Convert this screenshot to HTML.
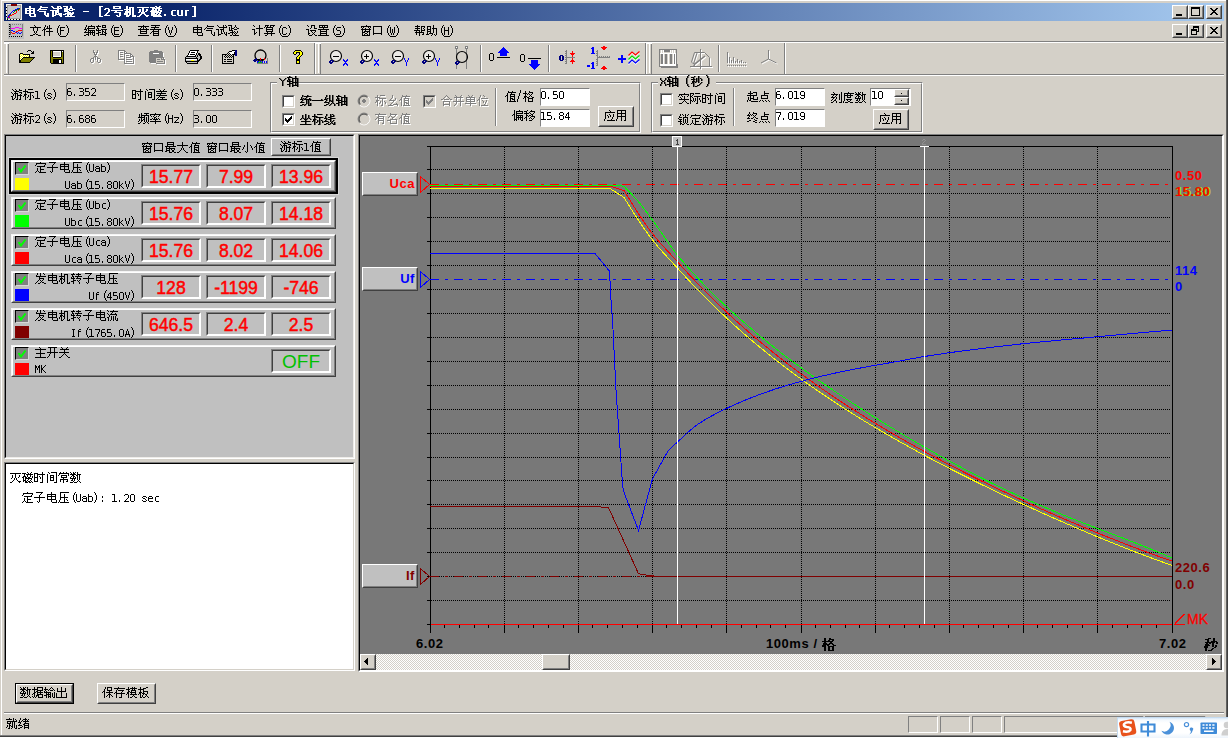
<!DOCTYPE html>
<html><head><meta charset="utf-8"><title>UI</title>
<style>
html,body{margin:0;padding:0}
body{width:1228px;height:738px;overflow:hidden;background:#D4D0C8;position:relative;font-family:"Liberation Sans",sans-serif}
div,svg,span{position:absolute;box-sizing:content-box}
svg{overflow:visible}
svg.t{shape-rendering:crispEdges}
.v{color:#f00;font-size:19px;line-height:25px;text-align:center;white-space:nowrap;transform:scaleX(.925);-webkit-text-stroke:.5px currentColor}
.cl{font-weight:bold;font-size:13px;line-height:13px;white-space:nowrap;letter-spacing:.55px}
</style></head><body>
<div style="left:0px;top:0px;width:1228px;height:1px;background:#FFFFFF;"></div>
<div style="left:1px;top:0px;width:1px;height:736px;background:#FFFFFF;"></div>
<div style="left:0px;top:0px;width:1px;height:738px;background:#D4D0C8;"></div>
<div style="left:1226px;top:0px;width:1px;height:737px;background:#606060;"></div>
<div style="left:1227px;top:0px;width:1px;height:738px;background:#404040;"></div>
<div style="left:0px;top:735px;width:1227px;height:1px;background:#808080;"></div>
<div style="left:0px;top:736px;width:1228px;height:1px;background:#404040;"></div>
<div style="left:0px;top:737px;width:1228px;height:1px;background:#FFFFFF;"></div>
<div style="left:1px;top:735px;width:1px;height:1px;background:#808080;"></div>
<div style="left:4px;top:3px;width:1220px;height:18px;background:linear-gradient(90deg,#0A246A 0%,#0A246A 12%,#A6CAF0 100%);"></div>
<svg class="t" style="left:24px;top:5px;" width="176" height="15" viewBox="0 -1 176 15" role="img" aria-label="电气试验 - [2号机灭磁.cur]"><title>电气试验 - [2号机灭磁.cur]</title><path d="M5 0h2v1h-2zM5 1h2v1h-2zM1 2h10v1h-10zM1 3h2v1h-2zM5 3h2v1h-2zM9 3h2v1h-2zM1 4h10v1h-10zM1 5h2v1h-2zM5 5h2v1h-2zM9 5h2v1h-2zM1 6h2v1h-2zM5 6h2v1h-2zM9 6h2v1h-2zM1 7h10v1h-10zM5 8h2v1h-2zM10 8h2v1h-2zM5 9h2v1h-2zM10 9h2v1h-2zM6 10h6v1h-6zM16 0h2v1h-2zM16 1h8v1h-8zM15 2h2v1h-2zM14 3h9v1h-9zM13 4h2v1h-2zM15 5h7v1h-7zM20 6h2v1h-2zM20 7h2v1h-2zM23 7h2v1h-2zM20 8h2v1h-2zM23 8h2v1h-2zM21 9h4v1h-4zM22 10h3v1h-3zM27 0h2v1h-2zM33 0h4v1h-4zM28 1h2v1h-2zM33 1h2v1h-2zM36 1h2v1h-2zM29 2h9v1h-9zM33 3h2v1h-2zM26 4h9v1h-9zM28 5h2v1h-2zM31 5h4v1h-4zM28 6h2v1h-2zM31 6h4v1h-4zM28 7h2v1h-2zM31 7h2v1h-2zM34 7h4v1h-4zM28 8h2v1h-2zM31 8h7v1h-7zM28 9h4v1h-4zM35 9h3v1h-3zM28 10h2v1h-2zM36 10h2v1h-2zM39 0h5v1h-5zM46 0h2v1h-2zM42 1h2v1h-2zM46 1h2v1h-2zM40 2h4v1h-4zM45 2h4v1h-4zM40 3h6v1h-6zM48 3h3v1h-3zM40 4h4v1h-4zM45 4h4v1h-4zM40 5h5v1h-5zM43 6h4v1h-4zM48 6h2v1h-2zM41 7h9v1h-9zM39 8h3v1h-3zM43 8h6v1h-6zM43 9h2v1h-2zM46 9h2v1h-2zM41 10h10v1h-10zM59 5h6v1h-6zM75 0h4v1h-4zM75 1h2v1h-2zM75 2h2v1h-2zM75 3h2v1h-2zM75 4h2v1h-2zM75 5h2v1h-2zM75 6h2v1h-2zM75 7h2v1h-2zM75 8h2v1h-2zM75 9h2v1h-2zM75 10h4v1h-4zM81 2h4v1h-4zM80 3h2v1h-2zM84 3h2v1h-2zM84 4h2v1h-2zM84 5h2v1h-2zM83 6h2v1h-2zM82 7h2v1h-2zM81 8h2v1h-2zM80 9h6v1h-6zM89 0h8v1h-8zM89 1h2v1h-2zM95 1h2v1h-2zM89 2h8v1h-8zM87 4h12v1h-12zM91 5h2v1h-2zM90 6h7v1h-7zM95 7h2v1h-2zM95 8h2v1h-2zM92 9h2v1h-2zM95 9h2v1h-2zM93 10h3v1h-3zM102 0h2v1h-2zM102 1h2v1h-2zM105 1h5v1h-5zM102 2h2v1h-2zM105 2h2v1h-2zM108 2h2v1h-2zM100 3h7v1h-7zM108 3h2v1h-2zM102 4h2v1h-2zM105 4h2v1h-2zM108 4h2v1h-2zM101 5h6v1h-6zM108 5h2v1h-2zM101 6h6v1h-6zM108 6h2v1h-2zM100 7h4v1h-4zM105 7h2v1h-2zM108 7h2v1h-2zM100 8h4v1h-4zM105 8h2v1h-2zM108 8h2v1h-2zM102 9h4v1h-4zM108 9h4v1h-4zM102 10h3v1h-3zM108 10h4v1h-4zM113 1h12v1h-12zM118 2h2v1h-2zM115 3h2v1h-2zM118 3h2v1h-2zM122 3h2v1h-2zM115 4h2v1h-2zM118 4h2v1h-2zM122 4h2v1h-2zM115 5h2v1h-2zM118 5h2v1h-2zM121 5h2v1h-2zM114 6h2v1h-2zM117 6h4v1h-4zM117 7h4v1h-4zM116 8h2v1h-2zM120 8h2v1h-2zM115 9h2v1h-2zM121 9h4v1h-4zM113 10h3v1h-3zM122 10h2v1h-2zM131 0h2v1h-2zM135 0h2v1h-2zM126 1h5v1h-5zM132 1h4v1h-4zM128 2h10v1h-10zM128 3h2v1h-2zM131 3h2v1h-2zM134 3h2v1h-2zM127 4h6v1h-6zM134 4h4v1h-4zM126 5h9v1h-9zM136 5h2v1h-2zM127 6h10v1h-10zM127 7h4v1h-4zM132 7h2v1h-2zM135 7h2v1h-2zM127 8h6v1h-6zM134 8h2v1h-2zM127 9h10v1h-10zM129 10h9v1h-9zM140 8h2v1h-2zM140 9h2v1h-2zM148 4h4v1h-4zM147 5h2v1h-2zM147 6h2v1h-2zM147 7h2v1h-2zM147 8h2v1h-2zM148 9h4v1h-4zM153 4h2v1h-2zM157 4h2v1h-2zM153 5h2v1h-2zM157 5h2v1h-2zM153 6h2v1h-2zM157 6h2v1h-2zM153 7h2v1h-2zM157 7h2v1h-2zM153 8h2v1h-2zM157 8h2v1h-2zM154 9h5v1h-5zM161 4h4v1h-4zM161 5h2v1h-2zM161 6h2v1h-2zM161 7h2v1h-2zM161 8h2v1h-2zM161 9h2v1h-2zM168 0h4v1h-4zM170 1h2v1h-2zM170 2h2v1h-2zM170 3h2v1h-2zM170 4h2v1h-2zM170 5h2v1h-2zM170 6h2v1h-2zM170 7h2v1h-2zM170 8h2v1h-2zM170 9h2v1h-2zM168 10h4v1h-4z" fill="#fff"/></svg>
<div style="left:1172px;top:5px;width:14px;height:12px;border:1px solid;border-color:#FFFFFF #404040 #404040 #FFFFFF"><div style="left:0;top:0;width:12px;height:10px;background:#D4D0C8;border:1px solid;border-color:#D4D0C8 #808080 #808080 #D4D0C8"></div></div>
<svg style="left:1172px;top:5px" width="16" height="14" viewBox="0 0 16 14" shape-rendering="crispEdges"><path d="M4 9h6v2h-6z" fill="#000" fill-rule="evenodd"/></svg>
<div style="left:1188px;top:5px;width:14px;height:12px;border:1px solid;border-color:#FFFFFF #404040 #404040 #FFFFFF"><div style="left:0;top:0;width:12px;height:10px;background:#D4D0C8;border:1px solid;border-color:#D4D0C8 #808080 #808080 #D4D0C8"></div></div>
<svg style="left:1188px;top:5px" width="16" height="14" viewBox="0 0 16 14" shape-rendering="crispEdges"><path d="M3 2h9v9h-9zM4 4v6h7v-6z" fill="#000" fill-rule="evenodd"/></svg>
<div style="left:1206px;top:5px;width:14px;height:12px;border:1px solid;border-color:#FFFFFF #404040 #404040 #FFFFFF"><div style="left:0;top:0;width:12px;height:10px;background:#D4D0C8;border:1px solid;border-color:#D4D0C8 #808080 #808080 #D4D0C8"></div></div>
<svg style="left:1206px;top:5px" width="16" height="14" viewBox="0 0 16 14" shape-rendering="crispEdges"><path d="M4 3h2v1h-2zM10 3h2v1h-2zM5 4h2v1h-2zM9 4h2v1h-2zM6 5h2v1h-2zM8 5h2v1h-2zM7 6h2v1h-2zM7 6h2v1h-2zM8 7h2v1h-2zM6 7h2v1h-2zM9 8h2v1h-2zM5 8h2v1h-2zM10 9h2v1h-2zM4 9h2v1h-2z" fill="#000" fill-rule="nonzero"/></svg>
<div style="left:1172px;top:24px;width:14px;height:12px;border:1px solid;border-color:#FFFFFF #404040 #404040 #FFFFFF"><div style="left:0;top:0;width:12px;height:10px;background:#D4D0C8;border:1px solid;border-color:#D4D0C8 #808080 #808080 #D4D0C8"></div></div>
<svg style="left:1172px;top:24px" width="16" height="14" viewBox="0 0 16 14" shape-rendering="crispEdges"><path d="M4 9h6v2h-6z" fill="#000" fill-rule="evenodd"/></svg>
<div style="left:1188px;top:24px;width:14px;height:12px;border:1px solid;border-color:#FFFFFF #404040 #404040 #FFFFFF"><div style="left:0;top:0;width:12px;height:10px;background:#D4D0C8;border:1px solid;border-color:#D4D0C8 #808080 #808080 #D4D0C8"></div></div>
<svg style="left:1188px;top:24px" width="16" height="14" viewBox="0 0 16 14" shape-rendering="crispEdges"><path d="M5 2h6v6h-2v-1h1v-3h-4v1h-1zM3 5h6v6h-6zM4 7v3h4v-3z" fill="#000" fill-rule="evenodd"/></svg>
<div style="left:1206px;top:24px;width:14px;height:12px;border:1px solid;border-color:#FFFFFF #404040 #404040 #FFFFFF"><div style="left:0;top:0;width:12px;height:10px;background:#D4D0C8;border:1px solid;border-color:#D4D0C8 #808080 #808080 #D4D0C8"></div></div>
<svg style="left:1206px;top:24px" width="16" height="14" viewBox="0 0 16 14" shape-rendering="crispEdges"><path d="M4 3h2v1h-2zM10 3h2v1h-2zM5 4h2v1h-2zM9 4h2v1h-2zM6 5h2v1h-2zM8 5h2v1h-2zM7 6h2v1h-2zM7 6h2v1h-2zM8 7h2v1h-2zM6 7h2v1h-2zM9 8h2v1h-2zM5 8h2v1h-2zM10 9h2v1h-2zM4 9h2v1h-2z" fill="#000" fill-rule="nonzero"/></svg>
<svg class="t" style="left:30px;top:24px;" width="44" height="15" viewBox="0 -1 44 15" role="img" aria-label="文件(F)"><title>文件(F)</title><path d="M4 0h1v1h-1zM5 1h1v1h-1zM0 2h11v1h-11zM3 3h1v1h-1zM7 3h1v1h-1zM3 4h1v1h-1zM7 4h1v1h-1zM3 5h1v1h-1zM7 5h1v1h-1zM4 6h1v1h-1zM6 6h1v1h-1zM4 7h1v1h-1zM6 7h1v1h-1zM5 8h1v1h-1zM3 9h2v1h-2zM6 9h2v1h-2zM0 10h3v1h-3zM8 10h3v1h-3zM15 0h1v1h-1zM19 0h1v1h-1zM15 1h1v1h-1zM17 1h1v1h-1zM19 1h1v1h-1zM14 2h1v1h-1zM17 2h1v1h-1zM19 2h1v1h-1zM14 3h1v1h-1zM16 3h6v1h-6zM13 4h3v1h-3zM19 4h1v1h-1zM12 5h1v1h-1zM14 5h1v1h-1zM19 5h1v1h-1zM14 6h1v1h-1zM16 6h7v1h-7zM14 7h1v1h-1zM19 7h1v1h-1zM14 8h1v1h-1zM19 8h1v1h-1zM14 9h1v1h-1zM19 9h1v1h-1zM14 10h1v1h-1zM19 10h1v1h-1zM29 0h1v1h-1zM28 1h1v1h-1zM28 2h1v1h-1zM27 3h1v1h-1zM27 4h1v1h-1zM27 5h1v1h-1zM27 6h1v1h-1zM27 7h1v1h-1zM28 8h1v1h-1zM28 9h1v1h-1zM29 10h1v1h-1zM30 2h5v1h-5zM30 3h1v1h-1zM30 4h1v1h-1zM30 5h4v1h-4zM30 6h1v1h-1zM30 7h1v1h-1zM30 8h1v1h-1zM30 9h1v1h-1zM36 0h1v1h-1zM37 1h1v1h-1zM37 2h1v1h-1zM38 3h1v1h-1zM38 4h1v1h-1zM38 5h1v1h-1zM38 6h1v1h-1zM38 7h1v1h-1zM37 8h1v1h-1zM37 9h1v1h-1zM36 10h1v1h-1zM30 11h6v1h-6z" fill="#000"/></svg>
<svg class="t" style="left:84px;top:24px;" width="44" height="15" viewBox="0 -1 44 15" role="img" aria-label="编辑(E)"><title>编辑(E)</title><path d="M2 0h1v1h-1zM7 0h1v1h-1zM2 1h1v1h-1zM4 1h7v1h-7zM1 2h1v1h-1zM4 2h1v1h-1zM10 2h1v1h-1zM1 3h1v1h-1zM3 3h8v1h-8zM0 4h3v1h-3zM4 4h1v1h-1zM2 5h1v1h-1zM4 5h7v1h-7zM1 6h1v1h-1zM4 6h1v1h-1zM6 6h1v1h-1zM8 6h1v1h-1zM10 6h1v1h-1zM0 7h11v1h-11zM4 8h1v1h-1zM6 8h1v1h-1zM8 8h1v1h-1zM10 8h1v1h-1zM2 9h3v1h-3zM6 9h1v1h-1zM8 9h1v1h-1zM10 9h1v1h-1zM0 10h2v1h-2zM4 10h1v1h-1zM9 10h2v1h-2zM14 0h1v1h-1zM18 0h4v1h-4zM12 1h5v1h-5zM18 1h1v1h-1zM21 1h1v1h-1zM13 2h1v1h-1zM18 2h4v1h-4zM13 3h2v1h-2zM12 4h1v1h-1zM14 4h1v1h-1zM17 4h6v1h-6zM12 5h5v1h-5zM18 5h1v1h-1zM21 5h1v1h-1zM14 6h1v1h-1zM18 6h2v1h-2zM21 6h1v1h-1zM14 7h3v1h-3zM18 7h1v1h-1zM20 7h2v1h-2zM12 8h3v1h-3zM18 8h1v1h-1zM21 8h2v1h-2zM14 9h1v1h-1zM16 9h6v1h-6zM14 10h1v1h-1zM21 10h1v1h-1zM29 0h1v1h-1zM28 1h1v1h-1zM28 2h1v1h-1zM27 3h1v1h-1zM27 4h1v1h-1zM27 5h1v1h-1zM27 6h1v1h-1zM27 7h1v1h-1zM28 8h1v1h-1zM28 9h1v1h-1zM29 10h1v1h-1zM30 2h5v1h-5zM30 3h1v1h-1zM30 4h1v1h-1zM30 5h5v1h-5zM30 6h1v1h-1zM30 7h1v1h-1zM30 8h1v1h-1zM30 9h5v1h-5zM36 0h1v1h-1zM37 1h1v1h-1zM37 2h1v1h-1zM38 3h1v1h-1zM38 4h1v1h-1zM38 5h1v1h-1zM38 6h1v1h-1zM38 7h1v1h-1zM37 8h1v1h-1zM37 9h1v1h-1zM36 10h1v1h-1zM30 11h6v1h-6z" fill="#000"/></svg>
<svg class="t" style="left:138px;top:24px;" width="44" height="15" viewBox="0 -1 44 15" role="img" aria-label="查看(V)"><title>查看(V)</title><path d="M5 0h1v1h-1zM0 1h11v1h-11zM3 2h1v1h-1zM5 2h1v1h-1zM7 2h1v1h-1zM2 3h1v1h-1zM5 3h1v1h-1zM8 3h1v1h-1zM0 4h11v1h-11zM2 5h1v1h-1zM8 5h1v1h-1zM2 6h7v1h-7zM2 7h1v1h-1zM8 7h1v1h-1zM2 8h7v1h-7zM0 10h11v1h-11zM13 0h9v1h-9zM17 1h1v1h-1zM13 2h8v1h-8zM16 3h1v1h-1zM12 4h11v1h-11zM15 5h1v1h-1zM20 5h1v1h-1zM14 6h7v1h-7zM13 7h1v1h-1zM15 7h1v1h-1zM20 7h1v1h-1zM12 8h1v1h-1zM15 8h6v1h-6zM15 9h1v1h-1zM20 9h1v1h-1zM15 10h6v1h-6zM29 0h1v1h-1zM28 1h1v1h-1zM28 2h1v1h-1zM27 3h1v1h-1zM27 4h1v1h-1zM27 5h1v1h-1zM27 6h1v1h-1zM27 7h1v1h-1zM28 8h1v1h-1zM28 9h1v1h-1zM29 10h1v1h-1zM30 2h1v1h-1zM34 2h1v1h-1zM30 3h1v1h-1zM34 3h1v1h-1zM30 4h1v1h-1zM34 4h1v1h-1zM31 5h1v1h-1zM33 5h1v1h-1zM31 6h1v1h-1zM33 6h1v1h-1zM31 7h1v1h-1zM33 7h1v1h-1zM32 8h1v1h-1zM32 9h1v1h-1zM36 0h1v1h-1zM37 1h1v1h-1zM37 2h1v1h-1zM38 3h1v1h-1zM38 4h1v1h-1zM38 5h1v1h-1zM38 6h1v1h-1zM38 7h1v1h-1zM37 8h1v1h-1zM37 9h1v1h-1zM36 10h1v1h-1zM30 11h6v1h-6z" fill="#000"/></svg>
<svg class="t" style="left:192px;top:24px;" width="50" height="15" viewBox="0 -1 50 15" role="img" aria-label="电气试验"><title>电气试验</title><path d="M5 0h1v1h-1zM5 1h1v1h-1zM1 2h9v1h-9zM1 3h1v1h-1zM5 3h1v1h-1zM9 3h1v1h-1zM1 4h9v1h-9zM1 5h1v1h-1zM5 5h1v1h-1zM9 5h1v1h-1zM1 6h1v1h-1zM5 6h1v1h-1zM9 6h1v1h-1zM1 7h9v1h-9zM5 8h1v1h-1zM10 8h1v1h-1zM5 9h1v1h-1zM10 9h1v1h-1zM6 10h5v1h-5zM15 0h1v1h-1zM15 1h7v1h-7zM14 2h1v1h-1zM13 3h1v1h-1zM15 3h6v1h-6zM12 4h1v1h-1zM14 5h6v1h-6zM19 6h1v1h-1zM19 7h1v1h-1zM22 7h1v1h-1zM19 8h1v1h-1zM22 8h1v1h-1zM20 9h1v1h-1zM22 9h1v1h-1zM21 10h2v1h-2zM25 0h1v1h-1zM31 0h1v1h-1zM33 0h1v1h-1zM26 1h1v1h-1zM31 1h1v1h-1zM34 1h1v1h-1zM27 2h8v1h-8zM31 3h1v1h-1zM24 4h3v1h-3zM28 4h4v1h-4zM26 5h1v1h-1zM29 5h1v1h-1zM31 5h1v1h-1zM26 6h1v1h-1zM29 6h1v1h-1zM31 6h1v1h-1zM26 7h1v1h-1zM29 7h1v1h-1zM32 7h1v1h-1zM34 7h1v1h-1zM26 8h1v1h-1zM29 8h2v1h-2zM32 8h1v1h-1zM34 8h1v1h-1zM26 9h3v1h-3zM33 9h2v1h-2zM26 10h1v1h-1zM34 10h1v1h-1zM36 0h4v1h-4zM43 0h1v1h-1zM39 1h1v1h-1zM43 1h1v1h-1zM37 2h1v1h-1zM39 2h1v1h-1zM42 2h1v1h-1zM44 2h1v1h-1zM37 3h1v1h-1zM39 3h3v1h-3zM45 3h2v1h-2zM37 4h1v1h-1zM39 4h1v1h-1zM42 4h3v1h-3zM37 5h4v1h-4zM40 6h1v1h-1zM42 6h1v1h-1zM45 6h1v1h-1zM38 7h4v1h-4zM43 7h1v1h-1zM45 7h1v1h-1zM36 8h2v1h-2zM40 8h1v1h-1zM42 8h1v1h-1zM44 8h1v1h-1zM40 9h1v1h-1zM43 9h1v1h-1zM38 10h2v1h-2zM41 10h6v1h-6z" fill="#000"/></svg>
<svg class="t" style="left:252px;top:24px;" width="44" height="15" viewBox="0 -1 44 15" role="img" aria-label="计算(C)"><title>计算(C)</title><path d="M1 0h1v1h-1zM7 0h1v1h-1zM2 1h1v1h-1zM7 1h1v1h-1zM7 2h1v1h-1zM4 3h7v1h-7zM0 4h3v1h-3zM7 4h1v1h-1zM2 5h1v1h-1zM7 5h1v1h-1zM2 6h1v1h-1zM7 6h1v1h-1zM2 7h1v1h-1zM4 7h1v1h-1zM7 7h1v1h-1zM2 8h2v1h-2zM7 8h1v1h-1zM2 9h1v1h-1zM7 9h1v1h-1zM7 10h1v1h-1zM13 0h4v1h-4zM18 0h5v1h-5zM13 1h1v1h-1zM15 1h1v1h-1zM18 1h1v1h-1zM21 1h1v1h-1zM12 2h1v1h-1zM14 2h7v1h-7zM14 3h1v1h-1zM20 3h1v1h-1zM14 4h7v1h-7zM14 5h1v1h-1zM20 5h1v1h-1zM14 6h7v1h-7zM15 7h1v1h-1zM19 7h1v1h-1zM12 8h11v1h-11zM15 9h1v1h-1zM19 9h1v1h-1zM13 10h2v1h-2zM19 10h1v1h-1zM29 0h1v1h-1zM28 1h1v1h-1zM28 2h1v1h-1zM27 3h1v1h-1zM27 4h1v1h-1zM27 5h1v1h-1zM27 6h1v1h-1zM27 7h1v1h-1zM28 8h1v1h-1zM28 9h1v1h-1zM29 10h1v1h-1zM31 2h3v1h-3zM30 3h1v1h-1zM34 3h1v1h-1zM30 4h1v1h-1zM30 5h1v1h-1zM30 6h1v1h-1zM30 7h1v1h-1zM30 8h1v1h-1zM34 8h1v1h-1zM31 9h3v1h-3zM36 0h1v1h-1zM37 1h1v1h-1zM37 2h1v1h-1zM38 3h1v1h-1zM38 4h1v1h-1zM38 5h1v1h-1zM38 6h1v1h-1zM38 7h1v1h-1zM37 8h1v1h-1zM37 9h1v1h-1zM36 10h1v1h-1zM30 11h6v1h-6z" fill="#000"/></svg>
<svg class="t" style="left:306px;top:24px;" width="44" height="15" viewBox="0 -1 44 15" role="img" aria-label="设置(S)"><title>设置(S)</title><path d="M1 0h1v1h-1zM5 0h4v1h-4zM2 1h1v1h-1zM5 1h1v1h-1zM8 1h1v1h-1zM5 2h1v1h-1zM8 2h1v1h-1zM4 3h1v1h-1zM8 3h3v1h-3zM0 4h3v1h-3zM2 5h1v1h-1zM4 5h6v1h-6zM2 6h1v1h-1zM5 6h1v1h-1zM9 6h1v1h-1zM2 7h1v1h-1zM6 7h1v1h-1zM8 7h1v1h-1zM2 8h2v1h-2zM7 8h1v1h-1zM2 9h1v1h-1zM6 9h1v1h-1zM8 9h1v1h-1zM3 10h3v1h-3zM9 10h2v1h-2zM13 0h9v1h-9zM13 1h1v1h-1zM16 1h1v1h-1zM18 1h1v1h-1zM21 1h1v1h-1zM13 2h9v1h-9zM17 3h1v1h-1zM12 4h11v1h-11zM14 5h1v1h-1zM20 5h1v1h-1zM14 6h7v1h-7zM14 7h1v1h-1zM20 7h1v1h-1zM14 8h7v1h-7zM14 9h1v1h-1zM20 9h1v1h-1zM12 10h11v1h-11zM29 0h1v1h-1zM28 1h1v1h-1zM28 2h1v1h-1zM27 3h1v1h-1zM27 4h1v1h-1zM27 5h1v1h-1zM27 6h1v1h-1zM27 7h1v1h-1zM28 8h1v1h-1zM28 9h1v1h-1zM29 10h1v1h-1zM31 2h4v1h-4zM30 3h1v1h-1zM30 4h1v1h-1zM31 5h3v1h-3zM34 6h1v1h-1zM34 7h1v1h-1zM34 8h1v1h-1zM30 9h4v1h-4zM36 0h1v1h-1zM37 1h1v1h-1zM37 2h1v1h-1zM38 3h1v1h-1zM38 4h1v1h-1zM38 5h1v1h-1zM38 6h1v1h-1zM38 7h1v1h-1zM37 8h1v1h-1zM37 9h1v1h-1zM36 10h1v1h-1zM30 11h6v1h-6z" fill="#000"/></svg>
<svg class="t" style="left:360px;top:24px;" width="44" height="15" viewBox="0 -1 44 15" role="img" aria-label="窗口(W)"><title>窗口(W)</title><path d="M6 0h1v1h-1zM1 1h10v1h-10zM1 2h1v1h-1zM3 2h1v1h-1zM8 2h1v1h-1zM10 2h1v1h-1zM2 3h1v1h-1zM5 3h1v1h-1zM9 3h1v1h-1zM1 4h10v1h-10zM2 5h1v1h-1zM5 5h1v1h-1zM9 5h1v1h-1zM2 6h1v1h-1zM4 6h6v1h-6zM2 7h3v1h-3zM7 7h1v1h-1zM9 7h1v1h-1zM2 8h1v1h-1zM5 8h2v1h-2zM9 8h1v1h-1zM2 9h1v1h-1zM4 9h1v1h-1zM7 9h1v1h-1zM9 9h1v1h-1zM2 10h8v1h-8zM13 1h9v1h-9zM13 2h1v1h-1zM21 2h1v1h-1zM13 3h1v1h-1zM21 3h1v1h-1zM13 4h1v1h-1zM21 4h1v1h-1zM13 5h1v1h-1zM21 5h1v1h-1zM13 6h1v1h-1zM21 6h1v1h-1zM13 7h1v1h-1zM21 7h1v1h-1zM13 8h9v1h-9zM13 9h1v1h-1zM21 9h1v1h-1zM29 0h1v1h-1zM28 1h1v1h-1zM28 2h1v1h-1zM27 3h1v1h-1zM27 4h1v1h-1zM27 5h1v1h-1zM27 6h1v1h-1zM27 7h1v1h-1zM28 8h1v1h-1zM28 9h1v1h-1zM29 10h1v1h-1zM30 2h1v1h-1zM34 2h1v1h-1zM30 3h1v1h-1zM34 3h1v1h-1zM30 4h1v1h-1zM32 4h1v1h-1zM34 4h1v1h-1zM30 5h1v1h-1zM32 5h1v1h-1zM34 5h1v1h-1zM30 6h1v1h-1zM32 6h1v1h-1zM34 6h1v1h-1zM30 7h1v1h-1zM32 7h1v1h-1zM34 7h1v1h-1zM31 8h1v1h-1zM33 8h1v1h-1zM31 9h1v1h-1zM33 9h1v1h-1zM36 0h1v1h-1zM37 1h1v1h-1zM37 2h1v1h-1zM38 3h1v1h-1zM38 4h1v1h-1zM38 5h1v1h-1zM38 6h1v1h-1zM38 7h1v1h-1zM37 8h1v1h-1zM37 9h1v1h-1zM36 10h1v1h-1zM30 11h6v1h-6z" fill="#000"/></svg>
<svg class="t" style="left:414px;top:24px;" width="44" height="15" viewBox="0 -1 44 15" role="img" aria-label="帮助(H)"><title>帮助(H)</title><path d="M3 0h1v1h-1zM1 1h5v1h-5zM7 1h4v1h-4zM3 2h1v1h-1zM7 2h1v1h-1zM10 2h1v1h-1zM1 3h5v1h-5zM7 3h1v1h-1zM9 3h1v1h-1zM3 4h1v1h-1zM7 4h1v1h-1zM10 4h1v1h-1zM0 5h6v1h-6zM7 5h4v1h-4zM2 6h1v1h-1zM5 6h1v1h-1zM7 6h1v1h-1zM1 7h9v1h-9zM2 8h1v1h-1zM5 8h1v1h-1zM9 8h1v1h-1zM2 9h1v1h-1zM5 9h1v1h-1zM8 9h2v1h-2zM5 10h1v1h-1zM19 0h1v1h-1zM13 1h4v1h-4zM19 1h1v1h-1zM13 2h1v1h-1zM16 2h1v1h-1zM19 2h1v1h-1zM13 3h1v1h-1zM16 3h1v1h-1zM18 3h5v1h-5zM13 4h4v1h-4zM19 4h1v1h-1zM22 4h1v1h-1zM13 5h1v1h-1zM16 5h1v1h-1zM19 5h1v1h-1zM22 5h1v1h-1zM13 6h4v1h-4zM19 6h1v1h-1zM22 6h1v1h-1zM13 7h1v1h-1zM16 7h1v1h-1zM19 7h1v1h-1zM22 7h1v1h-1zM13 8h1v1h-1zM15 8h4v1h-4zM22 8h1v1h-1zM12 9h3v1h-3zM18 9h1v1h-1zM20 9h1v1h-1zM22 9h1v1h-1zM17 10h1v1h-1zM21 10h1v1h-1zM29 0h1v1h-1zM28 1h1v1h-1zM28 2h1v1h-1zM27 3h1v1h-1zM27 4h1v1h-1zM27 5h1v1h-1zM27 6h1v1h-1zM27 7h1v1h-1zM28 8h1v1h-1zM28 9h1v1h-1zM29 10h1v1h-1zM30 2h1v1h-1zM34 2h1v1h-1zM30 3h1v1h-1zM34 3h1v1h-1zM30 4h1v1h-1zM34 4h1v1h-1zM30 5h5v1h-5zM30 6h1v1h-1zM34 6h1v1h-1zM30 7h1v1h-1zM34 7h1v1h-1zM30 8h1v1h-1zM34 8h1v1h-1zM30 9h1v1h-1zM34 9h1v1h-1zM36 0h1v1h-1zM37 1h1v1h-1zM37 2h1v1h-1zM38 3h1v1h-1zM38 4h1v1h-1zM38 5h1v1h-1zM38 6h1v1h-1zM38 7h1v1h-1zM37 8h1v1h-1zM37 9h1v1h-1zM36 10h1v1h-1zM30 11h6v1h-6z" fill="#000"/></svg>
<div style="left:4px;top:41px;width:1220px;height:1px;background:#808080;"></div>
<div style="left:4px;top:42px;width:1220px;height:1px;background:#FFFFFF;"></div>
<div style="left:4px;top:74px;width:1220px;height:1px;background:#808080;"></div>
<div style="left:4px;top:75px;width:1220px;height:1px;background:#FFFFFF;"></div>
<div style="left:6px;top:44px;width:1px;height:29px;background:#FFFFFF;"></div>
<div style="left:8px;top:44px;width:1px;height:30px;background:#808080;"></div>
<div style="left:4px;top:43px;width:5px;height:1px;background:#FFFFFF;"></div>
<div style="left:314px;top:43px;width:1px;height:31px;background:#808080;"></div>
<div style="left:315px;top:43px;width:1px;height:31px;background:#FFFFFF;"></div>
<div style="left:318px;top:44px;width:1px;height:29px;background:#FFFFFF;"></div>
<div style="left:320px;top:44px;width:1px;height:30px;background:#808080;"></div>
<div style="left:316px;top:43px;width:5px;height:1px;background:#FFFFFF;"></div>
<div style="left:645px;top:43px;width:1px;height:31px;background:#808080;"></div>
<div style="left:646px;top:43px;width:1px;height:31px;background:#FFFFFF;"></div>
<div style="left:649px;top:44px;width:1px;height:29px;background:#FFFFFF;"></div>
<div style="left:651px;top:44px;width:1px;height:30px;background:#808080;"></div>
<div style="left:647px;top:43px;width:5px;height:1px;background:#FFFFFF;"></div>
<div style="left:784px;top:43px;width:1px;height:31px;background:#808080;"></div>
<div style="left:785px;top:43px;width:1px;height:31px;background:#FFFFFF;"></div>
<div style="left:75px;top:45px;width:1px;height:27px;background:#808080;"></div>
<div style="left:76px;top:45px;width:1px;height:27px;background:#FFFFFF;"></div>
<div style="left:175px;top:45px;width:1px;height:27px;background:#808080;"></div>
<div style="left:176px;top:45px;width:1px;height:27px;background:#FFFFFF;"></div>
<div style="left:211px;top:45px;width:1px;height:27px;background:#808080;"></div>
<div style="left:212px;top:45px;width:1px;height:27px;background:#FFFFFF;"></div>
<div style="left:279px;top:45px;width:1px;height:27px;background:#808080;"></div>
<div style="left:280px;top:45px;width:1px;height:27px;background:#FFFFFF;"></div>
<div style="left:480px;top:45px;width:1px;height:27px;background:#808080;"></div>
<div style="left:481px;top:45px;width:1px;height:27px;background:#FFFFFF;"></div>
<div style="left:548px;top:45px;width:1px;height:27px;background:#808080;"></div>
<div style="left:549px;top:45px;width:1px;height:27px;background:#FFFFFF;"></div>
<div style="left:718px;top:45px;width:1px;height:27px;background:#808080;"></div>
<div style="left:719px;top:45px;width:1px;height:27px;background:#FFFFFF;"></div>
<svg class="t" style="left:11px;top:88px;" width="50" height="15" viewBox="0 -1 50 15" role="img" aria-label="游标1(s)"><title>游标1(s)</title><path d="M1 0h1v1h-1zM4 0h1v1h-1zM8 0h1v1h-1zM2 1h1v1h-1zM5 1h1v1h-1zM8 1h3v1h-3zM3 2h5v1h-5zM0 3h1v1h-1zM4 3h1v1h-1zM8 3h3v1h-3zM1 4h1v1h-1zM3 4h4v1h-4zM10 4h1v1h-1zM2 5h1v1h-1zM4 5h1v1h-1zM6 5h1v1h-1zM9 5h1v1h-1zM2 6h1v1h-1zM4 6h1v1h-1zM6 6h5v1h-5zM0 7h2v1h-2zM4 7h1v1h-1zM6 7h1v1h-1zM9 7h1v1h-1zM1 8h1v1h-1zM4 8h1v1h-1zM6 8h1v1h-1zM9 8h1v1h-1zM1 9h1v1h-1zM3 9h1v1h-1zM6 9h1v1h-1zM9 9h1v1h-1zM1 10h2v1h-2zM5 10h2v1h-2zM8 10h2v1h-2zM14 0h1v1h-1zM17 0h5v1h-5zM14 1h1v1h-1zM12 2h5v1h-5zM14 3h1v1h-1zM16 3h7v1h-7zM14 4h1v1h-1zM19 4h1v1h-1zM13 5h3v1h-3zM19 5h1v1h-1zM13 6h2v1h-2zM17 6h1v1h-1zM19 6h1v1h-1zM21 6h1v1h-1zM12 7h1v1h-1zM14 7h1v1h-1zM17 7h1v1h-1zM19 7h1v1h-1zM22 7h1v1h-1zM14 8h1v1h-1zM16 8h1v1h-1zM19 8h1v1h-1zM22 8h1v1h-1zM14 9h1v1h-1zM19 9h1v1h-1zM14 10h1v1h-1zM18 10h2v1h-2zM24 2h3v1h-3zM26 3h1v1h-1zM26 4h1v1h-1zM26 5h1v1h-1zM26 6h1v1h-1zM26 7h1v1h-1zM26 8h1v1h-1zM24 9h5v1h-5zM35 0h1v1h-1zM34 1h1v1h-1zM34 2h1v1h-1zM33 3h1v1h-1zM33 4h1v1h-1zM33 5h1v1h-1zM33 6h1v1h-1zM33 7h1v1h-1zM34 8h1v1h-1zM34 9h1v1h-1zM35 10h1v1h-1zM37 4h3v1h-3zM36 5h1v1h-1zM40 5h1v1h-1zM37 6h2v1h-2zM39 7h1v1h-1zM36 8h1v1h-1zM40 8h1v1h-1zM37 9h3v1h-3zM42 0h1v1h-1zM43 1h1v1h-1zM43 2h1v1h-1zM44 3h1v1h-1zM44 4h1v1h-1zM44 5h1v1h-1zM44 6h1v1h-1zM44 7h1v1h-1zM43 8h1v1h-1zM43 9h1v1h-1zM42 10h1v1h-1z" fill="#000"/></svg>
<svg class="t" style="left:11px;top:112px;" width="50" height="15" viewBox="0 -1 50 15" role="img" aria-label="游标2(s)"><title>游标2(s)</title><path d="M1 0h1v1h-1zM4 0h1v1h-1zM8 0h1v1h-1zM2 1h1v1h-1zM5 1h1v1h-1zM8 1h3v1h-3zM3 2h5v1h-5zM0 3h1v1h-1zM4 3h1v1h-1zM8 3h3v1h-3zM1 4h1v1h-1zM3 4h4v1h-4zM10 4h1v1h-1zM2 5h1v1h-1zM4 5h1v1h-1zM6 5h1v1h-1zM9 5h1v1h-1zM2 6h1v1h-1zM4 6h1v1h-1zM6 6h5v1h-5zM0 7h2v1h-2zM4 7h1v1h-1zM6 7h1v1h-1zM9 7h1v1h-1zM1 8h1v1h-1zM4 8h1v1h-1zM6 8h1v1h-1zM9 8h1v1h-1zM1 9h1v1h-1zM3 9h1v1h-1zM6 9h1v1h-1zM9 9h1v1h-1zM1 10h2v1h-2zM5 10h2v1h-2zM8 10h2v1h-2zM14 0h1v1h-1zM17 0h5v1h-5zM14 1h1v1h-1zM12 2h5v1h-5zM14 3h1v1h-1zM16 3h7v1h-7zM14 4h1v1h-1zM19 4h1v1h-1zM13 5h3v1h-3zM19 5h1v1h-1zM13 6h2v1h-2zM17 6h1v1h-1zM19 6h1v1h-1zM21 6h1v1h-1zM12 7h1v1h-1zM14 7h1v1h-1zM17 7h1v1h-1zM19 7h1v1h-1zM22 7h1v1h-1zM14 8h1v1h-1zM16 8h1v1h-1zM19 8h1v1h-1zM22 8h1v1h-1zM14 9h1v1h-1zM19 9h1v1h-1zM14 10h1v1h-1zM18 10h2v1h-2zM25 2h3v1h-3zM24 3h1v1h-1zM28 3h1v1h-1zM28 4h1v1h-1zM28 5h1v1h-1zM27 6h1v1h-1zM26 7h1v1h-1zM25 8h1v1h-1zM24 9h5v1h-5zM35 0h1v1h-1zM34 1h1v1h-1zM34 2h1v1h-1zM33 3h1v1h-1zM33 4h1v1h-1zM33 5h1v1h-1zM33 6h1v1h-1zM33 7h1v1h-1zM34 8h1v1h-1zM34 9h1v1h-1zM35 10h1v1h-1zM37 4h3v1h-3zM36 5h1v1h-1zM40 5h1v1h-1zM37 6h2v1h-2zM39 7h1v1h-1zM36 8h1v1h-1zM40 8h1v1h-1zM37 9h3v1h-3zM42 0h1v1h-1zM43 1h1v1h-1zM43 2h1v1h-1zM44 3h1v1h-1zM44 4h1v1h-1zM44 5h1v1h-1zM44 6h1v1h-1zM44 7h1v1h-1zM43 8h1v1h-1zM43 9h1v1h-1zM42 10h1v1h-1z" fill="#000"/></svg>
<svg class="t" style="left:132px;top:88px;" width="56" height="15" viewBox="0 -1 56 15" role="img" aria-label="时间差(s)"><title>时间差(s)</title><path d="M8 0h1v1h-1zM0 1h4v1h-4zM8 1h1v1h-1zM0 2h1v1h-1zM3 2h8v1h-8zM0 3h1v1h-1zM3 3h1v1h-1zM8 3h1v1h-1zM0 4h1v1h-1zM3 4h1v1h-1zM5 4h1v1h-1zM8 4h1v1h-1zM0 5h4v1h-4zM6 5h1v1h-1zM8 5h1v1h-1zM0 6h1v1h-1zM3 6h1v1h-1zM6 6h1v1h-1zM8 6h1v1h-1zM0 7h1v1h-1zM3 7h1v1h-1zM8 7h1v1h-1zM0 8h1v1h-1zM3 8h1v1h-1zM8 8h1v1h-1zM0 9h4v1h-4zM8 9h1v1h-1zM6 10h3v1h-3zM14 0h1v1h-1zM17 0h6v1h-6zM15 1h1v1h-1zM22 1h1v1h-1zM13 2h1v1h-1zM22 2h1v1h-1zM13 3h1v1h-1zM16 3h4v1h-4zM22 3h1v1h-1zM13 4h1v1h-1zM16 4h1v1h-1zM19 4h1v1h-1zM22 4h1v1h-1zM13 5h1v1h-1zM16 5h4v1h-4zM22 5h1v1h-1zM13 6h1v1h-1zM16 6h1v1h-1zM19 6h1v1h-1zM22 6h1v1h-1zM13 7h1v1h-1zM16 7h1v1h-1zM19 7h1v1h-1zM22 7h1v1h-1zM13 8h1v1h-1zM16 8h4v1h-4zM22 8h1v1h-1zM13 9h1v1h-1zM22 9h1v1h-1zM13 10h1v1h-1zM20 10h3v1h-3zM27 0h1v1h-1zM32 0h1v1h-1zM28 1h1v1h-1zM31 1h1v1h-1zM24 2h11v1h-11zM29 3h1v1h-1zM25 4h9v1h-9zM28 5h1v1h-1zM24 6h11v1h-11zM27 7h1v1h-1zM26 8h1v1h-1zM28 8h5v1h-5zM25 9h1v1h-1zM30 9h1v1h-1zM24 10h1v1h-1zM26 10h9v1h-9zM41 0h1v1h-1zM40 1h1v1h-1zM40 2h1v1h-1zM39 3h1v1h-1zM39 4h1v1h-1zM39 5h1v1h-1zM39 6h1v1h-1zM39 7h1v1h-1zM40 8h1v1h-1zM40 9h1v1h-1zM41 10h1v1h-1zM43 4h3v1h-3zM42 5h1v1h-1zM46 5h1v1h-1zM43 6h2v1h-2zM45 7h1v1h-1zM42 8h1v1h-1zM46 8h1v1h-1zM43 9h3v1h-3zM48 0h1v1h-1zM49 1h1v1h-1zM49 2h1v1h-1zM50 3h1v1h-1zM50 4h1v1h-1zM50 5h1v1h-1zM50 6h1v1h-1zM50 7h1v1h-1zM49 8h1v1h-1zM49 9h1v1h-1zM48 10h1v1h-1z" fill="#000"/></svg>
<svg class="t" style="left:138px;top:112px;" width="50" height="15" viewBox="0 -1 50 15" role="img" aria-label="频率(Hz)"><title>频率(Hz)</title><path d="M3 0h1v1h-1zM6 0h5v1h-5zM1 1h1v1h-1zM3 1h1v1h-1zM8 1h1v1h-1zM1 2h1v1h-1zM3 2h8v1h-8zM1 3h1v1h-1zM3 3h1v1h-1zM6 3h1v1h-1zM10 3h1v1h-1zM0 4h7v1h-7zM8 4h1v1h-1zM10 4h1v1h-1zM3 5h1v1h-1zM6 5h1v1h-1zM8 5h1v1h-1zM10 5h1v1h-1zM1 6h1v1h-1zM3 6h1v1h-1zM5 6h2v1h-2zM8 6h1v1h-1zM10 6h1v1h-1zM1 7h1v1h-1zM3 7h2v1h-2zM6 7h1v1h-1zM8 7h1v1h-1zM10 7h1v1h-1zM0 8h1v1h-1zM3 8h1v1h-1zM6 8h1v1h-1zM8 8h1v1h-1zM10 8h1v1h-1zM2 9h1v1h-1zM7 9h1v1h-1zM9 9h1v1h-1zM0 10h2v1h-2zM5 10h2v1h-2zM10 10h1v1h-1zM17 0h1v1h-1zM12 1h11v1h-11zM12 2h1v1h-1zM16 2h1v1h-1zM21 2h1v1h-1zM13 3h1v1h-1zM15 3h1v1h-1zM18 3h1v1h-1zM20 3h1v1h-1zM16 4h2v1h-2zM14 5h1v1h-1zM16 5h1v1h-1zM18 5h1v1h-1zM20 5h1v1h-1zM12 6h2v1h-2zM15 6h5v1h-5zM21 6h1v1h-1zM17 7h1v1h-1zM12 8h11v1h-11zM17 9h1v1h-1zM17 10h1v1h-1zM29 0h1v1h-1zM28 1h1v1h-1zM28 2h1v1h-1zM27 3h1v1h-1zM27 4h1v1h-1zM27 5h1v1h-1zM27 6h1v1h-1zM27 7h1v1h-1zM28 8h1v1h-1zM28 9h1v1h-1zM29 10h1v1h-1zM30 2h1v1h-1zM34 2h1v1h-1zM30 3h1v1h-1zM34 3h1v1h-1zM30 4h1v1h-1zM34 4h1v1h-1zM30 5h5v1h-5zM30 6h1v1h-1zM34 6h1v1h-1zM30 7h1v1h-1zM34 7h1v1h-1zM30 8h1v1h-1zM34 8h1v1h-1zM30 9h1v1h-1zM34 9h1v1h-1zM36 4h5v1h-5zM40 5h1v1h-1zM39 6h1v1h-1zM38 7h1v1h-1zM37 8h1v1h-1zM36 9h5v1h-5zM42 0h1v1h-1zM43 1h1v1h-1zM43 2h1v1h-1zM44 3h1v1h-1zM44 4h1v1h-1zM44 5h1v1h-1zM44 6h1v1h-1zM44 7h1v1h-1zM43 8h1v1h-1zM43 9h1v1h-1zM42 10h1v1h-1z" fill="#000"/></svg>
<div style="left:66px;top:83px;width:57px;height:16px;background:#D4D0C8;border:1px solid;border-color:#808080 #FFFFFF #FFFFFF #808080"></div>
<svg class="t" style="left:67px;top:85px;" width="32" height="15" viewBox="0 -1 32 15" role="img" aria-label="6.352"><title>6.352</title><path d="M1 2h3v1h-3zM0 3h1v1h-1zM0 4h1v1h-1zM0 5h4v1h-4zM0 6h1v1h-1zM4 6h1v1h-1zM0 7h1v1h-1zM4 7h1v1h-1zM0 8h1v1h-1zM4 8h1v1h-1zM1 9h3v1h-3zM7 8h1v1h-1zM7 9h1v1h-1zM12 2h4v1h-4zM16 3h1v1h-1zM16 4h1v1h-1zM13 5h3v1h-3zM16 6h1v1h-1zM16 7h1v1h-1zM16 8h1v1h-1zM12 9h4v1h-4zM18 2h4v1h-4zM18 3h1v1h-1zM18 4h1v1h-1zM18 5h4v1h-4zM22 6h1v1h-1zM22 7h1v1h-1zM22 8h1v1h-1zM18 9h4v1h-4zM25 2h3v1h-3zM24 3h1v1h-1zM28 3h1v1h-1zM28 4h1v1h-1zM28 5h1v1h-1zM27 6h1v1h-1zM26 7h1v1h-1zM25 8h1v1h-1zM24 9h5v1h-5z" fill="#000"/></svg>
<div style="left:193px;top:83px;width:57px;height:16px;background:#D4D0C8;border:1px solid;border-color:#808080 #FFFFFF #FFFFFF #808080"></div>
<svg class="t" style="left:194px;top:85px;" width="32" height="15" viewBox="0 -1 32 15" role="img" aria-label="0.333"><title>0.333</title><path d="M1 2h3v1h-3zM0 3h1v1h-1zM4 3h1v1h-1zM0 4h1v1h-1zM4 4h1v1h-1zM0 5h1v1h-1zM4 5h1v1h-1zM0 6h1v1h-1zM4 6h1v1h-1zM0 7h1v1h-1zM4 7h1v1h-1zM0 8h1v1h-1zM4 8h1v1h-1zM1 9h3v1h-3zM7 8h1v1h-1zM7 9h1v1h-1zM12 2h4v1h-4zM16 3h1v1h-1zM16 4h1v1h-1zM13 5h3v1h-3zM16 6h1v1h-1zM16 7h1v1h-1zM16 8h1v1h-1zM12 9h4v1h-4zM18 2h4v1h-4zM22 3h1v1h-1zM22 4h1v1h-1zM19 5h3v1h-3zM22 6h1v1h-1zM22 7h1v1h-1zM22 8h1v1h-1zM18 9h4v1h-4zM24 2h4v1h-4zM28 3h1v1h-1zM28 4h1v1h-1zM25 5h3v1h-3zM28 6h1v1h-1zM28 7h1v1h-1zM28 8h1v1h-1zM24 9h4v1h-4z" fill="#000"/></svg>
<div style="left:66px;top:110px;width:57px;height:16px;background:#D4D0C8;border:1px solid;border-color:#808080 #FFFFFF #FFFFFF #808080"></div>
<svg class="t" style="left:67px;top:112px;" width="32" height="15" viewBox="0 -1 32 15" role="img" aria-label="6.686"><title>6.686</title><path d="M1 2h3v1h-3zM0 3h1v1h-1zM0 4h1v1h-1zM0 5h4v1h-4zM0 6h1v1h-1zM4 6h1v1h-1zM0 7h1v1h-1zM4 7h1v1h-1zM0 8h1v1h-1zM4 8h1v1h-1zM1 9h3v1h-3zM7 8h1v1h-1zM7 9h1v1h-1zM13 2h3v1h-3zM12 3h1v1h-1zM12 4h1v1h-1zM12 5h4v1h-4zM12 6h1v1h-1zM16 6h1v1h-1zM12 7h1v1h-1zM16 7h1v1h-1zM12 8h1v1h-1zM16 8h1v1h-1zM13 9h3v1h-3zM19 2h3v1h-3zM18 3h1v1h-1zM22 3h1v1h-1zM18 4h1v1h-1zM22 4h1v1h-1zM19 5h3v1h-3zM18 6h1v1h-1zM22 6h1v1h-1zM18 7h1v1h-1zM22 7h1v1h-1zM18 8h1v1h-1zM22 8h1v1h-1zM19 9h3v1h-3zM25 2h3v1h-3zM24 3h1v1h-1zM24 4h1v1h-1zM24 5h4v1h-4zM24 6h1v1h-1zM28 6h1v1h-1zM24 7h1v1h-1zM28 7h1v1h-1zM24 8h1v1h-1zM28 8h1v1h-1zM25 9h3v1h-3z" fill="#000"/></svg>
<div style="left:193px;top:110px;width:57px;height:16px;background:#D4D0C8;border:1px solid;border-color:#808080 #FFFFFF #FFFFFF #808080"></div>
<svg class="t" style="left:194px;top:112px;" width="26" height="15" viewBox="0 -1 26 15" role="img" aria-label="3.00"><title>3.00</title><path d="M0 2h4v1h-4zM4 3h1v1h-1zM4 4h1v1h-1zM1 5h3v1h-3zM4 6h1v1h-1zM4 7h1v1h-1zM4 8h1v1h-1zM0 9h4v1h-4zM7 8h1v1h-1zM7 9h1v1h-1zM13 2h3v1h-3zM12 3h1v1h-1zM16 3h1v1h-1zM12 4h1v1h-1zM16 4h1v1h-1zM12 5h1v1h-1zM16 5h1v1h-1zM12 6h1v1h-1zM16 6h1v1h-1zM12 7h1v1h-1zM16 7h1v1h-1zM12 8h1v1h-1zM16 8h1v1h-1zM13 9h3v1h-3zM19 2h3v1h-3zM18 3h1v1h-1zM22 3h1v1h-1zM18 4h1v1h-1zM22 4h1v1h-1zM18 5h1v1h-1zM22 5h1v1h-1zM18 6h1v1h-1zM22 6h1v1h-1zM18 7h1v1h-1zM22 7h1v1h-1zM18 8h1v1h-1zM22 8h1v1h-1zM19 9h3v1h-3z" fill="#000"/></svg>
<div style="left:270px;top:82px;width:369px;height:49px;border:1px solid;border-color:#808080 #FFFFFF #FFFFFF #808080"><div style="left:0;top:0;width:367px;height:47px;border:1px solid;border-color:#FFFFFF #808080 #808080 #FFFFFF"></div></div>
<div style="left:277px;top:77px;width:21px;height:11px;background:#D4D0C8;"></div>
<svg class="t" style="left:279px;top:75px;" width="22" height="15" viewBox="0 -1 22 15" role="img" aria-label="Y轴"><title>Y轴</title><path d="M0 2h1v1h-1zM6 2h1v1h-1zM1 3h1v1h-1zM5 3h1v1h-1zM2 4h1v1h-1zM4 4h1v1h-1zM3 5h1v1h-1zM3 6h1v1h-1zM3 7h1v1h-1zM3 8h1v1h-1zM3 9h1v1h-1zM10 0h1v1h-1zM16 0h1v1h-1zM8 1h5v1h-5zM16 1h1v1h-1zM9 2h1v1h-1zM13 2h6v1h-6zM9 3h2v1h-2zM13 3h1v1h-1zM16 3h1v1h-1zM18 3h1v1h-1zM8 4h1v1h-1zM10 4h1v1h-1zM13 4h1v1h-1zM16 4h1v1h-1zM18 4h1v1h-1zM8 5h6v1h-6zM16 5h1v1h-1zM18 5h1v1h-1zM10 6h1v1h-1zM13 6h6v1h-6zM10 7h4v1h-4zM16 7h1v1h-1zM18 7h1v1h-1zM8 8h3v1h-3zM13 8h1v1h-1zM16 8h1v1h-1zM18 8h1v1h-1zM10 9h1v1h-1zM13 9h6v1h-6zM10 10h1v1h-1zM13 10h1v1h-1zM18 10h1v1h-1z" fill="#000" opacity=".5" transform="translate(1,0)"/><path d="M0 2h1v1h-1zM6 2h1v1h-1zM1 3h1v1h-1zM5 3h1v1h-1zM2 4h1v1h-1zM4 4h1v1h-1zM3 5h1v1h-1zM3 6h1v1h-1zM3 7h1v1h-1zM3 8h1v1h-1zM3 9h1v1h-1zM10 0h1v1h-1zM16 0h1v1h-1zM8 1h5v1h-5zM16 1h1v1h-1zM9 2h1v1h-1zM13 2h6v1h-6zM9 3h2v1h-2zM13 3h1v1h-1zM16 3h1v1h-1zM18 3h1v1h-1zM8 4h1v1h-1zM10 4h1v1h-1zM13 4h1v1h-1zM16 4h1v1h-1zM18 4h1v1h-1zM8 5h6v1h-6zM16 5h1v1h-1zM18 5h1v1h-1zM10 6h1v1h-1zM13 6h6v1h-6zM10 7h4v1h-4zM16 7h1v1h-1zM18 7h1v1h-1zM8 8h3v1h-3zM13 8h1v1h-1zM16 8h1v1h-1zM18 8h1v1h-1zM10 9h1v1h-1zM13 9h6v1h-6zM10 10h1v1h-1zM13 10h1v1h-1zM18 10h1v1h-1z" fill="#000"/></svg>
<div style="left:282px;top:95px;width:11px;height:11px;border:1px solid;border-color:#808080 #FFFFFF #FFFFFF #808080"><div style="left:0;top:0;width:9px;height:9px;background:#fff;border:1px solid;border-color:#404040 #D4D0C8 #D4D0C8 #404040"></div></div>
<div style="left:282px;top:113px;width:11px;height:11px;border:1px solid;border-color:#808080 #FFFFFF #FFFFFF #808080"><div style="left:0;top:0;width:9px;height:9px;background:#fff;border:1px solid;border-color:#404040 #D4D0C8 #D4D0C8 #404040"></div></div>
<svg style="left:282px;top:113px" width="13" height="13" viewBox="0 0 13 13" shape-rendering="crispEdges"><path d="M3 5h1v3h-1zM4 6h1v3h-1zM5 7h1v3h-1zM6 6h1v3h-1zM7 5h1v3h-1zM8 4h1v3h-1zM9 3h1v3h-1z" fill="#000"/></svg>
<svg class="t" style="left:300px;top:94px;" width="50" height="15" viewBox="0 -1 50 15" role="img" aria-label="统一纵轴"><title>统一纵轴</title><path d="M2 0h1v1h-1zM7 0h1v1h-1zM2 1h1v1h-1zM4 1h7v1h-7zM1 2h1v1h-1zM6 2h1v1h-1zM1 3h1v1h-1zM3 3h1v1h-1zM5 3h1v1h-1zM9 3h1v1h-1zM0 4h3v1h-3zM4 4h7v1h-7zM2 5h1v1h-1zM6 5h1v1h-1zM8 5h1v1h-1zM10 5h1v1h-1zM1 6h1v1h-1zM6 6h1v1h-1zM8 6h1v1h-1zM0 7h4v1h-4zM6 7h1v1h-1zM8 7h1v1h-1zM6 8h1v1h-1zM8 8h1v1h-1zM10 8h1v1h-1zM2 9h2v1h-2zM5 9h1v1h-1zM8 9h1v1h-1zM10 9h1v1h-1zM0 10h2v1h-2zM4 10h1v1h-1zM8 10h3v1h-3zM21 4h1v1h-1zM12 5h11v1h-11zM26 0h1v1h-1zM29 0h1v1h-1zM32 0h1v1h-1zM26 1h1v1h-1zM29 1h1v1h-1zM32 1h1v1h-1zM25 2h1v1h-1zM29 2h1v1h-1zM32 2h1v1h-1zM25 3h1v1h-1zM27 3h1v1h-1zM29 3h1v1h-1zM32 3h1v1h-1zM24 4h3v1h-3zM29 4h1v1h-1zM32 4h1v1h-1zM26 5h1v1h-1zM29 5h2v1h-2zM32 5h1v1h-1zM25 6h1v1h-1zM29 6h1v1h-1zM31 6h2v1h-2zM24 7h5v1h-5zM32 7h1v1h-1zM28 8h1v1h-1zM31 8h1v1h-1zM33 8h1v1h-1zM26 9h2v1h-2zM30 9h1v1h-1zM34 9h1v1h-1zM24 10h2v1h-2zM29 10h1v1h-1zM34 10h1v1h-1zM38 0h1v1h-1zM44 0h1v1h-1zM36 1h5v1h-5zM44 1h1v1h-1zM37 2h1v1h-1zM41 2h6v1h-6zM37 3h2v1h-2zM41 3h1v1h-1zM44 3h1v1h-1zM46 3h1v1h-1zM36 4h1v1h-1zM38 4h1v1h-1zM41 4h1v1h-1zM44 4h1v1h-1zM46 4h1v1h-1zM36 5h6v1h-6zM44 5h1v1h-1zM46 5h1v1h-1zM38 6h1v1h-1zM41 6h6v1h-6zM38 7h4v1h-4zM44 7h1v1h-1zM46 7h1v1h-1zM36 8h3v1h-3zM41 8h1v1h-1zM44 8h1v1h-1zM46 8h1v1h-1zM38 9h1v1h-1zM41 9h6v1h-6zM38 10h1v1h-1zM41 10h1v1h-1zM46 10h1v1h-1z" fill="#000" opacity=".5" transform="translate(1,0)"/><path d="M2 0h1v1h-1zM7 0h1v1h-1zM2 1h1v1h-1zM4 1h7v1h-7zM1 2h1v1h-1zM6 2h1v1h-1zM1 3h1v1h-1zM3 3h1v1h-1zM5 3h1v1h-1zM9 3h1v1h-1zM0 4h3v1h-3zM4 4h7v1h-7zM2 5h1v1h-1zM6 5h1v1h-1zM8 5h1v1h-1zM10 5h1v1h-1zM1 6h1v1h-1zM6 6h1v1h-1zM8 6h1v1h-1zM0 7h4v1h-4zM6 7h1v1h-1zM8 7h1v1h-1zM6 8h1v1h-1zM8 8h1v1h-1zM10 8h1v1h-1zM2 9h2v1h-2zM5 9h1v1h-1zM8 9h1v1h-1zM10 9h1v1h-1zM0 10h2v1h-2zM4 10h1v1h-1zM8 10h3v1h-3zM21 4h1v1h-1zM12 5h11v1h-11zM26 0h1v1h-1zM29 0h1v1h-1zM32 0h1v1h-1zM26 1h1v1h-1zM29 1h1v1h-1zM32 1h1v1h-1zM25 2h1v1h-1zM29 2h1v1h-1zM32 2h1v1h-1zM25 3h1v1h-1zM27 3h1v1h-1zM29 3h1v1h-1zM32 3h1v1h-1zM24 4h3v1h-3zM29 4h1v1h-1zM32 4h1v1h-1zM26 5h1v1h-1zM29 5h2v1h-2zM32 5h1v1h-1zM25 6h1v1h-1zM29 6h1v1h-1zM31 6h2v1h-2zM24 7h5v1h-5zM32 7h1v1h-1zM28 8h1v1h-1zM31 8h1v1h-1zM33 8h1v1h-1zM26 9h2v1h-2zM30 9h1v1h-1zM34 9h1v1h-1zM24 10h2v1h-2zM29 10h1v1h-1zM34 10h1v1h-1zM38 0h1v1h-1zM44 0h1v1h-1zM36 1h5v1h-5zM44 1h1v1h-1zM37 2h1v1h-1zM41 2h6v1h-6zM37 3h2v1h-2zM41 3h1v1h-1zM44 3h1v1h-1zM46 3h1v1h-1zM36 4h1v1h-1zM38 4h1v1h-1zM41 4h1v1h-1zM44 4h1v1h-1zM46 4h1v1h-1zM36 5h6v1h-6zM44 5h1v1h-1zM46 5h1v1h-1zM38 6h1v1h-1zM41 6h6v1h-6zM38 7h4v1h-4zM44 7h1v1h-1zM46 7h1v1h-1zM36 8h3v1h-3zM41 8h1v1h-1zM44 8h1v1h-1zM46 8h1v1h-1zM38 9h1v1h-1zM41 9h6v1h-6zM38 10h1v1h-1zM41 10h1v1h-1zM46 10h1v1h-1z" fill="#000"/></svg>
<svg class="t" style="left:300px;top:113px;" width="38" height="15" viewBox="0 -1 38 15" role="img" aria-label="坐标线"><title>坐标线</title><path d="M5 0h1v1h-1zM2 1h1v1h-1zM5 1h1v1h-1zM8 1h1v1h-1zM2 2h1v1h-1zM5 2h1v1h-1zM8 2h1v1h-1zM2 3h1v1h-1zM5 3h1v1h-1zM8 3h1v1h-1zM1 4h1v1h-1zM3 4h1v1h-1zM5 4h1v1h-1zM7 4h1v1h-1zM9 4h1v1h-1zM0 5h1v1h-1zM4 5h3v1h-3zM10 5h1v1h-1zM5 6h1v1h-1zM1 7h9v1h-9zM5 8h1v1h-1zM5 9h1v1h-1zM0 10h11v1h-11zM14 0h1v1h-1zM17 0h5v1h-5zM14 1h1v1h-1zM12 2h5v1h-5zM14 3h1v1h-1zM16 3h7v1h-7zM14 4h1v1h-1zM19 4h1v1h-1zM13 5h3v1h-3zM19 5h1v1h-1zM13 6h2v1h-2zM17 6h1v1h-1zM19 6h1v1h-1zM21 6h1v1h-1zM12 7h1v1h-1zM14 7h1v1h-1zM17 7h1v1h-1zM19 7h1v1h-1zM22 7h1v1h-1zM14 8h1v1h-1zM16 8h1v1h-1zM19 8h1v1h-1zM22 8h1v1h-1zM14 9h1v1h-1zM19 9h1v1h-1zM14 10h1v1h-1zM18 10h2v1h-2zM26 0h1v1h-1zM30 0h1v1h-1zM32 0h1v1h-1zM26 1h1v1h-1zM30 1h1v1h-1zM33 1h1v1h-1zM25 2h1v1h-1zM30 2h4v1h-4zM25 3h1v1h-1zM28 3h3v1h-3zM24 4h3v1h-3zM30 4h5v1h-5zM26 5h1v1h-1zM28 5h3v1h-3zM25 6h1v1h-1zM30 6h1v1h-1zM33 6h1v1h-1zM24 7h4v1h-4zM30 7h1v1h-1zM32 7h1v1h-1zM28 8h1v1h-1zM31 8h1v1h-1zM34 8h1v1h-1zM26 9h2v1h-2zM30 9h1v1h-1zM32 9h1v1h-1zM34 9h1v1h-1zM24 10h2v1h-2zM28 10h2v1h-2zM33 10h2v1h-2z" fill="#000" opacity=".5" transform="translate(1,0)"/><path d="M5 0h1v1h-1zM2 1h1v1h-1zM5 1h1v1h-1zM8 1h1v1h-1zM2 2h1v1h-1zM5 2h1v1h-1zM8 2h1v1h-1zM2 3h1v1h-1zM5 3h1v1h-1zM8 3h1v1h-1zM1 4h1v1h-1zM3 4h1v1h-1zM5 4h1v1h-1zM7 4h1v1h-1zM9 4h1v1h-1zM0 5h1v1h-1zM4 5h3v1h-3zM10 5h1v1h-1zM5 6h1v1h-1zM1 7h9v1h-9zM5 8h1v1h-1zM5 9h1v1h-1zM0 10h11v1h-11zM14 0h1v1h-1zM17 0h5v1h-5zM14 1h1v1h-1zM12 2h5v1h-5zM14 3h1v1h-1zM16 3h7v1h-7zM14 4h1v1h-1zM19 4h1v1h-1zM13 5h3v1h-3zM19 5h1v1h-1zM13 6h2v1h-2zM17 6h1v1h-1zM19 6h1v1h-1zM21 6h1v1h-1zM12 7h1v1h-1zM14 7h1v1h-1zM17 7h1v1h-1zM19 7h1v1h-1zM22 7h1v1h-1zM14 8h1v1h-1zM16 8h1v1h-1zM19 8h1v1h-1zM22 8h1v1h-1zM14 9h1v1h-1zM19 9h1v1h-1zM14 10h1v1h-1zM18 10h2v1h-2zM26 0h1v1h-1zM30 0h1v1h-1zM32 0h1v1h-1zM26 1h1v1h-1zM30 1h1v1h-1zM33 1h1v1h-1zM25 2h1v1h-1zM30 2h4v1h-4zM25 3h1v1h-1zM28 3h3v1h-3zM24 4h3v1h-3zM30 4h5v1h-5zM26 5h1v1h-1zM28 5h3v1h-3zM25 6h1v1h-1zM30 6h1v1h-1zM33 6h1v1h-1zM24 7h4v1h-4zM30 7h1v1h-1zM32 7h1v1h-1zM28 8h1v1h-1zM31 8h1v1h-1zM34 8h1v1h-1zM26 9h2v1h-2zM30 9h1v1h-1zM32 9h1v1h-1zM34 9h1v1h-1zM24 10h2v1h-2zM28 10h2v1h-2zM33 10h2v1h-2z" fill="#000"/></svg>
<svg style="left:358px;top:95px" width="12" height="12" viewBox="0 0 12 12"><circle cx="6" cy="6" r="5.5" fill="#D4D0C8"/><path d="M10.2 1.8A5.9 5.9 0 0 0 1.8 10.2" fill="none" stroke="#808080" stroke-width="1"/><path d="M9.5 2.5A4.9 4.9 0 0 0 2.5 9.5" fill="none" stroke="#404040" stroke-width="1"/><path d="M1.8 10.2A5.9 5.9 0 0 0 10.2 1.8" fill="none" stroke="#FFFFFF" stroke-width="1"/><path d="M2.5 9.5A4.9 4.9 0 0 0 9.5 2.5" fill="none" stroke="#D4D0C8" stroke-width="1"/><rect x="4" y="5" width="4" height="2" fill="#808080"/><rect x="5" y="4" width="2" height="4" fill="#808080"/></svg>
<svg style="left:358px;top:113px" width="12" height="12" viewBox="0 0 12 12"><circle cx="6" cy="6" r="5.5" fill="#D4D0C8"/><path d="M10.2 1.8A5.9 5.9 0 0 0 1.8 10.2" fill="none" stroke="#808080" stroke-width="1"/><path d="M9.5 2.5A4.9 4.9 0 0 0 2.5 9.5" fill="none" stroke="#404040" stroke-width="1"/><path d="M1.8 10.2A5.9 5.9 0 0 0 10.2 1.8" fill="none" stroke="#FFFFFF" stroke-width="1"/><path d="M2.5 9.5A4.9 4.9 0 0 0 9.5 2.5" fill="none" stroke="#D4D0C8" stroke-width="1"/></svg>
<svg class="t" style="left:375px;top:94px;" width="38" height="15" viewBox="0 -1 38 15" role="img" aria-label="标幺值"><title>标幺值</title><path d="M2 0h1v1h-1zM5 0h5v1h-5zM2 1h1v1h-1zM0 2h5v1h-5zM2 3h1v1h-1zM4 3h7v1h-7zM2 4h1v1h-1zM7 4h1v1h-1zM1 5h3v1h-3zM7 5h1v1h-1zM1 6h2v1h-2zM5 6h1v1h-1zM7 6h1v1h-1zM9 6h1v1h-1zM0 7h1v1h-1zM2 7h1v1h-1zM5 7h1v1h-1zM7 7h1v1h-1zM10 7h1v1h-1zM2 8h1v1h-1zM4 8h1v1h-1zM7 8h1v1h-1zM10 8h1v1h-1zM2 9h1v1h-1zM7 9h1v1h-1zM2 10h1v1h-1zM6 10h2v1h-2zM17 0h1v1h-1zM17 1h1v1h-1zM17 2h1v1h-1zM16 3h1v1h-1zM20 3h1v1h-1zM15 4h1v1h-1zM20 4h1v1h-1zM14 5h6v1h-6zM18 6h1v1h-1zM17 7h1v1h-1zM16 8h1v1h-1zM21 8h1v1h-1zM15 9h1v1h-1zM18 9h5v1h-5zM13 10h5v1h-5zM22 10h1v1h-1zM27 0h1v1h-1zM31 0h1v1h-1zM27 1h8v1h-8zM26 2h1v1h-1zM30 2h1v1h-1zM26 3h1v1h-1zM29 3h5v1h-5zM25 4h2v1h-2zM29 4h1v1h-1zM33 4h1v1h-1zM24 5h1v1h-1zM26 5h1v1h-1zM29 5h5v1h-5zM26 6h1v1h-1zM29 6h1v1h-1zM33 6h1v1h-1zM26 7h1v1h-1zM29 7h3v1h-3zM33 7h1v1h-1zM26 8h1v1h-1zM29 8h1v1h-1zM31 8h3v1h-3zM26 9h1v1h-1zM29 9h1v1h-1zM33 9h1v1h-1zM26 10h1v1h-1zM28 10h7v1h-7z" fill="#fff" transform="translate(1,1)"/><path d="M2 0h1v1h-1zM5 0h5v1h-5zM2 1h1v1h-1zM0 2h5v1h-5zM2 3h1v1h-1zM4 3h7v1h-7zM2 4h1v1h-1zM7 4h1v1h-1zM1 5h3v1h-3zM7 5h1v1h-1zM1 6h2v1h-2zM5 6h1v1h-1zM7 6h1v1h-1zM9 6h1v1h-1zM0 7h1v1h-1zM2 7h1v1h-1zM5 7h1v1h-1zM7 7h1v1h-1zM10 7h1v1h-1zM2 8h1v1h-1zM4 8h1v1h-1zM7 8h1v1h-1zM10 8h1v1h-1zM2 9h1v1h-1zM7 9h1v1h-1zM2 10h1v1h-1zM6 10h2v1h-2zM17 0h1v1h-1zM17 1h1v1h-1zM17 2h1v1h-1zM16 3h1v1h-1zM20 3h1v1h-1zM15 4h1v1h-1zM20 4h1v1h-1zM14 5h6v1h-6zM18 6h1v1h-1zM17 7h1v1h-1zM16 8h1v1h-1zM21 8h1v1h-1zM15 9h1v1h-1zM18 9h5v1h-5zM13 10h5v1h-5zM22 10h1v1h-1zM27 0h1v1h-1zM31 0h1v1h-1zM27 1h8v1h-8zM26 2h1v1h-1zM30 2h1v1h-1zM26 3h1v1h-1zM29 3h5v1h-5zM25 4h2v1h-2zM29 4h1v1h-1zM33 4h1v1h-1zM24 5h1v1h-1zM26 5h1v1h-1zM29 5h5v1h-5zM26 6h1v1h-1zM29 6h1v1h-1zM33 6h1v1h-1zM26 7h1v1h-1zM29 7h3v1h-3zM33 7h1v1h-1zM26 8h1v1h-1zM29 8h1v1h-1zM31 8h3v1h-3zM26 9h1v1h-1zM29 9h1v1h-1zM33 9h1v1h-1zM26 10h1v1h-1zM28 10h7v1h-7z" fill="#808080"/></svg>
<svg class="t" style="left:375px;top:112px;" width="38" height="15" viewBox="0 -1 38 15" role="img" aria-label="有名值"><title>有名值</title><path d="M4 0h1v1h-1zM0 1h11v1h-11zM3 2h1v1h-1zM3 3h6v1h-6zM2 4h2v1h-2zM8 4h1v1h-1zM1 5h1v1h-1zM3 5h6v1h-6zM0 6h1v1h-1zM3 6h1v1h-1zM8 6h1v1h-1zM3 7h6v1h-6zM3 8h1v1h-1zM8 8h1v1h-1zM3 9h1v1h-1zM8 9h1v1h-1zM3 10h1v1h-1zM7 10h2v1h-2zM15 0h1v1h-1zM15 1h7v1h-7zM15 2h1v1h-1zM20 2h1v1h-1zM14 3h1v1h-1zM16 3h1v1h-1zM19 3h1v1h-1zM13 4h1v1h-1zM17 4h2v1h-2zM17 5h1v1h-1zM15 6h7v1h-7zM12 7h4v1h-4zM21 7h1v1h-1zM15 8h1v1h-1zM21 8h1v1h-1zM15 9h1v1h-1zM21 9h1v1h-1zM15 10h7v1h-7zM27 0h1v1h-1zM31 0h1v1h-1zM27 1h8v1h-8zM26 2h1v1h-1zM30 2h1v1h-1zM26 3h1v1h-1zM29 3h5v1h-5zM25 4h2v1h-2zM29 4h1v1h-1zM33 4h1v1h-1zM24 5h1v1h-1zM26 5h1v1h-1zM29 5h5v1h-5zM26 6h1v1h-1zM29 6h1v1h-1zM33 6h1v1h-1zM26 7h1v1h-1zM29 7h3v1h-3zM33 7h1v1h-1zM26 8h1v1h-1zM29 8h1v1h-1zM31 8h3v1h-3zM26 9h1v1h-1zM29 9h1v1h-1zM33 9h1v1h-1zM26 10h1v1h-1zM28 10h7v1h-7z" fill="#fff" transform="translate(1,1)"/><path d="M4 0h1v1h-1zM0 1h11v1h-11zM3 2h1v1h-1zM3 3h6v1h-6zM2 4h2v1h-2zM8 4h1v1h-1zM1 5h1v1h-1zM3 5h6v1h-6zM0 6h1v1h-1zM3 6h1v1h-1zM8 6h1v1h-1zM3 7h6v1h-6zM3 8h1v1h-1zM8 8h1v1h-1zM3 9h1v1h-1zM8 9h1v1h-1zM3 10h1v1h-1zM7 10h2v1h-2zM15 0h1v1h-1zM15 1h7v1h-7zM15 2h1v1h-1zM20 2h1v1h-1zM14 3h1v1h-1zM16 3h1v1h-1zM19 3h1v1h-1zM13 4h1v1h-1zM17 4h2v1h-2zM17 5h1v1h-1zM15 6h7v1h-7zM12 7h4v1h-4zM21 7h1v1h-1zM15 8h1v1h-1zM21 8h1v1h-1zM15 9h1v1h-1zM21 9h1v1h-1zM15 10h7v1h-7zM27 0h1v1h-1zM31 0h1v1h-1zM27 1h8v1h-8zM26 2h1v1h-1zM30 2h1v1h-1zM26 3h1v1h-1zM29 3h5v1h-5zM25 4h2v1h-2zM29 4h1v1h-1zM33 4h1v1h-1zM24 5h1v1h-1zM26 5h1v1h-1zM29 5h5v1h-5zM26 6h1v1h-1zM29 6h1v1h-1zM33 6h1v1h-1zM26 7h1v1h-1zM29 7h3v1h-3zM33 7h1v1h-1zM26 8h1v1h-1zM29 8h1v1h-1zM31 8h3v1h-3zM26 9h1v1h-1zM29 9h1v1h-1zM33 9h1v1h-1zM26 10h1v1h-1zM28 10h7v1h-7z" fill="#808080"/></svg>
<div style="left:423px;top:95px;width:11px;height:11px;border:1px solid;border-color:#808080 #FFFFFF #FFFFFF #808080"><div style="left:0;top:0;width:9px;height:9px;background:#D4D0C8;border:1px solid;border-color:#404040 #D4D0C8 #D4D0C8 #404040"></div></div>
<svg style="left:423px;top:95px" width="13" height="13" viewBox="0 0 13 13" shape-rendering="crispEdges"><path d="M3 5h1v3h-1zM4 6h1v3h-1zM5 7h1v3h-1zM6 6h1v3h-1zM7 5h1v3h-1zM8 4h1v3h-1zM9 3h1v3h-1z" fill="#808080"/></svg>
<svg class="t" style="left:441px;top:94px;" width="50" height="15" viewBox="0 -1 50 15" role="img" aria-label="合并单位"><title>合并单位</title><path d="M5 0h1v1h-1zM4 1h1v1h-1zM6 1h1v1h-1zM3 2h1v1h-1zM7 2h1v1h-1zM2 3h1v1h-1zM8 3h1v1h-1zM0 4h2v1h-2zM3 4h5v1h-5zM9 4h2v1h-2zM2 6h7v1h-7zM2 7h1v1h-1zM8 7h1v1h-1zM2 8h1v1h-1zM8 8h1v1h-1zM2 9h7v1h-7zM2 10h1v1h-1zM8 10h1v1h-1zM14 0h1v1h-1zM20 0h1v1h-1zM15 1h1v1h-1zM19 1h1v1h-1zM13 2h9v1h-9zM15 3h1v1h-1zM19 3h1v1h-1zM15 4h1v1h-1zM19 4h1v1h-1zM15 5h1v1h-1zM19 5h1v1h-1zM12 6h11v1h-11zM15 7h1v1h-1zM19 7h1v1h-1zM15 8h1v1h-1zM19 8h1v1h-1zM14 9h1v1h-1zM19 9h1v1h-1zM13 10h1v1h-1zM19 10h1v1h-1zM27 0h1v1h-1zM31 0h1v1h-1zM28 1h1v1h-1zM30 1h1v1h-1zM25 2h9v1h-9zM25 3h1v1h-1zM29 3h1v1h-1zM33 3h1v1h-1zM25 4h9v1h-9zM25 5h1v1h-1zM29 5h1v1h-1zM33 5h1v1h-1zM25 6h9v1h-9zM29 7h1v1h-1zM24 8h11v1h-11zM29 9h1v1h-1zM29 10h1v1h-1zM39 0h1v1h-1zM42 0h1v1h-1zM39 1h1v1h-1zM43 1h1v1h-1zM38 2h1v1h-1zM38 3h1v1h-1zM40 3h7v1h-7zM37 4h2v1h-2zM36 5h1v1h-1zM38 5h1v1h-1zM41 5h1v1h-1zM45 5h1v1h-1zM38 6h1v1h-1zM42 6h1v1h-1zM45 6h1v1h-1zM38 7h1v1h-1zM42 7h1v1h-1zM44 7h1v1h-1zM38 8h1v1h-1zM44 8h1v1h-1zM38 9h1v1h-1zM43 9h1v1h-1zM38 10h1v1h-1zM40 10h7v1h-7z" fill="#fff" transform="translate(1,1)"/><path d="M5 0h1v1h-1zM4 1h1v1h-1zM6 1h1v1h-1zM3 2h1v1h-1zM7 2h1v1h-1zM2 3h1v1h-1zM8 3h1v1h-1zM0 4h2v1h-2zM3 4h5v1h-5zM9 4h2v1h-2zM2 6h7v1h-7zM2 7h1v1h-1zM8 7h1v1h-1zM2 8h1v1h-1zM8 8h1v1h-1zM2 9h7v1h-7zM2 10h1v1h-1zM8 10h1v1h-1zM14 0h1v1h-1zM20 0h1v1h-1zM15 1h1v1h-1zM19 1h1v1h-1zM13 2h9v1h-9zM15 3h1v1h-1zM19 3h1v1h-1zM15 4h1v1h-1zM19 4h1v1h-1zM15 5h1v1h-1zM19 5h1v1h-1zM12 6h11v1h-11zM15 7h1v1h-1zM19 7h1v1h-1zM15 8h1v1h-1zM19 8h1v1h-1zM14 9h1v1h-1zM19 9h1v1h-1zM13 10h1v1h-1zM19 10h1v1h-1zM27 0h1v1h-1zM31 0h1v1h-1zM28 1h1v1h-1zM30 1h1v1h-1zM25 2h9v1h-9zM25 3h1v1h-1zM29 3h1v1h-1zM33 3h1v1h-1zM25 4h9v1h-9zM25 5h1v1h-1zM29 5h1v1h-1zM33 5h1v1h-1zM25 6h9v1h-9zM29 7h1v1h-1zM24 8h11v1h-11zM29 9h1v1h-1zM29 10h1v1h-1zM39 0h1v1h-1zM42 0h1v1h-1zM39 1h1v1h-1zM43 1h1v1h-1zM38 2h1v1h-1zM38 3h1v1h-1zM40 3h7v1h-7zM37 4h2v1h-2zM36 5h1v1h-1zM38 5h1v1h-1zM41 5h1v1h-1zM45 5h1v1h-1zM38 6h1v1h-1zM42 6h1v1h-1zM45 6h1v1h-1zM38 7h1v1h-1zM42 7h1v1h-1zM44 7h1v1h-1zM38 8h1v1h-1zM44 8h1v1h-1zM38 9h1v1h-1zM43 9h1v1h-1zM38 10h1v1h-1zM40 10h7v1h-7z" fill="#808080"/></svg>
<div style="left:495px;top:88px;width:1px;height:38px;background:#808080;"></div>
<div style="left:496px;top:88px;width:1px;height:38px;background:#FFFFFF;"></div>
<svg class="t" style="left:505px;top:90px;" width="32" height="15" viewBox="0 -1 32 15" role="img" aria-label="值/格"><title>值/格</title><path d="M3 0h1v1h-1zM7 0h1v1h-1zM3 1h8v1h-8zM2 2h1v1h-1zM6 2h1v1h-1zM2 3h1v1h-1zM5 3h5v1h-5zM1 4h2v1h-2zM5 4h1v1h-1zM9 4h1v1h-1zM0 5h1v1h-1zM2 5h1v1h-1zM5 5h5v1h-5zM2 6h1v1h-1zM5 6h1v1h-1zM9 6h1v1h-1zM2 7h1v1h-1zM5 7h3v1h-3zM9 7h1v1h-1zM2 8h1v1h-1zM5 8h1v1h-1zM7 8h3v1h-3zM2 9h1v1h-1zM5 9h1v1h-1zM9 9h1v1h-1zM2 10h1v1h-1zM4 10h7v1h-7zM15 -1h1v1h-1zM15 0h1v1h-1zM15 1h1v1h-1zM14 2h1v1h-1zM14 3h1v1h-1zM14 4h1v1h-1zM13 5h1v1h-1zM13 6h1v1h-1zM13 7h1v1h-1zM12 8h1v1h-1zM12 9h1v1h-1zM12 10h1v1h-1zM20 0h1v1h-1zM24 0h1v1h-1zM20 1h1v1h-1zM24 1h4v1h-4zM18 2h4v1h-4zM23 2h1v1h-1zM27 2h1v1h-1zM20 3h1v1h-1zM22 3h1v1h-1zM24 3h1v1h-1zM26 3h1v1h-1zM20 4h1v1h-1zM25 4h1v1h-1zM19 5h3v1h-3zM24 5h1v1h-1zM26 5h1v1h-1zM19 6h2v1h-2zM22 6h2v1h-2zM27 6h2v1h-2zM18 7h1v1h-1zM20 7h1v1h-1zM23 7h5v1h-5zM20 8h1v1h-1zM23 8h1v1h-1zM27 8h1v1h-1zM20 9h1v1h-1zM23 9h1v1h-1zM27 9h1v1h-1zM20 10h1v1h-1zM23 10h5v1h-5z" fill="#000"/></svg>
<svg class="t" style="left:512px;top:109px;" width="26" height="15" viewBox="0 -1 26 15" role="img" aria-label="偏移"><title>偏移</title><path d="M2 0h1v1h-1zM7 0h1v1h-1zM2 1h1v1h-1zM4 1h7v1h-7zM2 2h1v1h-1zM4 2h1v1h-1zM10 2h1v1h-1zM2 3h1v1h-1zM4 3h7v1h-7zM1 4h2v1h-2zM4 4h1v1h-1zM0 5h1v1h-1zM2 5h1v1h-1zM4 5h7v1h-7zM2 6h1v1h-1zM4 6h1v1h-1zM6 6h1v1h-1zM8 6h1v1h-1zM10 6h1v1h-1zM2 7h1v1h-1zM4 7h7v1h-7zM2 8h1v1h-1zM4 8h1v1h-1zM6 8h1v1h-1zM8 8h1v1h-1zM10 8h1v1h-1zM2 9h3v1h-3zM6 9h1v1h-1zM8 9h1v1h-1zM10 9h1v1h-1zM2 10h1v1h-1zM4 10h1v1h-1zM9 10h2v1h-2zM15 0h1v1h-1zM19 0h1v1h-1zM12 1h3v1h-3zM18 1h5v1h-5zM14 2h1v1h-1zM17 2h1v1h-1zM22 2h1v1h-1zM12 3h5v1h-5zM18 3h1v1h-1zM21 3h1v1h-1zM14 4h1v1h-1zM19 4h2v1h-2zM14 5h2v1h-2zM17 5h2v1h-2zM20 5h1v1h-1zM14 6h1v1h-1zM16 6h1v1h-1zM19 6h4v1h-4zM13 7h2v1h-2zM18 7h1v1h-1zM22 7h1v1h-1zM12 8h1v1h-1zM14 8h1v1h-1zM17 8h1v1h-1zM19 8h1v1h-1zM21 8h1v1h-1zM14 9h1v1h-1zM20 9h1v1h-1zM14 10h1v1h-1zM17 10h3v1h-3z" fill="#000"/></svg>
<div style="left:540px;top:88px;width:48px;height:16px;background:#fff;border:1px solid;border-color:#808080 #FFFFFF #FFFFFF #808080"></div>
<svg class="t" style="left:541px;top:88px;" width="26" height="15" viewBox="0 -1 26 15" role="img" aria-label="0.50"><title>0.50</title><path d="M1 2h3v1h-3zM0 3h1v1h-1zM4 3h1v1h-1zM0 4h1v1h-1zM4 4h1v1h-1zM0 5h1v1h-1zM4 5h1v1h-1zM0 6h1v1h-1zM4 6h1v1h-1zM0 7h1v1h-1zM4 7h1v1h-1zM0 8h1v1h-1zM4 8h1v1h-1zM1 9h3v1h-3zM7 8h1v1h-1zM7 9h1v1h-1zM12 2h4v1h-4zM12 3h1v1h-1zM12 4h1v1h-1zM12 5h4v1h-4zM16 6h1v1h-1zM16 7h1v1h-1zM16 8h1v1h-1zM12 9h4v1h-4zM19 2h3v1h-3zM18 3h1v1h-1zM22 3h1v1h-1zM18 4h1v1h-1zM22 4h1v1h-1zM18 5h1v1h-1zM22 5h1v1h-1zM18 6h1v1h-1zM22 6h1v1h-1zM18 7h1v1h-1zM22 7h1v1h-1zM18 8h1v1h-1zM22 8h1v1h-1zM19 9h3v1h-3z" fill="#000"/></svg>
<div style="left:540px;top:109px;width:48px;height:16px;background:#fff;border:1px solid;border-color:#808080 #FFFFFF #FFFFFF #808080"></div>
<svg class="t" style="left:541px;top:109px;" width="32" height="15" viewBox="0 -1 32 15" role="img" aria-label="15.84"><title>15.84</title><path d="M0 2h3v1h-3zM2 3h1v1h-1zM2 4h1v1h-1zM2 5h1v1h-1zM2 6h1v1h-1zM2 7h1v1h-1zM2 8h1v1h-1zM0 9h5v1h-5zM6 2h4v1h-4zM6 3h1v1h-1zM6 4h1v1h-1zM6 5h4v1h-4zM10 6h1v1h-1zM10 7h1v1h-1zM10 8h1v1h-1zM6 9h4v1h-4zM13 8h1v1h-1zM13 9h1v1h-1zM19 2h3v1h-3zM18 3h1v1h-1zM22 3h1v1h-1zM18 4h1v1h-1zM22 4h1v1h-1zM19 5h3v1h-3zM18 6h1v1h-1zM22 6h1v1h-1zM18 7h1v1h-1zM22 7h1v1h-1zM18 8h1v1h-1zM22 8h1v1h-1zM19 9h3v1h-3zM27 2h1v1h-1zM26 3h2v1h-2zM25 4h1v1h-1zM27 4h1v1h-1zM25 5h1v1h-1zM27 5h1v1h-1zM24 6h1v1h-1zM27 6h1v1h-1zM24 7h5v1h-5zM27 8h1v1h-1zM27 9h1v1h-1z" fill="#000"/></svg>
<div style="left:598px;top:106px;width:34px;height:19px;border:1px solid;border-color:#FFFFFF #404040 #404040 #FFFFFF"><div style="left:0;top:0;width:32px;height:17px;background:#D4D0C8;border:1px solid;border-color:#D4D0C8 #808080 #808080 #D4D0C8"></div></div>
<svg class="t" style="left:604px;top:109px;" width="26" height="15" viewBox="0 -1 26 15" role="img" aria-label="应用"><title>应用</title><path d="M5 0h1v1h-1zM6 1h1v1h-1zM1 2h10v1h-10zM1 3h1v1h-1zM1 4h1v1h-1zM5 4h1v1h-1zM9 4h1v1h-1zM1 5h1v1h-1zM3 5h1v1h-1zM6 5h1v1h-1zM9 5h1v1h-1zM1 6h1v1h-1zM4 6h1v1h-1zM6 6h1v1h-1zM9 6h1v1h-1zM1 7h1v1h-1zM4 7h1v1h-1zM8 7h1v1h-1zM1 8h1v1h-1zM8 8h1v1h-1zM0 9h1v1h-1zM7 9h1v1h-1zM0 10h1v1h-1zM3 10h8v1h-8zM13 0h9v1h-9zM13 1h1v1h-1zM17 1h1v1h-1zM21 1h1v1h-1zM13 2h1v1h-1zM17 2h1v1h-1zM21 2h1v1h-1zM13 3h9v1h-9zM13 4h1v1h-1zM17 4h1v1h-1zM21 4h1v1h-1zM13 5h1v1h-1zM17 5h1v1h-1zM21 5h1v1h-1zM13 6h9v1h-9zM13 7h1v1h-1zM17 7h1v1h-1zM21 7h1v1h-1zM13 8h1v1h-1zM17 8h1v1h-1zM21 8h1v1h-1zM12 9h1v1h-1zM17 9h1v1h-1zM21 9h1v1h-1zM12 10h1v1h-1zM17 10h1v1h-1zM20 10h2v1h-2z" fill="#000"/></svg>
<div style="left:651px;top:82px;width:270px;height:49px;border:1px solid;border-color:#808080 #FFFFFF #FFFFFF #808080"><div style="left:0;top:0;width:268px;height:47px;border:1px solid;border-color:#FFFFFF #808080 #808080 #FFFFFF"></div></div>
<div style="left:658px;top:77px;width:58px;height:11px;background:#D4D0C8;"></div>
<svg class="t" style="left:660px;top:75px;" width="57" height="15" viewBox="0 -1 57 15" role="img" aria-label="X轴（秒）"><title>X轴（秒）</title><path d="M0 2h1v1h-1zM5 2h1v1h-1zM0 3h1v1h-1zM5 3h1v1h-1zM1 4h1v1h-1zM4 4h1v1h-1zM2 5h2v1h-2zM1 6h1v1h-1zM4 6h1v1h-1zM1 7h1v1h-1zM4 7h1v1h-1zM0 8h1v1h-1zM5 8h1v1h-1zM0 9h1v1h-1zM5 9h1v1h-1zM9 0h1v1h-1zM15 0h1v1h-1zM7 1h5v1h-5zM15 1h1v1h-1zM8 2h1v1h-1zM12 2h6v1h-6zM8 3h2v1h-2zM12 3h1v1h-1zM15 3h1v1h-1zM17 3h1v1h-1zM7 4h1v1h-1zM9 4h1v1h-1zM12 4h1v1h-1zM15 4h1v1h-1zM17 4h1v1h-1zM7 5h6v1h-6zM15 5h1v1h-1zM17 5h1v1h-1zM9 6h1v1h-1zM12 6h6v1h-6zM9 7h4v1h-4zM15 7h1v1h-1zM17 7h1v1h-1zM7 8h3v1h-3zM12 8h1v1h-1zM15 8h1v1h-1zM17 8h1v1h-1zM9 9h1v1h-1zM12 9h6v1h-6zM9 10h1v1h-1zM12 10h1v1h-1zM17 10h1v1h-1zM28 -1h1v1h-1zM27 0h1v1h-1zM27 1h1v1h-1zM26 2h1v1h-1zM26 3h1v1h-1zM26 4h1v1h-1zM26 5h1v1h-1zM26 6h1v1h-1zM26 7h1v1h-1zM27 8h1v1h-1zM27 9h1v1h-1zM28 10h1v1h-1zM34 0h1v1h-1zM38 0h1v1h-1zM31 1h3v1h-3zM38 1h1v1h-1zM33 2h1v1h-1zM36 2h1v1h-1zM38 2h1v1h-1zM40 2h1v1h-1zM31 3h4v1h-4zM36 3h1v1h-1zM38 3h1v1h-1zM41 3h1v1h-1zM33 4h1v1h-1zM36 4h1v1h-1zM38 4h1v1h-1zM41 4h1v1h-1zM32 5h3v1h-3zM36 5h1v1h-1zM38 5h1v1h-1zM32 6h2v1h-2zM35 6h1v1h-1zM38 6h1v1h-1zM41 6h1v1h-1zM31 7h1v1h-1zM33 7h1v1h-1zM40 7h1v1h-1zM33 8h1v1h-1zM39 8h1v1h-1zM33 9h1v1h-1zM37 9h2v1h-2zM33 10h1v1h-1zM35 10h2v1h-2zM46 -1h1v1h-1zM47 0h1v1h-1zM47 1h1v1h-1zM48 2h1v1h-1zM48 3h1v1h-1zM48 4h1v1h-1zM48 5h1v1h-1zM48 6h1v1h-1zM48 7h1v1h-1zM47 8h1v1h-1zM47 9h1v1h-1zM46 10h1v1h-1z" fill="#000" opacity=".5" transform="translate(1,0)"/><path d="M0 2h1v1h-1zM5 2h1v1h-1zM0 3h1v1h-1zM5 3h1v1h-1zM1 4h1v1h-1zM4 4h1v1h-1zM2 5h2v1h-2zM1 6h1v1h-1zM4 6h1v1h-1zM1 7h1v1h-1zM4 7h1v1h-1zM0 8h1v1h-1zM5 8h1v1h-1zM0 9h1v1h-1zM5 9h1v1h-1zM9 0h1v1h-1zM15 0h1v1h-1zM7 1h5v1h-5zM15 1h1v1h-1zM8 2h1v1h-1zM12 2h6v1h-6zM8 3h2v1h-2zM12 3h1v1h-1zM15 3h1v1h-1zM17 3h1v1h-1zM7 4h1v1h-1zM9 4h1v1h-1zM12 4h1v1h-1zM15 4h1v1h-1zM17 4h1v1h-1zM7 5h6v1h-6zM15 5h1v1h-1zM17 5h1v1h-1zM9 6h1v1h-1zM12 6h6v1h-6zM9 7h4v1h-4zM15 7h1v1h-1zM17 7h1v1h-1zM7 8h3v1h-3zM12 8h1v1h-1zM15 8h1v1h-1zM17 8h1v1h-1zM9 9h1v1h-1zM12 9h6v1h-6zM9 10h1v1h-1zM12 10h1v1h-1zM17 10h1v1h-1zM28 -1h1v1h-1zM27 0h1v1h-1zM27 1h1v1h-1zM26 2h1v1h-1zM26 3h1v1h-1zM26 4h1v1h-1zM26 5h1v1h-1zM26 6h1v1h-1zM26 7h1v1h-1zM27 8h1v1h-1zM27 9h1v1h-1zM28 10h1v1h-1zM34 0h1v1h-1zM38 0h1v1h-1zM31 1h3v1h-3zM38 1h1v1h-1zM33 2h1v1h-1zM36 2h1v1h-1zM38 2h1v1h-1zM40 2h1v1h-1zM31 3h4v1h-4zM36 3h1v1h-1zM38 3h1v1h-1zM41 3h1v1h-1zM33 4h1v1h-1zM36 4h1v1h-1zM38 4h1v1h-1zM41 4h1v1h-1zM32 5h3v1h-3zM36 5h1v1h-1zM38 5h1v1h-1zM32 6h2v1h-2zM35 6h1v1h-1zM38 6h1v1h-1zM41 6h1v1h-1zM31 7h1v1h-1zM33 7h1v1h-1zM40 7h1v1h-1zM33 8h1v1h-1zM39 8h1v1h-1zM33 9h1v1h-1zM37 9h2v1h-2zM33 10h1v1h-1zM35 10h2v1h-2zM46 -1h1v1h-1zM47 0h1v1h-1zM47 1h1v1h-1zM48 2h1v1h-1zM48 3h1v1h-1zM48 4h1v1h-1zM48 5h1v1h-1zM48 6h1v1h-1zM48 7h1v1h-1zM47 8h1v1h-1zM47 9h1v1h-1zM46 10h1v1h-1z" fill="#000"/></svg>
<div style="left:660px;top:93px;width:11px;height:11px;border:1px solid;border-color:#808080 #FFFFFF #FFFFFF #808080"><div style="left:0;top:0;width:9px;height:9px;background:#fff;border:1px solid;border-color:#404040 #D4D0C8 #D4D0C8 #404040"></div></div>
<div style="left:660px;top:114px;width:11px;height:11px;border:1px solid;border-color:#808080 #FFFFFF #FFFFFF #808080"><div style="left:0;top:0;width:9px;height:9px;background:#fff;border:1px solid;border-color:#404040 #D4D0C8 #D4D0C8 #404040"></div></div>
<svg class="t" style="left:678px;top:92px;" width="50" height="15" viewBox="0 -1 50 15" role="img" aria-label="实际时间"><title>实际时间</title><path d="M6 0h1v1h-1zM1 1h10v1h-10zM1 2h1v1h-1zM3 2h1v1h-1zM10 2h1v1h-1zM0 3h1v1h-1zM4 3h1v1h-1zM6 3h1v1h-1zM9 3h1v1h-1zM2 4h1v1h-1zM6 4h1v1h-1zM3 5h1v1h-1zM6 5h1v1h-1zM1 6h10v1h-10zM6 7h1v1h-1zM5 8h1v1h-1zM7 8h1v1h-1zM4 9h1v1h-1zM8 9h1v1h-1zM1 10h3v1h-3zM9 10h2v1h-2zM12 0h4v1h-4zM17 0h5v1h-5zM12 1h1v1h-1zM15 1h1v1h-1zM12 2h1v1h-1zM14 2h1v1h-1zM12 3h2v1h-2zM16 3h7v1h-7zM12 4h1v1h-1zM14 4h1v1h-1zM19 4h1v1h-1zM12 5h1v1h-1zM15 5h1v1h-1zM17 5h1v1h-1zM19 5h1v1h-1zM21 5h1v1h-1zM12 6h1v1h-1zM15 6h1v1h-1zM17 6h1v1h-1zM19 6h1v1h-1zM21 6h1v1h-1zM12 7h2v1h-2zM15 7h1v1h-1zM17 7h1v1h-1zM19 7h1v1h-1zM22 7h1v1h-1zM12 8h1v1h-1zM14 8h1v1h-1zM16 8h1v1h-1zM19 8h1v1h-1zM22 8h1v1h-1zM12 9h1v1h-1zM19 9h1v1h-1zM12 10h1v1h-1zM18 10h2v1h-2zM32 0h1v1h-1zM24 1h4v1h-4zM32 1h1v1h-1zM24 2h1v1h-1zM27 2h8v1h-8zM24 3h1v1h-1zM27 3h1v1h-1zM32 3h1v1h-1zM24 4h1v1h-1zM27 4h1v1h-1zM29 4h1v1h-1zM32 4h1v1h-1zM24 5h4v1h-4zM30 5h1v1h-1zM32 5h1v1h-1zM24 6h1v1h-1zM27 6h1v1h-1zM30 6h1v1h-1zM32 6h1v1h-1zM24 7h1v1h-1zM27 7h1v1h-1zM32 7h1v1h-1zM24 8h1v1h-1zM27 8h1v1h-1zM32 8h1v1h-1zM24 9h4v1h-4zM32 9h1v1h-1zM30 10h3v1h-3zM38 0h1v1h-1zM41 0h6v1h-6zM39 1h1v1h-1zM46 1h1v1h-1zM37 2h1v1h-1zM46 2h1v1h-1zM37 3h1v1h-1zM40 3h4v1h-4zM46 3h1v1h-1zM37 4h1v1h-1zM40 4h1v1h-1zM43 4h1v1h-1zM46 4h1v1h-1zM37 5h1v1h-1zM40 5h4v1h-4zM46 5h1v1h-1zM37 6h1v1h-1zM40 6h1v1h-1zM43 6h1v1h-1zM46 6h1v1h-1zM37 7h1v1h-1zM40 7h1v1h-1zM43 7h1v1h-1zM46 7h1v1h-1zM37 8h1v1h-1zM40 8h4v1h-4zM46 8h1v1h-1zM37 9h1v1h-1zM46 9h1v1h-1zM37 10h1v1h-1zM44 10h3v1h-3z" fill="#000"/></svg>
<svg class="t" style="left:678px;top:113px;" width="50" height="15" viewBox="0 -1 50 15" role="img" aria-label="锁定游标"><title>锁定游标</title><path d="M2 0h1v1h-1zM4 0h1v1h-1zM7 0h1v1h-1zM10 0h1v1h-1zM2 1h1v1h-1zM5 1h1v1h-1zM7 1h1v1h-1zM9 1h1v1h-1zM1 2h1v1h-1zM7 2h1v1h-1zM1 3h3v1h-3zM5 3h5v1h-5zM0 4h1v1h-1zM5 4h1v1h-1zM9 4h1v1h-1zM1 5h3v1h-3zM5 5h1v1h-1zM7 5h1v1h-1zM9 5h1v1h-1zM2 6h1v1h-1zM5 6h1v1h-1zM7 6h1v1h-1zM9 6h1v1h-1zM0 7h4v1h-4zM5 7h1v1h-1zM7 7h1v1h-1zM9 7h1v1h-1zM2 8h1v1h-1zM5 8h1v1h-1zM7 8h1v1h-1zM9 8h1v1h-1zM2 9h2v1h-2zM6 9h1v1h-1zM8 9h1v1h-1zM2 10h1v1h-1zM4 10h2v1h-2zM9 10h2v1h-2zM17 0h1v1h-1zM13 1h10v1h-10zM13 2h1v1h-1zM22 2h1v1h-1zM12 3h1v1h-1zM21 3h1v1h-1zM14 4h8v1h-8zM17 5h1v1h-1zM14 6h1v1h-1zM17 6h1v1h-1zM14 7h1v1h-1zM17 7h4v1h-4zM14 8h1v1h-1zM17 8h1v1h-1zM13 9h1v1h-1zM15 9h1v1h-1zM17 9h1v1h-1zM12 10h1v1h-1zM16 10h7v1h-7zM25 0h1v1h-1zM28 0h1v1h-1zM32 0h1v1h-1zM26 1h1v1h-1zM29 1h1v1h-1zM32 1h3v1h-3zM27 2h5v1h-5zM24 3h1v1h-1zM28 3h1v1h-1zM32 3h3v1h-3zM25 4h1v1h-1zM27 4h4v1h-4zM34 4h1v1h-1zM26 5h1v1h-1zM28 5h1v1h-1zM30 5h1v1h-1zM33 5h1v1h-1zM26 6h1v1h-1zM28 6h1v1h-1zM30 6h5v1h-5zM24 7h2v1h-2zM28 7h1v1h-1zM30 7h1v1h-1zM33 7h1v1h-1zM25 8h1v1h-1zM28 8h1v1h-1zM30 8h1v1h-1zM33 8h1v1h-1zM25 9h1v1h-1zM27 9h1v1h-1zM30 9h1v1h-1zM33 9h1v1h-1zM25 10h2v1h-2zM29 10h2v1h-2zM32 10h2v1h-2zM38 0h1v1h-1zM41 0h5v1h-5zM38 1h1v1h-1zM36 2h5v1h-5zM38 3h1v1h-1zM40 3h7v1h-7zM38 4h1v1h-1zM43 4h1v1h-1zM37 5h3v1h-3zM43 5h1v1h-1zM37 6h2v1h-2zM41 6h1v1h-1zM43 6h1v1h-1zM45 6h1v1h-1zM36 7h1v1h-1zM38 7h1v1h-1zM41 7h1v1h-1zM43 7h1v1h-1zM46 7h1v1h-1zM38 8h1v1h-1zM40 8h1v1h-1zM43 8h1v1h-1zM46 8h1v1h-1zM38 9h1v1h-1zM43 9h1v1h-1zM38 10h1v1h-1zM42 10h2v1h-2z" fill="#000"/></svg>
<div style="left:733px;top:88px;width:1px;height:38px;background:#808080;"></div>
<div style="left:734px;top:88px;width:1px;height:38px;background:#FFFFFF;"></div>
<svg class="t" style="left:747px;top:90px;" width="26" height="15" viewBox="0 -1 26 15" role="img" aria-label="起点"><title>起点</title><path d="M3 0h1v1h-1zM3 1h1v1h-1zM6 1h4v1h-4zM1 2h5v1h-5zM9 2h1v1h-1zM3 3h1v1h-1zM9 3h1v1h-1zM0 4h10v1h-10zM3 5h1v1h-1zM6 5h1v1h-1zM1 6h1v1h-1zM3 6h1v1h-1zM6 6h1v1h-1zM10 6h1v1h-1zM1 7h1v1h-1zM3 7h4v1h-4zM10 7h1v1h-1zM1 8h1v1h-1zM3 8h1v1h-1zM6 8h5v1h-5zM0 9h1v1h-1zM2 9h2v1h-2zM0 10h1v1h-1zM4 10h7v1h-7zM17 0h1v1h-1zM17 1h1v1h-1zM17 2h5v1h-5zM17 3h1v1h-1zM14 4h7v1h-7zM14 5h1v1h-1zM20 5h1v1h-1zM14 6h1v1h-1zM20 6h1v1h-1zM14 7h7v1h-7zM13 9h1v1h-1zM15 9h1v1h-1zM18 9h1v1h-1zM21 9h1v1h-1zM12 10h1v1h-1zM16 10h1v1h-1zM19 10h1v1h-1zM22 10h1v1h-1z" fill="#000"/></svg>
<svg class="t" style="left:747px;top:111px;" width="26" height="15" viewBox="0 -1 26 15" role="img" aria-label="终点"><title>终点</title><path d="M2 0h1v1h-1zM6 0h1v1h-1zM2 1h1v1h-1zM6 1h4v1h-4zM1 2h1v1h-1zM3 2h1v1h-1zM5 2h1v1h-1zM9 2h1v1h-1zM0 3h3v1h-3zM4 3h1v1h-1zM6 3h1v1h-1zM8 3h1v1h-1zM2 4h1v1h-1zM7 4h1v1h-1zM1 5h1v1h-1zM6 5h1v1h-1zM8 5h1v1h-1zM0 6h3v1h-3zM4 6h2v1h-2zM9 6h2v1h-2zM7 7h1v1h-1zM2 8h2v1h-2zM8 8h2v1h-2zM0 9h2v1h-2zM6 9h2v1h-2zM8 10h2v1h-2zM17 0h1v1h-1zM17 1h1v1h-1zM17 2h5v1h-5zM17 3h1v1h-1zM14 4h7v1h-7zM14 5h1v1h-1zM20 5h1v1h-1zM14 6h1v1h-1zM20 6h1v1h-1zM14 7h7v1h-7zM13 9h1v1h-1zM15 9h1v1h-1zM18 9h1v1h-1zM21 9h1v1h-1zM12 10h1v1h-1zM16 10h1v1h-1zM19 10h1v1h-1zM22 10h1v1h-1z" fill="#000"/></svg>
<div style="left:775px;top:88px;width:48px;height:16px;background:#fff;border:1px solid;border-color:#808080 #FFFFFF #FFFFFF #808080"></div>
<svg class="t" style="left:776px;top:88px;" width="32" height="15" viewBox="0 -1 32 15" role="img" aria-label="6.019"><title>6.019</title><path d="M1 2h3v1h-3zM0 3h1v1h-1zM0 4h1v1h-1zM0 5h4v1h-4zM0 6h1v1h-1zM4 6h1v1h-1zM0 7h1v1h-1zM4 7h1v1h-1zM0 8h1v1h-1zM4 8h1v1h-1zM1 9h3v1h-3zM7 8h1v1h-1zM7 9h1v1h-1zM13 2h3v1h-3zM12 3h1v1h-1zM16 3h1v1h-1zM12 4h1v1h-1zM16 4h1v1h-1zM12 5h1v1h-1zM16 5h1v1h-1zM12 6h1v1h-1zM16 6h1v1h-1zM12 7h1v1h-1zM16 7h1v1h-1zM12 8h1v1h-1zM16 8h1v1h-1zM13 9h3v1h-3zM18 2h3v1h-3zM20 3h1v1h-1zM20 4h1v1h-1zM20 5h1v1h-1zM20 6h1v1h-1zM20 7h1v1h-1zM20 8h1v1h-1zM18 9h5v1h-5zM25 2h3v1h-3zM24 3h1v1h-1zM28 3h1v1h-1zM24 4h1v1h-1zM28 4h1v1h-1zM24 5h1v1h-1zM28 5h1v1h-1zM25 6h4v1h-4zM28 7h1v1h-1zM24 8h1v1h-1zM28 8h1v1h-1zM25 9h3v1h-3z" fill="#000"/></svg>
<div style="left:775px;top:109px;width:48px;height:16px;background:#fff;border:1px solid;border-color:#808080 #FFFFFF #FFFFFF #808080"></div>
<svg class="t" style="left:776px;top:109px;" width="32" height="15" viewBox="0 -1 32 15" role="img" aria-label="7.019"><title>7.019</title><path d="M0 2h5v1h-5zM4 3h1v1h-1zM4 4h1v1h-1zM3 5h1v1h-1zM3 6h1v1h-1zM2 7h1v1h-1zM2 8h1v1h-1zM2 9h1v1h-1zM7 8h1v1h-1zM7 9h1v1h-1zM13 2h3v1h-3zM12 3h1v1h-1zM16 3h1v1h-1zM12 4h1v1h-1zM16 4h1v1h-1zM12 5h1v1h-1zM16 5h1v1h-1zM12 6h1v1h-1zM16 6h1v1h-1zM12 7h1v1h-1zM16 7h1v1h-1zM12 8h1v1h-1zM16 8h1v1h-1zM13 9h3v1h-3zM18 2h3v1h-3zM20 3h1v1h-1zM20 4h1v1h-1zM20 5h1v1h-1zM20 6h1v1h-1zM20 7h1v1h-1zM20 8h1v1h-1zM18 9h5v1h-5zM25 2h3v1h-3zM24 3h1v1h-1zM28 3h1v1h-1zM24 4h1v1h-1zM28 4h1v1h-1zM24 5h1v1h-1zM28 5h1v1h-1zM25 6h4v1h-4zM28 7h1v1h-1zM24 8h1v1h-1zM28 8h1v1h-1zM25 9h3v1h-3z" fill="#000"/></svg>
<svg class="t" style="left:831px;top:91px;" width="38" height="15" viewBox="0 -1 38 15" role="img" aria-label="刻度数"><title>刻度数</title><path d="M2 0h1v1h-1zM10 0h1v1h-1zM3 1h1v1h-1zM10 1h1v1h-1zM0 2h7v1h-7zM8 2h1v1h-1zM10 2h1v1h-1zM2 3h1v1h-1zM5 3h1v1h-1zM8 3h1v1h-1zM10 3h1v1h-1zM1 4h1v1h-1zM4 4h1v1h-1zM8 4h1v1h-1zM10 4h1v1h-1zM0 5h4v1h-4zM5 5h1v1h-1zM8 5h1v1h-1zM10 5h1v1h-1zM2 6h1v1h-1zM5 6h1v1h-1zM8 6h1v1h-1zM10 6h1v1h-1zM1 7h1v1h-1zM4 7h1v1h-1zM8 7h1v1h-1zM10 7h1v1h-1zM0 8h1v1h-1zM3 8h2v1h-2zM10 8h1v1h-1zM2 9h1v1h-1zM5 9h1v1h-1zM10 9h1v1h-1zM0 10h2v1h-2zM5 10h1v1h-1zM8 10h3v1h-3zM17 0h1v1h-1zM13 1h10v1h-10zM13 2h1v1h-1zM16 2h1v1h-1zM19 2h1v1h-1zM13 3h9v1h-9zM13 4h1v1h-1zM16 4h1v1h-1zM19 4h1v1h-1zM13 5h1v1h-1zM16 5h4v1h-4zM13 6h1v1h-1zM13 7h1v1h-1zM15 7h6v1h-6zM13 8h1v1h-1zM16 8h1v1h-1zM19 8h1v1h-1zM12 9h1v1h-1zM17 9h2v1h-2zM12 10h1v1h-1zM14 10h3v1h-3zM19 10h3v1h-3zM24 0h1v1h-1zM27 0h1v1h-1zM29 0h1v1h-1zM31 0h1v1h-1zM25 1h1v1h-1zM27 1h2v1h-2zM31 1h1v1h-1zM24 2h6v1h-6zM31 2h4v1h-4zM26 3h2v1h-2zM30 3h2v1h-2zM33 3h1v1h-1zM25 4h1v1h-1zM27 4h2v1h-2zM31 4h1v1h-1zM33 4h1v1h-1zM24 5h1v1h-1zM27 5h1v1h-1zM29 5h1v1h-1zM31 5h1v1h-1zM33 5h1v1h-1zM24 6h6v1h-6zM31 6h1v1h-1zM33 6h1v1h-1zM26 7h1v1h-1zM28 7h1v1h-1zM31 7h1v1h-1zM33 7h1v1h-1zM25 8h2v1h-2zM28 8h1v1h-1zM32 8h1v1h-1zM27 9h1v1h-1zM31 9h1v1h-1zM33 9h1v1h-1zM24 10h3v1h-3zM28 10h3v1h-3zM34 10h1v1h-1z" fill="#000"/></svg>
<div style="left:870px;top:88px;width:39px;height:16px;background:#fff;border:1px solid;border-color:#808080 #FFFFFF #FFFFFF #808080"></div>
<svg class="t" style="left:872px;top:88px;" width="14" height="15" viewBox="0 -1 14 15" role="img" aria-label="10"><title>10</title><path d="M0 2h3v1h-3zM2 3h1v1h-1zM2 4h1v1h-1zM2 5h1v1h-1zM2 6h1v1h-1zM2 7h1v1h-1zM2 8h1v1h-1zM0 9h5v1h-5zM7 2h3v1h-3zM6 3h1v1h-1zM10 3h1v1h-1zM6 4h1v1h-1zM10 4h1v1h-1zM6 5h1v1h-1zM10 5h1v1h-1zM6 6h1v1h-1zM10 6h1v1h-1zM6 7h1v1h-1zM10 7h1v1h-1zM6 8h1v1h-1zM10 8h1v1h-1zM7 9h3v1h-3z" fill="#000"/></svg>
<div style="left:894px;top:89px;width:13px;height:6px;border:1px solid;border-color:#FFFFFF #404040 #404040 #FFFFFF"><div style="left:0;top:0;width:11px;height:4px;background:#D4D0C8;border:1px solid;border-color:#D4D0C8 #808080 #808080 #D4D0C8"></div></div>
<div style="left:894px;top:97px;width:13px;height:6px;border:1px solid;border-color:#FFFFFF #404040 #404040 #FFFFFF"><div style="left:0;top:0;width:11px;height:4px;background:#D4D0C8;border:1px solid;border-color:#D4D0C8 #808080 #808080 #D4D0C8"></div></div>
<svg style="left:894px;top:90px" width="14" height="14" viewBox="0 0 14 14" shape-rendering="crispEdges"><path d="M7 3h1v1h-1zM7 10h1v1h-1z" fill="#000"/></svg>
<div style="left:873px;top:109px;width:34px;height:19px;border:1px solid;border-color:#FFFFFF #404040 #404040 #FFFFFF"><div style="left:0;top:0;width:32px;height:17px;background:#D4D0C8;border:1px solid;border-color:#D4D0C8 #808080 #808080 #D4D0C8"></div></div>
<svg class="t" style="left:879px;top:112px;" width="26" height="15" viewBox="0 -1 26 15" role="img" aria-label="应用"><title>应用</title><path d="M5 0h1v1h-1zM6 1h1v1h-1zM1 2h10v1h-10zM1 3h1v1h-1zM1 4h1v1h-1zM5 4h1v1h-1zM9 4h1v1h-1zM1 5h1v1h-1zM3 5h1v1h-1zM6 5h1v1h-1zM9 5h1v1h-1zM1 6h1v1h-1zM4 6h1v1h-1zM6 6h1v1h-1zM9 6h1v1h-1zM1 7h1v1h-1zM4 7h1v1h-1zM8 7h1v1h-1zM1 8h1v1h-1zM8 8h1v1h-1zM0 9h1v1h-1zM7 9h1v1h-1zM0 10h1v1h-1zM3 10h8v1h-8zM13 0h9v1h-9zM13 1h1v1h-1zM17 1h1v1h-1zM21 1h1v1h-1zM13 2h1v1h-1zM17 2h1v1h-1zM21 2h1v1h-1zM13 3h9v1h-9zM13 4h1v1h-1zM17 4h1v1h-1zM21 4h1v1h-1zM13 5h1v1h-1zM17 5h1v1h-1zM21 5h1v1h-1zM13 6h9v1h-9zM13 7h1v1h-1zM17 7h1v1h-1zM21 7h1v1h-1zM13 8h1v1h-1zM17 8h1v1h-1zM21 8h1v1h-1zM12 9h1v1h-1zM17 9h1v1h-1zM21 9h1v1h-1zM12 10h1v1h-1zM17 10h1v1h-1zM20 10h2v1h-2z" fill="#000"/></svg>
<div style="left:4px;top:134px;width:349px;height:323px;border:1px solid;border-color:#808080 #FFFFFF #FFFFFF #808080"><div style="left:0;top:0;width:347px;height:321px;background:#C0C0C0;border:1px solid;border-color:#000 #EEECE8 #EEECE8 #000"></div></div>
<svg class="t" style="left:141px;top:141px;" width="62" height="15" viewBox="0 -1 62 15" role="img" aria-label="窗口最大值"><title>窗口最大值</title><path d="M6 0h1v1h-1zM1 1h10v1h-10zM1 2h1v1h-1zM3 2h1v1h-1zM8 2h1v1h-1zM10 2h1v1h-1zM2 3h1v1h-1zM5 3h1v1h-1zM9 3h1v1h-1zM1 4h10v1h-10zM2 5h1v1h-1zM5 5h1v1h-1zM9 5h1v1h-1zM2 6h1v1h-1zM4 6h6v1h-6zM2 7h3v1h-3zM7 7h1v1h-1zM9 7h1v1h-1zM2 8h1v1h-1zM5 8h2v1h-2zM9 8h1v1h-1zM2 9h1v1h-1zM4 9h1v1h-1zM7 9h1v1h-1zM9 9h1v1h-1zM2 10h8v1h-8zM13 1h9v1h-9zM13 2h1v1h-1zM21 2h1v1h-1zM13 3h1v1h-1zM21 3h1v1h-1zM13 4h1v1h-1zM21 4h1v1h-1zM13 5h1v1h-1zM21 5h1v1h-1zM13 6h1v1h-1zM21 6h1v1h-1zM13 7h1v1h-1zM21 7h1v1h-1zM13 8h9v1h-9zM13 9h1v1h-1zM21 9h1v1h-1zM26 0h7v1h-7zM26 1h1v1h-1zM32 1h1v1h-1zM26 2h7v1h-7zM26 3h1v1h-1zM32 3h1v1h-1zM24 4h11v1h-11zM25 5h1v1h-1zM28 5h1v1h-1zM25 6h9v1h-9zM25 7h1v1h-1zM28 7h1v1h-1zM30 7h1v1h-1zM33 7h1v1h-1zM25 8h4v1h-4zM31 8h2v1h-2zM24 9h2v1h-2zM28 9h1v1h-1zM31 9h2v1h-2zM28 10h3v1h-3zM33 10h2v1h-2zM41 0h1v1h-1zM41 1h1v1h-1zM41 2h1v1h-1zM36 3h11v1h-11zM41 4h1v1h-1zM41 5h1v1h-1zM40 6h1v1h-1zM42 6h1v1h-1zM40 7h1v1h-1zM42 7h1v1h-1zM39 8h1v1h-1zM43 8h1v1h-1zM38 9h1v1h-1zM44 9h1v1h-1zM36 10h2v1h-2zM45 10h2v1h-2zM51 0h1v1h-1zM55 0h1v1h-1zM51 1h8v1h-8zM50 2h1v1h-1zM54 2h1v1h-1zM50 3h1v1h-1zM53 3h5v1h-5zM49 4h2v1h-2zM53 4h1v1h-1zM57 4h1v1h-1zM48 5h1v1h-1zM50 5h1v1h-1zM53 5h5v1h-5zM50 6h1v1h-1zM53 6h1v1h-1zM57 6h1v1h-1zM50 7h1v1h-1zM53 7h3v1h-3zM57 7h1v1h-1zM50 8h1v1h-1zM53 8h1v1h-1zM55 8h3v1h-3zM50 9h1v1h-1zM53 9h1v1h-1zM57 9h1v1h-1zM50 10h1v1h-1zM52 10h7v1h-7z" fill="#000"/></svg>
<svg class="t" style="left:206px;top:141px;" width="62" height="15" viewBox="0 -1 62 15" role="img" aria-label="窗口最小值"><title>窗口最小值</title><path d="M6 0h1v1h-1zM1 1h10v1h-10zM1 2h1v1h-1zM3 2h1v1h-1zM8 2h1v1h-1zM10 2h1v1h-1zM2 3h1v1h-1zM5 3h1v1h-1zM9 3h1v1h-1zM1 4h10v1h-10zM2 5h1v1h-1zM5 5h1v1h-1zM9 5h1v1h-1zM2 6h1v1h-1zM4 6h6v1h-6zM2 7h3v1h-3zM7 7h1v1h-1zM9 7h1v1h-1zM2 8h1v1h-1zM5 8h2v1h-2zM9 8h1v1h-1zM2 9h1v1h-1zM4 9h1v1h-1zM7 9h1v1h-1zM9 9h1v1h-1zM2 10h8v1h-8zM13 1h9v1h-9zM13 2h1v1h-1zM21 2h1v1h-1zM13 3h1v1h-1zM21 3h1v1h-1zM13 4h1v1h-1zM21 4h1v1h-1zM13 5h1v1h-1zM21 5h1v1h-1zM13 6h1v1h-1zM21 6h1v1h-1zM13 7h1v1h-1zM21 7h1v1h-1zM13 8h9v1h-9zM13 9h1v1h-1zM21 9h1v1h-1zM26 0h7v1h-7zM26 1h1v1h-1zM32 1h1v1h-1zM26 2h7v1h-7zM26 3h1v1h-1zM32 3h1v1h-1zM24 4h11v1h-11zM25 5h1v1h-1zM28 5h1v1h-1zM25 6h9v1h-9zM25 7h1v1h-1zM28 7h1v1h-1zM30 7h1v1h-1zM33 7h1v1h-1zM25 8h4v1h-4zM31 8h2v1h-2zM24 9h2v1h-2zM28 9h1v1h-1zM31 9h2v1h-2zM28 10h3v1h-3zM33 10h2v1h-2zM41 0h1v1h-1zM41 1h1v1h-1zM41 2h1v1h-1zM38 3h1v1h-1zM41 3h1v1h-1zM44 3h1v1h-1zM38 4h1v1h-1zM41 4h1v1h-1zM45 4h1v1h-1zM37 5h1v1h-1zM41 5h1v1h-1zM45 5h1v1h-1zM37 6h1v1h-1zM41 6h1v1h-1zM46 6h1v1h-1zM36 7h1v1h-1zM41 7h1v1h-1zM46 7h1v1h-1zM41 8h1v1h-1zM39 9h1v1h-1zM41 9h1v1h-1zM40 10h1v1h-1zM51 0h1v1h-1zM55 0h1v1h-1zM51 1h8v1h-8zM50 2h1v1h-1zM54 2h1v1h-1zM50 3h1v1h-1zM53 3h5v1h-5zM49 4h2v1h-2zM53 4h1v1h-1zM57 4h1v1h-1zM48 5h1v1h-1zM50 5h1v1h-1zM53 5h5v1h-5zM50 6h1v1h-1zM53 6h1v1h-1zM57 6h1v1h-1zM50 7h1v1h-1zM53 7h3v1h-3zM57 7h1v1h-1zM50 8h1v1h-1zM53 8h1v1h-1zM55 8h3v1h-3zM50 9h1v1h-1zM53 9h1v1h-1zM57 9h1v1h-1zM50 10h1v1h-1zM52 10h7v1h-7z" fill="#000"/></svg>
<div style="left:271px;top:138px;width:58px;height:16px;border:1px solid;border-color:#FFFFFF #404040 #404040 #FFFFFF"><div style="left:0;top:0;width:56px;height:14px;background:#C0C0C0;border:1px solid;border-color:#C0C0C0 #808080 #808080 #C0C0C0"></div></div>
<svg class="t" style="left:280px;top:140px;" width="44" height="15" viewBox="0 -1 44 15" role="img" aria-label="游标1值"><title>游标1值</title><path d="M1 0h1v1h-1zM4 0h1v1h-1zM8 0h1v1h-1zM2 1h1v1h-1zM5 1h1v1h-1zM8 1h3v1h-3zM3 2h5v1h-5zM0 3h1v1h-1zM4 3h1v1h-1zM8 3h3v1h-3zM1 4h1v1h-1zM3 4h4v1h-4zM10 4h1v1h-1zM2 5h1v1h-1zM4 5h1v1h-1zM6 5h1v1h-1zM9 5h1v1h-1zM2 6h1v1h-1zM4 6h1v1h-1zM6 6h5v1h-5zM0 7h2v1h-2zM4 7h1v1h-1zM6 7h1v1h-1zM9 7h1v1h-1zM1 8h1v1h-1zM4 8h1v1h-1zM6 8h1v1h-1zM9 8h1v1h-1zM1 9h1v1h-1zM3 9h1v1h-1zM6 9h1v1h-1zM9 9h1v1h-1zM1 10h2v1h-2zM5 10h2v1h-2zM8 10h2v1h-2zM14 0h1v1h-1zM17 0h5v1h-5zM14 1h1v1h-1zM12 2h5v1h-5zM14 3h1v1h-1zM16 3h7v1h-7zM14 4h1v1h-1zM19 4h1v1h-1zM13 5h3v1h-3zM19 5h1v1h-1zM13 6h2v1h-2zM17 6h1v1h-1zM19 6h1v1h-1zM21 6h1v1h-1zM12 7h1v1h-1zM14 7h1v1h-1zM17 7h1v1h-1zM19 7h1v1h-1zM22 7h1v1h-1zM14 8h1v1h-1zM16 8h1v1h-1zM19 8h1v1h-1zM22 8h1v1h-1zM14 9h1v1h-1zM19 9h1v1h-1zM14 10h1v1h-1zM18 10h2v1h-2zM24 2h3v1h-3zM26 3h1v1h-1zM26 4h1v1h-1zM26 5h1v1h-1zM26 6h1v1h-1zM26 7h1v1h-1zM26 8h1v1h-1zM24 9h5v1h-5zM33 0h1v1h-1zM37 0h1v1h-1zM33 1h8v1h-8zM32 2h1v1h-1zM36 2h1v1h-1zM32 3h1v1h-1zM35 3h5v1h-5zM31 4h2v1h-2zM35 4h1v1h-1zM39 4h1v1h-1zM30 5h1v1h-1zM32 5h1v1h-1zM35 5h5v1h-5zM32 6h1v1h-1zM35 6h1v1h-1zM39 6h1v1h-1zM32 7h1v1h-1zM35 7h3v1h-3zM39 7h1v1h-1zM32 8h1v1h-1zM35 8h1v1h-1zM37 8h3v1h-3zM32 9h1v1h-1zM35 9h1v1h-1zM39 9h1v1h-1zM32 10h1v1h-1zM34 10h7v1h-7z" fill="#000"/></svg>
<div style="left:8px;top:157px;width:329px;height:36px;border:1px solid #D6D6D6"></div>
<div style="left:9px;top:158px;width:329px;height:36px;background:#000;"></div>
<div style="left:11px;top:160px;width:323px;height:30px;border:1px solid;border-color:#F4F4F4 #404040 #404040 #F4F4F4"><div style="left:0;top:0;width:321px;height:28px;background:#C0C0C0;border:1px solid;border-color:#FFFFFF #808080 #808080 #FFFFFF"></div></div>
<div style="left:15px;top:162px;width:12px;height:11px;background:#808080;border:1px solid;border-color:#000 #D8D8D8 #D8D8D8 #000"></div>
<svg style="left:15px;top:162px" width="14" height="13" viewBox="0 0 14 13"><path d="M3.500 6l2.500 3.500L10.500 3.500" fill="none" stroke="#00FF00" stroke-width="2"/></svg>
<div style="left:15px;top:178px;width:14px;height:12px;background:#FFFF00;"></div>
<svg class="t" style="left:35px;top:161px;" width="80" height="15" viewBox="0 -1 80 15" role="img" aria-label="定子电压(Uab)"><title>定子电压(Uab)</title><path d="M5 0h1v1h-1zM1 1h10v1h-10zM1 2h1v1h-1zM10 2h1v1h-1zM0 3h1v1h-1zM9 3h1v1h-1zM2 4h8v1h-8zM5 5h1v1h-1zM2 6h1v1h-1zM5 6h1v1h-1zM2 7h1v1h-1zM5 7h4v1h-4zM2 8h1v1h-1zM5 8h1v1h-1zM1 9h1v1h-1zM3 9h1v1h-1zM5 9h1v1h-1zM0 10h1v1h-1zM4 10h7v1h-7zM14 0h7v1h-7zM19 1h1v1h-1zM18 2h1v1h-1zM17 3h1v1h-1zM17 4h1v1h-1zM12 5h11v1h-11zM17 6h1v1h-1zM17 7h1v1h-1zM17 8h1v1h-1zM15 9h1v1h-1zM17 9h1v1h-1zM16 10h1v1h-1zM29 0h1v1h-1zM29 1h1v1h-1zM25 2h9v1h-9zM25 3h1v1h-1zM29 3h1v1h-1zM33 3h1v1h-1zM25 4h9v1h-9zM25 5h1v1h-1zM29 5h1v1h-1zM33 5h1v1h-1zM25 6h1v1h-1zM29 6h1v1h-1zM33 6h1v1h-1zM25 7h9v1h-9zM29 8h1v1h-1zM34 8h1v1h-1zM29 9h1v1h-1zM34 9h1v1h-1zM30 10h5v1h-5zM38 0h9v1h-9zM38 1h1v1h-1zM38 2h1v1h-1zM42 2h1v1h-1zM38 3h1v1h-1zM42 3h1v1h-1zM38 4h1v1h-1zM42 4h1v1h-1zM38 5h8v1h-8zM38 6h1v1h-1zM42 6h1v1h-1zM38 7h1v1h-1zM42 7h1v1h-1zM44 7h1v1h-1zM37 8h1v1h-1zM42 8h1v1h-1zM45 8h1v1h-1zM37 9h1v1h-1zM42 9h1v1h-1zM36 10h1v1h-1zM38 10h9v1h-9zM53 0h1v1h-1zM52 1h1v1h-1zM52 2h1v1h-1zM51 3h1v1h-1zM51 4h1v1h-1zM51 5h1v1h-1zM51 6h1v1h-1zM51 7h1v1h-1zM52 8h1v1h-1zM52 9h1v1h-1zM53 10h1v1h-1zM54 2h1v1h-1zM58 2h1v1h-1zM54 3h1v1h-1zM58 3h1v1h-1zM54 4h1v1h-1zM58 4h1v1h-1zM54 5h1v1h-1zM58 5h1v1h-1zM54 6h1v1h-1zM58 6h1v1h-1zM54 7h1v1h-1zM58 7h1v1h-1zM54 8h1v1h-1zM58 8h1v1h-1zM55 9h3v1h-3zM61 4h3v1h-3zM60 5h1v1h-1zM64 5h1v1h-1zM61 6h4v1h-4zM60 7h1v1h-1zM64 7h1v1h-1zM60 8h1v1h-1zM64 8h1v1h-1zM61 9h4v1h-4zM66 2h1v1h-1zM66 3h1v1h-1zM66 4h4v1h-4zM66 5h1v1h-1zM70 5h1v1h-1zM66 6h1v1h-1zM70 6h1v1h-1zM66 7h1v1h-1zM70 7h1v1h-1zM66 8h1v1h-1zM70 8h1v1h-1zM66 9h4v1h-4zM72 0h1v1h-1zM73 1h1v1h-1zM73 2h1v1h-1zM74 3h1v1h-1zM74 4h1v1h-1zM74 5h1v1h-1zM74 6h1v1h-1zM74 7h1v1h-1zM73 8h1v1h-1zM73 9h1v1h-1zM72 10h1v1h-1z" fill="#000"/></svg>
<svg class="t" style="left:65px;top:178px;" width="74" height="15" viewBox="0 -1 74 15" role="img" aria-label="Uab(15.80kV)"><title>Uab(15.80kV)</title><path d="M0 2h1v1h-1zM4 2h1v1h-1zM0 3h1v1h-1zM4 3h1v1h-1zM0 4h1v1h-1zM4 4h1v1h-1zM0 5h1v1h-1zM4 5h1v1h-1zM0 6h1v1h-1zM4 6h1v1h-1zM0 7h1v1h-1zM4 7h1v1h-1zM0 8h1v1h-1zM4 8h1v1h-1zM1 9h3v1h-3zM7 4h3v1h-3zM6 5h1v1h-1zM10 5h1v1h-1zM7 6h4v1h-4zM6 7h1v1h-1zM10 7h1v1h-1zM6 8h1v1h-1zM10 8h1v1h-1zM7 9h4v1h-4zM12 2h1v1h-1zM12 3h1v1h-1zM12 4h4v1h-4zM12 5h1v1h-1zM16 5h1v1h-1zM12 6h1v1h-1zM16 6h1v1h-1zM12 7h1v1h-1zM16 7h1v1h-1zM12 8h1v1h-1zM16 8h1v1h-1zM12 9h4v1h-4zM23 0h1v1h-1zM22 1h1v1h-1zM22 2h1v1h-1zM21 3h1v1h-1zM21 4h1v1h-1zM21 5h1v1h-1zM21 6h1v1h-1zM21 7h1v1h-1zM22 8h1v1h-1zM22 9h1v1h-1zM23 10h1v1h-1zM24 2h3v1h-3zM26 3h1v1h-1zM26 4h1v1h-1zM26 5h1v1h-1zM26 6h1v1h-1zM26 7h1v1h-1zM26 8h1v1h-1zM24 9h5v1h-5zM30 2h4v1h-4zM30 3h1v1h-1zM30 4h1v1h-1zM30 5h4v1h-4zM34 6h1v1h-1zM34 7h1v1h-1zM34 8h1v1h-1zM30 9h4v1h-4zM37 8h1v1h-1zM37 9h1v1h-1zM43 2h3v1h-3zM42 3h1v1h-1zM46 3h1v1h-1zM42 4h1v1h-1zM46 4h1v1h-1zM43 5h3v1h-3zM42 6h1v1h-1zM46 6h1v1h-1zM42 7h1v1h-1zM46 7h1v1h-1zM42 8h1v1h-1zM46 8h1v1h-1zM43 9h3v1h-3zM49 2h3v1h-3zM48 3h1v1h-1zM52 3h1v1h-1zM48 4h1v1h-1zM52 4h1v1h-1zM48 5h1v1h-1zM52 5h1v1h-1zM48 6h1v1h-1zM52 6h1v1h-1zM48 7h1v1h-1zM52 7h1v1h-1zM48 8h1v1h-1zM52 8h1v1h-1zM49 9h3v1h-3zM54 2h1v1h-1zM54 3h1v1h-1zM54 4h1v1h-1zM57 4h1v1h-1zM54 5h1v1h-1zM56 5h1v1h-1zM54 6h2v1h-2zM54 7h1v1h-1zM56 7h1v1h-1zM54 8h1v1h-1zM57 8h1v1h-1zM54 9h1v1h-1zM58 9h1v1h-1zM60 2h1v1h-1zM64 2h1v1h-1zM60 3h1v1h-1zM64 3h1v1h-1zM60 4h1v1h-1zM64 4h1v1h-1zM61 5h1v1h-1zM63 5h1v1h-1zM61 6h1v1h-1zM63 6h1v1h-1zM61 7h1v1h-1zM63 7h1v1h-1zM62 8h1v1h-1zM62 9h1v1h-1zM66 0h1v1h-1zM67 1h1v1h-1zM67 2h1v1h-1zM68 3h1v1h-1zM68 4h1v1h-1zM68 5h1v1h-1zM68 6h1v1h-1zM68 7h1v1h-1zM67 8h1v1h-1zM67 9h1v1h-1zM66 10h1v1h-1z" fill="#000"/></svg>
<div style="left:141px;top:164px;width:58px;height:22px;border:1px solid;border-color:#808080 #FFFFFF #FFFFFF #808080"><div style="left:0;top:0;width:56px;height:20px;background:#C0C0C0;border:1px solid;border-color:#404040 #FFFFFF #FFFFFF #404040"></div></div>
<div class="v" style="left:141px;top:164px;width:60px;height:24px">15.77</div>
<div style="left:206px;top:164px;width:58px;height:22px;border:1px solid;border-color:#808080 #FFFFFF #FFFFFF #808080"><div style="left:0;top:0;width:56px;height:20px;background:#C0C0C0;border:1px solid;border-color:#404040 #FFFFFF #FFFFFF #404040"></div></div>
<div class="v" style="left:206px;top:164px;width:60px;height:24px">7.99</div>
<div style="left:271px;top:164px;width:58px;height:22px;border:1px solid;border-color:#808080 #FFFFFF #FFFFFF #808080"><div style="left:0;top:0;width:56px;height:20px;background:#C0C0C0;border:1px solid;border-color:#404040 #FFFFFF #FFFFFF #404040"></div></div>
<div class="v" style="left:271px;top:164px;width:60px;height:24px">13.96</div>
<div style="left:11px;top:197px;width:323px;height:30px;border:1px solid;border-color:#F4F4F4 #404040 #404040 #F4F4F4"><div style="left:0;top:0;width:321px;height:28px;background:#C0C0C0;border:1px solid;border-color:#FFFFFF #808080 #808080 #FFFFFF"></div></div>
<div style="left:15px;top:199px;width:12px;height:11px;background:#808080;border:1px solid;border-color:#000 #D8D8D8 #D8D8D8 #000"></div>
<svg style="left:15px;top:199px" width="14" height="13" viewBox="0 0 14 13"><path d="M3.500 6l2.500 3.500L10.500 3.500" fill="none" stroke="#00FF00" stroke-width="2"/></svg>
<div style="left:15px;top:215px;width:14px;height:12px;background:#00FF00;"></div>
<svg class="t" style="left:35px;top:198px;" width="80" height="15" viewBox="0 -1 80 15" role="img" aria-label="定子电压(Ubc)"><title>定子电压(Ubc)</title><path d="M5 0h1v1h-1zM1 1h10v1h-10zM1 2h1v1h-1zM10 2h1v1h-1zM0 3h1v1h-1zM9 3h1v1h-1zM2 4h8v1h-8zM5 5h1v1h-1zM2 6h1v1h-1zM5 6h1v1h-1zM2 7h1v1h-1zM5 7h4v1h-4zM2 8h1v1h-1zM5 8h1v1h-1zM1 9h1v1h-1zM3 9h1v1h-1zM5 9h1v1h-1zM0 10h1v1h-1zM4 10h7v1h-7zM14 0h7v1h-7zM19 1h1v1h-1zM18 2h1v1h-1zM17 3h1v1h-1zM17 4h1v1h-1zM12 5h11v1h-11zM17 6h1v1h-1zM17 7h1v1h-1zM17 8h1v1h-1zM15 9h1v1h-1zM17 9h1v1h-1zM16 10h1v1h-1zM29 0h1v1h-1zM29 1h1v1h-1zM25 2h9v1h-9zM25 3h1v1h-1zM29 3h1v1h-1zM33 3h1v1h-1zM25 4h9v1h-9zM25 5h1v1h-1zM29 5h1v1h-1zM33 5h1v1h-1zM25 6h1v1h-1zM29 6h1v1h-1zM33 6h1v1h-1zM25 7h9v1h-9zM29 8h1v1h-1zM34 8h1v1h-1zM29 9h1v1h-1zM34 9h1v1h-1zM30 10h5v1h-5zM38 0h9v1h-9zM38 1h1v1h-1zM38 2h1v1h-1zM42 2h1v1h-1zM38 3h1v1h-1zM42 3h1v1h-1zM38 4h1v1h-1zM42 4h1v1h-1zM38 5h8v1h-8zM38 6h1v1h-1zM42 6h1v1h-1zM38 7h1v1h-1zM42 7h1v1h-1zM44 7h1v1h-1zM37 8h1v1h-1zM42 8h1v1h-1zM45 8h1v1h-1zM37 9h1v1h-1zM42 9h1v1h-1zM36 10h1v1h-1zM38 10h9v1h-9zM53 0h1v1h-1zM52 1h1v1h-1zM52 2h1v1h-1zM51 3h1v1h-1zM51 4h1v1h-1zM51 5h1v1h-1zM51 6h1v1h-1zM51 7h1v1h-1zM52 8h1v1h-1zM52 9h1v1h-1zM53 10h1v1h-1zM54 2h1v1h-1zM58 2h1v1h-1zM54 3h1v1h-1zM58 3h1v1h-1zM54 4h1v1h-1zM58 4h1v1h-1zM54 5h1v1h-1zM58 5h1v1h-1zM54 6h1v1h-1zM58 6h1v1h-1zM54 7h1v1h-1zM58 7h1v1h-1zM54 8h1v1h-1zM58 8h1v1h-1zM55 9h3v1h-3zM60 2h1v1h-1zM60 3h1v1h-1zM60 4h4v1h-4zM60 5h1v1h-1zM64 5h1v1h-1zM60 6h1v1h-1zM64 6h1v1h-1zM60 7h1v1h-1zM64 7h1v1h-1zM60 8h1v1h-1zM64 8h1v1h-1zM60 9h4v1h-4zM68 4h3v1h-3zM67 5h1v1h-1zM67 6h1v1h-1zM67 7h1v1h-1zM67 8h1v1h-1zM68 9h3v1h-3zM72 0h1v1h-1zM73 1h1v1h-1zM73 2h1v1h-1zM74 3h1v1h-1zM74 4h1v1h-1zM74 5h1v1h-1zM74 6h1v1h-1zM74 7h1v1h-1zM73 8h1v1h-1zM73 9h1v1h-1zM72 10h1v1h-1z" fill="#000"/></svg>
<svg class="t" style="left:65px;top:215px;" width="74" height="15" viewBox="0 -1 74 15" role="img" aria-label="Ubc(15.80kV)"><title>Ubc(15.80kV)</title><path d="M0 2h1v1h-1zM4 2h1v1h-1zM0 3h1v1h-1zM4 3h1v1h-1zM0 4h1v1h-1zM4 4h1v1h-1zM0 5h1v1h-1zM4 5h1v1h-1zM0 6h1v1h-1zM4 6h1v1h-1zM0 7h1v1h-1zM4 7h1v1h-1zM0 8h1v1h-1zM4 8h1v1h-1zM1 9h3v1h-3zM6 2h1v1h-1zM6 3h1v1h-1zM6 4h4v1h-4zM6 5h1v1h-1zM10 5h1v1h-1zM6 6h1v1h-1zM10 6h1v1h-1zM6 7h1v1h-1zM10 7h1v1h-1zM6 8h1v1h-1zM10 8h1v1h-1zM6 9h4v1h-4zM14 4h3v1h-3zM13 5h1v1h-1zM13 6h1v1h-1zM13 7h1v1h-1zM13 8h1v1h-1zM14 9h3v1h-3zM23 0h1v1h-1zM22 1h1v1h-1zM22 2h1v1h-1zM21 3h1v1h-1zM21 4h1v1h-1zM21 5h1v1h-1zM21 6h1v1h-1zM21 7h1v1h-1zM22 8h1v1h-1zM22 9h1v1h-1zM23 10h1v1h-1zM24 2h3v1h-3zM26 3h1v1h-1zM26 4h1v1h-1zM26 5h1v1h-1zM26 6h1v1h-1zM26 7h1v1h-1zM26 8h1v1h-1zM24 9h5v1h-5zM30 2h4v1h-4zM30 3h1v1h-1zM30 4h1v1h-1zM30 5h4v1h-4zM34 6h1v1h-1zM34 7h1v1h-1zM34 8h1v1h-1zM30 9h4v1h-4zM37 8h1v1h-1zM37 9h1v1h-1zM43 2h3v1h-3zM42 3h1v1h-1zM46 3h1v1h-1zM42 4h1v1h-1zM46 4h1v1h-1zM43 5h3v1h-3zM42 6h1v1h-1zM46 6h1v1h-1zM42 7h1v1h-1zM46 7h1v1h-1zM42 8h1v1h-1zM46 8h1v1h-1zM43 9h3v1h-3zM49 2h3v1h-3zM48 3h1v1h-1zM52 3h1v1h-1zM48 4h1v1h-1zM52 4h1v1h-1zM48 5h1v1h-1zM52 5h1v1h-1zM48 6h1v1h-1zM52 6h1v1h-1zM48 7h1v1h-1zM52 7h1v1h-1zM48 8h1v1h-1zM52 8h1v1h-1zM49 9h3v1h-3zM54 2h1v1h-1zM54 3h1v1h-1zM54 4h1v1h-1zM57 4h1v1h-1zM54 5h1v1h-1zM56 5h1v1h-1zM54 6h2v1h-2zM54 7h1v1h-1zM56 7h1v1h-1zM54 8h1v1h-1zM57 8h1v1h-1zM54 9h1v1h-1zM58 9h1v1h-1zM60 2h1v1h-1zM64 2h1v1h-1zM60 3h1v1h-1zM64 3h1v1h-1zM60 4h1v1h-1zM64 4h1v1h-1zM61 5h1v1h-1zM63 5h1v1h-1zM61 6h1v1h-1zM63 6h1v1h-1zM61 7h1v1h-1zM63 7h1v1h-1zM62 8h1v1h-1zM62 9h1v1h-1zM66 0h1v1h-1zM67 1h1v1h-1zM67 2h1v1h-1zM68 3h1v1h-1zM68 4h1v1h-1zM68 5h1v1h-1zM68 6h1v1h-1zM68 7h1v1h-1zM67 8h1v1h-1zM67 9h1v1h-1zM66 10h1v1h-1z" fill="#000"/></svg>
<div style="left:141px;top:201px;width:58px;height:22px;border:1px solid;border-color:#808080 #FFFFFF #FFFFFF #808080"><div style="left:0;top:0;width:56px;height:20px;background:#C0C0C0;border:1px solid;border-color:#404040 #FFFFFF #FFFFFF #404040"></div></div>
<div class="v" style="left:141px;top:201px;width:60px;height:24px">15.76</div>
<div style="left:206px;top:201px;width:58px;height:22px;border:1px solid;border-color:#808080 #FFFFFF #FFFFFF #808080"><div style="left:0;top:0;width:56px;height:20px;background:#C0C0C0;border:1px solid;border-color:#404040 #FFFFFF #FFFFFF #404040"></div></div>
<div class="v" style="left:206px;top:201px;width:60px;height:24px">8.07</div>
<div style="left:271px;top:201px;width:58px;height:22px;border:1px solid;border-color:#808080 #FFFFFF #FFFFFF #808080"><div style="left:0;top:0;width:56px;height:20px;background:#C0C0C0;border:1px solid;border-color:#404040 #FFFFFF #FFFFFF #404040"></div></div>
<div class="v" style="left:271px;top:201px;width:60px;height:24px">14.18</div>
<div style="left:11px;top:234px;width:323px;height:30px;border:1px solid;border-color:#F4F4F4 #404040 #404040 #F4F4F4"><div style="left:0;top:0;width:321px;height:28px;background:#C0C0C0;border:1px solid;border-color:#FFFFFF #808080 #808080 #FFFFFF"></div></div>
<div style="left:15px;top:236px;width:12px;height:11px;background:#808080;border:1px solid;border-color:#000 #D8D8D8 #D8D8D8 #000"></div>
<svg style="left:15px;top:236px" width="14" height="13" viewBox="0 0 14 13"><path d="M3.500 6l2.500 3.500L10.500 3.500" fill="none" stroke="#00FF00" stroke-width="2"/></svg>
<div style="left:15px;top:252px;width:14px;height:12px;background:#FF0000;"></div>
<svg class="t" style="left:35px;top:235px;" width="80" height="15" viewBox="0 -1 80 15" role="img" aria-label="定子电压(Uca)"><title>定子电压(Uca)</title><path d="M5 0h1v1h-1zM1 1h10v1h-10zM1 2h1v1h-1zM10 2h1v1h-1zM0 3h1v1h-1zM9 3h1v1h-1zM2 4h8v1h-8zM5 5h1v1h-1zM2 6h1v1h-1zM5 6h1v1h-1zM2 7h1v1h-1zM5 7h4v1h-4zM2 8h1v1h-1zM5 8h1v1h-1zM1 9h1v1h-1zM3 9h1v1h-1zM5 9h1v1h-1zM0 10h1v1h-1zM4 10h7v1h-7zM14 0h7v1h-7zM19 1h1v1h-1zM18 2h1v1h-1zM17 3h1v1h-1zM17 4h1v1h-1zM12 5h11v1h-11zM17 6h1v1h-1zM17 7h1v1h-1zM17 8h1v1h-1zM15 9h1v1h-1zM17 9h1v1h-1zM16 10h1v1h-1zM29 0h1v1h-1zM29 1h1v1h-1zM25 2h9v1h-9zM25 3h1v1h-1zM29 3h1v1h-1zM33 3h1v1h-1zM25 4h9v1h-9zM25 5h1v1h-1zM29 5h1v1h-1zM33 5h1v1h-1zM25 6h1v1h-1zM29 6h1v1h-1zM33 6h1v1h-1zM25 7h9v1h-9zM29 8h1v1h-1zM34 8h1v1h-1zM29 9h1v1h-1zM34 9h1v1h-1zM30 10h5v1h-5zM38 0h9v1h-9zM38 1h1v1h-1zM38 2h1v1h-1zM42 2h1v1h-1zM38 3h1v1h-1zM42 3h1v1h-1zM38 4h1v1h-1zM42 4h1v1h-1zM38 5h8v1h-8zM38 6h1v1h-1zM42 6h1v1h-1zM38 7h1v1h-1zM42 7h1v1h-1zM44 7h1v1h-1zM37 8h1v1h-1zM42 8h1v1h-1zM45 8h1v1h-1zM37 9h1v1h-1zM42 9h1v1h-1zM36 10h1v1h-1zM38 10h9v1h-9zM53 0h1v1h-1zM52 1h1v1h-1zM52 2h1v1h-1zM51 3h1v1h-1zM51 4h1v1h-1zM51 5h1v1h-1zM51 6h1v1h-1zM51 7h1v1h-1zM52 8h1v1h-1zM52 9h1v1h-1zM53 10h1v1h-1zM54 2h1v1h-1zM58 2h1v1h-1zM54 3h1v1h-1zM58 3h1v1h-1zM54 4h1v1h-1zM58 4h1v1h-1zM54 5h1v1h-1zM58 5h1v1h-1zM54 6h1v1h-1zM58 6h1v1h-1zM54 7h1v1h-1zM58 7h1v1h-1zM54 8h1v1h-1zM58 8h1v1h-1zM55 9h3v1h-3zM62 4h3v1h-3zM61 5h1v1h-1zM61 6h1v1h-1zM61 7h1v1h-1zM61 8h1v1h-1zM62 9h3v1h-3zM67 4h3v1h-3zM66 5h1v1h-1zM70 5h1v1h-1zM67 6h4v1h-4zM66 7h1v1h-1zM70 7h1v1h-1zM66 8h1v1h-1zM70 8h1v1h-1zM67 9h4v1h-4zM72 0h1v1h-1zM73 1h1v1h-1zM73 2h1v1h-1zM74 3h1v1h-1zM74 4h1v1h-1zM74 5h1v1h-1zM74 6h1v1h-1zM74 7h1v1h-1zM73 8h1v1h-1zM73 9h1v1h-1zM72 10h1v1h-1z" fill="#000"/></svg>
<svg class="t" style="left:65px;top:252px;" width="74" height="15" viewBox="0 -1 74 15" role="img" aria-label="Uca(15.80kV)"><title>Uca(15.80kV)</title><path d="M0 2h1v1h-1zM4 2h1v1h-1zM0 3h1v1h-1zM4 3h1v1h-1zM0 4h1v1h-1zM4 4h1v1h-1zM0 5h1v1h-1zM4 5h1v1h-1zM0 6h1v1h-1zM4 6h1v1h-1zM0 7h1v1h-1zM4 7h1v1h-1zM0 8h1v1h-1zM4 8h1v1h-1zM1 9h3v1h-3zM8 4h3v1h-3zM7 5h1v1h-1zM7 6h1v1h-1zM7 7h1v1h-1zM7 8h1v1h-1zM8 9h3v1h-3zM13 4h3v1h-3zM12 5h1v1h-1zM16 5h1v1h-1zM13 6h4v1h-4zM12 7h1v1h-1zM16 7h1v1h-1zM12 8h1v1h-1zM16 8h1v1h-1zM13 9h4v1h-4zM23 0h1v1h-1zM22 1h1v1h-1zM22 2h1v1h-1zM21 3h1v1h-1zM21 4h1v1h-1zM21 5h1v1h-1zM21 6h1v1h-1zM21 7h1v1h-1zM22 8h1v1h-1zM22 9h1v1h-1zM23 10h1v1h-1zM24 2h3v1h-3zM26 3h1v1h-1zM26 4h1v1h-1zM26 5h1v1h-1zM26 6h1v1h-1zM26 7h1v1h-1zM26 8h1v1h-1zM24 9h5v1h-5zM30 2h4v1h-4zM30 3h1v1h-1zM30 4h1v1h-1zM30 5h4v1h-4zM34 6h1v1h-1zM34 7h1v1h-1zM34 8h1v1h-1zM30 9h4v1h-4zM37 8h1v1h-1zM37 9h1v1h-1zM43 2h3v1h-3zM42 3h1v1h-1zM46 3h1v1h-1zM42 4h1v1h-1zM46 4h1v1h-1zM43 5h3v1h-3zM42 6h1v1h-1zM46 6h1v1h-1zM42 7h1v1h-1zM46 7h1v1h-1zM42 8h1v1h-1zM46 8h1v1h-1zM43 9h3v1h-3zM49 2h3v1h-3zM48 3h1v1h-1zM52 3h1v1h-1zM48 4h1v1h-1zM52 4h1v1h-1zM48 5h1v1h-1zM52 5h1v1h-1zM48 6h1v1h-1zM52 6h1v1h-1zM48 7h1v1h-1zM52 7h1v1h-1zM48 8h1v1h-1zM52 8h1v1h-1zM49 9h3v1h-3zM54 2h1v1h-1zM54 3h1v1h-1zM54 4h1v1h-1zM57 4h1v1h-1zM54 5h1v1h-1zM56 5h1v1h-1zM54 6h2v1h-2zM54 7h1v1h-1zM56 7h1v1h-1zM54 8h1v1h-1zM57 8h1v1h-1zM54 9h1v1h-1zM58 9h1v1h-1zM60 2h1v1h-1zM64 2h1v1h-1zM60 3h1v1h-1zM64 3h1v1h-1zM60 4h1v1h-1zM64 4h1v1h-1zM61 5h1v1h-1zM63 5h1v1h-1zM61 6h1v1h-1zM63 6h1v1h-1zM61 7h1v1h-1zM63 7h1v1h-1zM62 8h1v1h-1zM62 9h1v1h-1zM66 0h1v1h-1zM67 1h1v1h-1zM67 2h1v1h-1zM68 3h1v1h-1zM68 4h1v1h-1zM68 5h1v1h-1zM68 6h1v1h-1zM68 7h1v1h-1zM67 8h1v1h-1zM67 9h1v1h-1zM66 10h1v1h-1z" fill="#000"/></svg>
<div style="left:141px;top:238px;width:58px;height:22px;border:1px solid;border-color:#808080 #FFFFFF #FFFFFF #808080"><div style="left:0;top:0;width:56px;height:20px;background:#C0C0C0;border:1px solid;border-color:#404040 #FFFFFF #FFFFFF #404040"></div></div>
<div class="v" style="left:141px;top:238px;width:60px;height:24px">15.76</div>
<div style="left:206px;top:238px;width:58px;height:22px;border:1px solid;border-color:#808080 #FFFFFF #FFFFFF #808080"><div style="left:0;top:0;width:56px;height:20px;background:#C0C0C0;border:1px solid;border-color:#404040 #FFFFFF #FFFFFF #404040"></div></div>
<div class="v" style="left:206px;top:238px;width:60px;height:24px">8.02</div>
<div style="left:271px;top:238px;width:58px;height:22px;border:1px solid;border-color:#808080 #FFFFFF #FFFFFF #808080"><div style="left:0;top:0;width:56px;height:20px;background:#C0C0C0;border:1px solid;border-color:#404040 #FFFFFF #FFFFFF #404040"></div></div>
<div class="v" style="left:271px;top:238px;width:60px;height:24px">14.06</div>
<div style="left:11px;top:271px;width:323px;height:30px;border:1px solid;border-color:#F4F4F4 #404040 #404040 #F4F4F4"><div style="left:0;top:0;width:321px;height:28px;background:#C0C0C0;border:1px solid;border-color:#FFFFFF #808080 #808080 #FFFFFF"></div></div>
<div style="left:15px;top:273px;width:12px;height:11px;background:#808080;border:1px solid;border-color:#000 #D8D8D8 #D8D8D8 #000"></div>
<svg style="left:15px;top:273px" width="14" height="13" viewBox="0 0 14 13"><path d="M3.500 6l2.500 3.500L10.500 3.500" fill="none" stroke="#00FF00" stroke-width="2"/></svg>
<div style="left:15px;top:289px;width:14px;height:12px;background:#0000FF;"></div>
<svg class="t" style="left:35px;top:272px;" width="86" height="15" viewBox="0 -1 86 15" role="img" aria-label="发电机转子电压"><title>发电机转子电压</title><path d="M2 0h1v1h-1zM5 0h1v1h-1zM8 0h1v1h-1zM2 1h1v1h-1zM5 1h1v1h-1zM9 1h1v1h-1zM1 2h1v1h-1zM5 2h1v1h-1zM1 3h10v1h-10zM4 4h1v1h-1zM4 5h5v1h-5zM4 6h1v1h-1zM8 6h1v1h-1zM3 7h1v1h-1zM5 7h1v1h-1zM7 7h1v1h-1zM2 8h1v1h-1zM6 8h1v1h-1zM1 9h1v1h-1zM5 9h1v1h-1zM7 9h2v1h-2zM0 10h1v1h-1zM3 10h2v1h-2zM9 10h2v1h-2zM17 0h1v1h-1zM17 1h1v1h-1zM13 2h9v1h-9zM13 3h1v1h-1zM17 3h1v1h-1zM21 3h1v1h-1zM13 4h9v1h-9zM13 5h1v1h-1zM17 5h1v1h-1zM21 5h1v1h-1zM13 6h1v1h-1zM17 6h1v1h-1zM21 6h1v1h-1zM13 7h9v1h-9zM17 8h1v1h-1zM22 8h1v1h-1zM17 9h1v1h-1zM22 9h1v1h-1zM18 10h5v1h-5zM26 0h1v1h-1zM26 1h1v1h-1zM29 1h4v1h-4zM26 2h1v1h-1zM29 2h1v1h-1zM32 2h1v1h-1zM24 3h6v1h-6zM32 3h1v1h-1zM26 4h1v1h-1zM29 4h1v1h-1zM32 4h1v1h-1zM25 5h3v1h-3zM29 5h1v1h-1zM32 5h1v1h-1zM25 6h2v1h-2zM28 6h2v1h-2zM32 6h1v1h-1zM24 7h1v1h-1zM26 7h1v1h-1zM29 7h1v1h-1zM32 7h1v1h-1zM24 8h1v1h-1zM26 8h1v1h-1zM29 8h1v1h-1zM32 8h1v1h-1zM26 9h1v1h-1zM28 9h1v1h-1zM32 9h1v1h-1zM34 9h1v1h-1zM26 10h2v1h-2zM32 10h3v1h-3zM38 0h1v1h-1zM43 0h1v1h-1zM36 1h4v1h-4zM41 1h5v1h-5zM37 2h1v1h-1zM43 2h1v1h-1zM37 3h2v1h-2zM40 3h7v1h-7zM36 4h1v1h-1zM38 4h1v1h-1zM42 4h1v1h-1zM36 5h4v1h-4zM41 5h5v1h-5zM38 6h1v1h-1zM45 6h1v1h-1zM38 7h3v1h-3zM42 7h1v1h-1zM44 7h1v1h-1zM36 8h3v1h-3zM43 8h1v1h-1zM38 9h1v1h-1zM44 9h1v1h-1zM38 10h1v1h-1zM44 10h1v1h-1zM50 0h7v1h-7zM55 1h1v1h-1zM54 2h1v1h-1zM53 3h1v1h-1zM53 4h1v1h-1zM48 5h11v1h-11zM53 6h1v1h-1zM53 7h1v1h-1zM53 8h1v1h-1zM51 9h1v1h-1zM53 9h1v1h-1zM52 10h1v1h-1zM65 0h1v1h-1zM65 1h1v1h-1zM61 2h9v1h-9zM61 3h1v1h-1zM65 3h1v1h-1zM69 3h1v1h-1zM61 4h9v1h-9zM61 5h1v1h-1zM65 5h1v1h-1zM69 5h1v1h-1zM61 6h1v1h-1zM65 6h1v1h-1zM69 6h1v1h-1zM61 7h9v1h-9zM65 8h1v1h-1zM70 8h1v1h-1zM65 9h1v1h-1zM70 9h1v1h-1zM66 10h5v1h-5zM74 0h9v1h-9zM74 1h1v1h-1zM74 2h1v1h-1zM78 2h1v1h-1zM74 3h1v1h-1zM78 3h1v1h-1zM74 4h1v1h-1zM78 4h1v1h-1zM74 5h8v1h-8zM74 6h1v1h-1zM78 6h1v1h-1zM74 7h1v1h-1zM78 7h1v1h-1zM80 7h1v1h-1zM73 8h1v1h-1zM78 8h1v1h-1zM81 8h1v1h-1zM73 9h1v1h-1zM78 9h1v1h-1zM72 10h1v1h-1zM74 10h9v1h-9z" fill="#000"/></svg>
<svg class="t" style="left:89px;top:289px;" width="50" height="15" viewBox="0 -1 50 15" role="img" aria-label="Uf(450V)"><title>Uf(450V)</title><path d="M0 2h1v1h-1zM4 2h1v1h-1zM0 3h1v1h-1zM4 3h1v1h-1zM0 4h1v1h-1zM4 4h1v1h-1zM0 5h1v1h-1zM4 5h1v1h-1zM0 6h1v1h-1zM4 6h1v1h-1zM0 7h1v1h-1zM4 7h1v1h-1zM0 8h1v1h-1zM4 8h1v1h-1zM1 9h3v1h-3zM8 2h2v1h-2zM7 3h1v1h-1zM7 4h3v1h-3zM7 5h1v1h-1zM7 6h1v1h-1zM7 7h1v1h-1zM7 8h1v1h-1zM7 9h1v1h-1zM17 0h1v1h-1zM16 1h1v1h-1zM16 2h1v1h-1zM15 3h1v1h-1zM15 4h1v1h-1zM15 5h1v1h-1zM15 6h1v1h-1zM15 7h1v1h-1zM16 8h1v1h-1zM16 9h1v1h-1zM17 10h1v1h-1zM21 2h1v1h-1zM20 3h2v1h-2zM19 4h1v1h-1zM21 4h1v1h-1zM19 5h1v1h-1zM21 5h1v1h-1zM18 6h1v1h-1zM21 6h1v1h-1zM18 7h5v1h-5zM21 8h1v1h-1zM21 9h1v1h-1zM24 2h4v1h-4zM24 3h1v1h-1zM24 4h1v1h-1zM24 5h4v1h-4zM28 6h1v1h-1zM28 7h1v1h-1zM28 8h1v1h-1zM24 9h4v1h-4zM31 2h3v1h-3zM30 3h1v1h-1zM34 3h1v1h-1zM30 4h1v1h-1zM34 4h1v1h-1zM30 5h1v1h-1zM34 5h1v1h-1zM30 6h1v1h-1zM34 6h1v1h-1zM30 7h1v1h-1zM34 7h1v1h-1zM30 8h1v1h-1zM34 8h1v1h-1zM31 9h3v1h-3zM36 2h1v1h-1zM40 2h1v1h-1zM36 3h1v1h-1zM40 3h1v1h-1zM36 4h1v1h-1zM40 4h1v1h-1zM37 5h1v1h-1zM39 5h1v1h-1zM37 6h1v1h-1zM39 6h1v1h-1zM37 7h1v1h-1zM39 7h1v1h-1zM38 8h1v1h-1zM38 9h1v1h-1zM42 0h1v1h-1zM43 1h1v1h-1zM43 2h1v1h-1zM44 3h1v1h-1zM44 4h1v1h-1zM44 5h1v1h-1zM44 6h1v1h-1zM44 7h1v1h-1zM43 8h1v1h-1zM43 9h1v1h-1zM42 10h1v1h-1z" fill="#000"/></svg>
<div style="left:141px;top:275px;width:58px;height:22px;border:1px solid;border-color:#808080 #FFFFFF #FFFFFF #808080"><div style="left:0;top:0;width:56px;height:20px;background:#C0C0C0;border:1px solid;border-color:#404040 #FFFFFF #FFFFFF #404040"></div></div>
<div class="v" style="left:141px;top:275px;width:60px;height:24px">128</div>
<div style="left:206px;top:275px;width:58px;height:22px;border:1px solid;border-color:#808080 #FFFFFF #FFFFFF #808080"><div style="left:0;top:0;width:56px;height:20px;background:#C0C0C0;border:1px solid;border-color:#404040 #FFFFFF #FFFFFF #404040"></div></div>
<div class="v" style="left:206px;top:275px;width:60px;height:24px">-1199</div>
<div style="left:271px;top:275px;width:58px;height:22px;border:1px solid;border-color:#808080 #FFFFFF #FFFFFF #808080"><div style="left:0;top:0;width:56px;height:20px;background:#C0C0C0;border:1px solid;border-color:#404040 #FFFFFF #FFFFFF #404040"></div></div>
<div class="v" style="left:271px;top:275px;width:60px;height:24px">-746</div>
<div style="left:11px;top:308px;width:323px;height:30px;border:1px solid;border-color:#F4F4F4 #404040 #404040 #F4F4F4"><div style="left:0;top:0;width:321px;height:28px;background:#C0C0C0;border:1px solid;border-color:#FFFFFF #808080 #808080 #FFFFFF"></div></div>
<div style="left:15px;top:310px;width:12px;height:11px;background:#808080;border:1px solid;border-color:#000 #D8D8D8 #D8D8D8 #000"></div>
<svg style="left:15px;top:310px" width="14" height="13" viewBox="0 0 14 13"><path d="M3.500 6l2.500 3.500L10.500 3.500" fill="none" stroke="#00FF00" stroke-width="2"/></svg>
<div style="left:15px;top:326px;width:14px;height:12px;background:#800000;"></div>
<svg class="t" style="left:35px;top:309px;" width="86" height="15" viewBox="0 -1 86 15" role="img" aria-label="发电机转子电流"><title>发电机转子电流</title><path d="M2 0h1v1h-1zM5 0h1v1h-1zM8 0h1v1h-1zM2 1h1v1h-1zM5 1h1v1h-1zM9 1h1v1h-1zM1 2h1v1h-1zM5 2h1v1h-1zM1 3h10v1h-10zM4 4h1v1h-1zM4 5h5v1h-5zM4 6h1v1h-1zM8 6h1v1h-1zM3 7h1v1h-1zM5 7h1v1h-1zM7 7h1v1h-1zM2 8h1v1h-1zM6 8h1v1h-1zM1 9h1v1h-1zM5 9h1v1h-1zM7 9h2v1h-2zM0 10h1v1h-1zM3 10h2v1h-2zM9 10h2v1h-2zM17 0h1v1h-1zM17 1h1v1h-1zM13 2h9v1h-9zM13 3h1v1h-1zM17 3h1v1h-1zM21 3h1v1h-1zM13 4h9v1h-9zM13 5h1v1h-1zM17 5h1v1h-1zM21 5h1v1h-1zM13 6h1v1h-1zM17 6h1v1h-1zM21 6h1v1h-1zM13 7h9v1h-9zM17 8h1v1h-1zM22 8h1v1h-1zM17 9h1v1h-1zM22 9h1v1h-1zM18 10h5v1h-5zM26 0h1v1h-1zM26 1h1v1h-1zM29 1h4v1h-4zM26 2h1v1h-1zM29 2h1v1h-1zM32 2h1v1h-1zM24 3h6v1h-6zM32 3h1v1h-1zM26 4h1v1h-1zM29 4h1v1h-1zM32 4h1v1h-1zM25 5h3v1h-3zM29 5h1v1h-1zM32 5h1v1h-1zM25 6h2v1h-2zM28 6h2v1h-2zM32 6h1v1h-1zM24 7h1v1h-1zM26 7h1v1h-1zM29 7h1v1h-1zM32 7h1v1h-1zM24 8h1v1h-1zM26 8h1v1h-1zM29 8h1v1h-1zM32 8h1v1h-1zM26 9h1v1h-1zM28 9h1v1h-1zM32 9h1v1h-1zM34 9h1v1h-1zM26 10h2v1h-2zM32 10h3v1h-3zM38 0h1v1h-1zM43 0h1v1h-1zM36 1h4v1h-4zM41 1h5v1h-5zM37 2h1v1h-1zM43 2h1v1h-1zM37 3h2v1h-2zM40 3h7v1h-7zM36 4h1v1h-1zM38 4h1v1h-1zM42 4h1v1h-1zM36 5h4v1h-4zM41 5h5v1h-5zM38 6h1v1h-1zM45 6h1v1h-1zM38 7h3v1h-3zM42 7h1v1h-1zM44 7h1v1h-1zM36 8h3v1h-3zM43 8h1v1h-1zM38 9h1v1h-1zM44 9h1v1h-1zM38 10h1v1h-1zM44 10h1v1h-1zM50 0h7v1h-7zM55 1h1v1h-1zM54 2h1v1h-1zM53 3h1v1h-1zM53 4h1v1h-1zM48 5h11v1h-11zM53 6h1v1h-1zM53 7h1v1h-1zM53 8h1v1h-1zM51 9h1v1h-1zM53 9h1v1h-1zM52 10h1v1h-1zM65 0h1v1h-1zM65 1h1v1h-1zM61 2h9v1h-9zM61 3h1v1h-1zM65 3h1v1h-1zM69 3h1v1h-1zM61 4h9v1h-9zM61 5h1v1h-1zM65 5h1v1h-1zM69 5h1v1h-1zM61 6h1v1h-1zM65 6h1v1h-1zM69 6h1v1h-1zM61 7h9v1h-9zM65 8h1v1h-1zM70 8h1v1h-1zM65 9h1v1h-1zM70 9h1v1h-1zM66 10h5v1h-5zM72 0h1v1h-1zM78 0h1v1h-1zM73 1h1v1h-1zM75 1h8v1h-8zM77 2h1v1h-1zM72 3h1v1h-1zM76 3h1v1h-1zM80 3h1v1h-1zM73 4h1v1h-1zM75 4h7v1h-7zM74 5h1v1h-1zM81 5h1v1h-1zM74 6h1v1h-1zM76 6h1v1h-1zM78 6h1v1h-1zM80 6h1v1h-1zM72 7h2v1h-2zM76 7h1v1h-1zM78 7h1v1h-1zM80 7h1v1h-1zM73 8h1v1h-1zM76 8h1v1h-1zM78 8h1v1h-1zM80 8h1v1h-1zM82 8h1v1h-1zM73 9h1v1h-1zM76 9h1v1h-1zM78 9h1v1h-1zM80 9h1v1h-1zM82 9h1v1h-1zM73 10h1v1h-1zM75 10h1v1h-1zM78 10h1v1h-1zM81 10h2v1h-2z" fill="#000"/></svg>
<svg class="t" style="left:71px;top:326px;" width="68" height="15" viewBox="0 -1 68 15" role="img" aria-label="If(1765.0A)"><title>If(1765.0A)</title><path d="M1 2h3v1h-3zM2 3h1v1h-1zM2 4h1v1h-1zM2 5h1v1h-1zM2 6h1v1h-1zM2 7h1v1h-1zM2 8h1v1h-1zM1 9h3v1h-3zM8 2h2v1h-2zM7 3h1v1h-1zM7 4h3v1h-3zM7 5h1v1h-1zM7 6h1v1h-1zM7 7h1v1h-1zM7 8h1v1h-1zM7 9h1v1h-1zM17 0h1v1h-1zM16 1h1v1h-1zM16 2h1v1h-1zM15 3h1v1h-1zM15 4h1v1h-1zM15 5h1v1h-1zM15 6h1v1h-1zM15 7h1v1h-1zM16 8h1v1h-1zM16 9h1v1h-1zM17 10h1v1h-1zM18 2h3v1h-3zM20 3h1v1h-1zM20 4h1v1h-1zM20 5h1v1h-1zM20 6h1v1h-1zM20 7h1v1h-1zM20 8h1v1h-1zM18 9h5v1h-5zM24 2h5v1h-5zM28 3h1v1h-1zM28 4h1v1h-1zM27 5h1v1h-1zM27 6h1v1h-1zM26 7h1v1h-1zM26 8h1v1h-1zM26 9h1v1h-1zM31 2h3v1h-3zM30 3h1v1h-1zM30 4h1v1h-1zM30 5h4v1h-4zM30 6h1v1h-1zM34 6h1v1h-1zM30 7h1v1h-1zM34 7h1v1h-1zM30 8h1v1h-1zM34 8h1v1h-1zM31 9h3v1h-3zM36 2h4v1h-4zM36 3h1v1h-1zM36 4h1v1h-1zM36 5h4v1h-4zM40 6h1v1h-1zM40 7h1v1h-1zM40 8h1v1h-1zM36 9h4v1h-4zM43 8h1v1h-1zM43 9h1v1h-1zM49 2h3v1h-3zM48 3h1v1h-1zM52 3h1v1h-1zM48 4h1v1h-1zM52 4h1v1h-1zM48 5h1v1h-1zM52 5h1v1h-1zM48 6h1v1h-1zM52 6h1v1h-1zM48 7h1v1h-1zM52 7h1v1h-1zM48 8h1v1h-1zM52 8h1v1h-1zM49 9h3v1h-3zM56 2h1v1h-1zM56 3h1v1h-1zM55 4h1v1h-1zM57 4h1v1h-1zM55 5h1v1h-1zM57 5h1v1h-1zM55 6h1v1h-1zM57 6h1v1h-1zM54 7h5v1h-5zM54 8h1v1h-1zM58 8h1v1h-1zM54 9h1v1h-1zM58 9h1v1h-1zM60 0h1v1h-1zM61 1h1v1h-1zM61 2h1v1h-1zM62 3h1v1h-1zM62 4h1v1h-1zM62 5h1v1h-1zM62 6h1v1h-1zM62 7h1v1h-1zM61 8h1v1h-1zM61 9h1v1h-1zM60 10h1v1h-1z" fill="#000"/></svg>
<div style="left:141px;top:312px;width:58px;height:22px;border:1px solid;border-color:#808080 #FFFFFF #FFFFFF #808080"><div style="left:0;top:0;width:56px;height:20px;background:#C0C0C0;border:1px solid;border-color:#404040 #FFFFFF #FFFFFF #404040"></div></div>
<div class="v" style="left:141px;top:312px;width:60px;height:24px">646.5</div>
<div style="left:206px;top:312px;width:58px;height:22px;border:1px solid;border-color:#808080 #FFFFFF #FFFFFF #808080"><div style="left:0;top:0;width:56px;height:20px;background:#C0C0C0;border:1px solid;border-color:#404040 #FFFFFF #FFFFFF #404040"></div></div>
<div class="v" style="left:206px;top:312px;width:60px;height:24px">2.4</div>
<div style="left:271px;top:312px;width:58px;height:22px;border:1px solid;border-color:#808080 #FFFFFF #FFFFFF #808080"><div style="left:0;top:0;width:56px;height:20px;background:#C0C0C0;border:1px solid;border-color:#404040 #FFFFFF #FFFFFF #404040"></div></div>
<div class="v" style="left:271px;top:312px;width:60px;height:24px">2.5</div>
<div style="left:11px;top:345px;width:323px;height:30px;border:1px solid;border-color:#F4F4F4 #404040 #404040 #F4F4F4"><div style="left:0;top:0;width:321px;height:28px;background:#C0C0C0;border:1px solid;border-color:#FFFFFF #808080 #808080 #FFFFFF"></div></div>
<div style="left:15px;top:347px;width:12px;height:11px;background:#808080;border:1px solid;border-color:#000 #D8D8D8 #D8D8D8 #000"></div>
<svg style="left:15px;top:347px" width="14" height="13" viewBox="0 0 14 13"><path d="M3.500 6l2.500 3.500L10.500 3.500" fill="none" stroke="#00FF00" stroke-width="2"/></svg>
<div style="left:15px;top:363px;width:14px;height:12px;background:#FF0000;"></div>
<svg class="t" style="left:35px;top:346px;" width="38" height="15" viewBox="0 -1 38 15" role="img" aria-label="主开关"><title>主开关</title><path d="M4 0h1v1h-1zM5 1h1v1h-1zM0 2h11v1h-11zM5 3h1v1h-1zM5 4h1v1h-1zM5 5h1v1h-1zM1 6h9v1h-9zM5 7h1v1h-1zM5 8h1v1h-1zM5 9h1v1h-1zM0 10h11v1h-11zM13 0h9v1h-9zM15 1h1v1h-1zM19 1h1v1h-1zM15 2h1v1h-1zM19 2h1v1h-1zM15 3h1v1h-1zM19 3h1v1h-1zM15 4h1v1h-1zM19 4h1v1h-1zM12 5h11v1h-11zM15 6h1v1h-1zM19 6h1v1h-1zM14 7h1v1h-1zM19 7h1v1h-1zM14 8h1v1h-1zM19 8h1v1h-1zM13 9h1v1h-1zM19 9h1v1h-1zM12 10h1v1h-1zM19 10h1v1h-1zM26 0h1v1h-1zM32 0h1v1h-1zM27 1h1v1h-1zM31 1h1v1h-1zM25 2h9v1h-9zM29 3h1v1h-1zM29 4h1v1h-1zM24 5h10v1h-10zM29 6h1v1h-1zM28 7h1v1h-1zM30 7h1v1h-1zM27 8h1v1h-1zM31 8h1v1h-1zM26 9h1v1h-1zM32 9h1v1h-1zM24 10h2v1h-2zM33 10h2v1h-2z" fill="#000"/></svg>
<svg class="t" style="left:35px;top:362px;" width="14" height="15" viewBox="0 -1 14 15" role="img" aria-label="MK"><title>MK</title><path d="M0 2h1v1h-1zM4 2h1v1h-1zM0 3h2v1h-2zM3 3h2v1h-2zM0 4h2v1h-2zM3 4h2v1h-2zM0 5h1v1h-1zM2 5h1v1h-1zM4 5h1v1h-1zM0 6h1v1h-1zM2 6h1v1h-1zM4 6h1v1h-1zM0 7h1v1h-1zM4 7h1v1h-1zM0 8h1v1h-1zM4 8h1v1h-1zM0 9h1v1h-1zM4 9h1v1h-1zM6 2h1v1h-1zM10 2h1v1h-1zM6 3h1v1h-1zM9 3h1v1h-1zM6 4h1v1h-1zM8 4h1v1h-1zM6 5h2v1h-2zM6 6h2v1h-2zM6 7h1v1h-1zM8 7h1v1h-1zM6 8h1v1h-1zM9 8h1v1h-1zM6 9h1v1h-1zM10 9h1v1h-1z" fill="#000"/></svg>
<div style="left:271px;top:349px;width:58px;height:22px;border:1px solid;border-color:#808080 #FFFFFF #FFFFFF #808080"><div style="left:0;top:0;width:56px;height:20px;background:#C0C0C0;border:1px solid;border-color:#404040 #FFFFFF #FFFFFF #404040"></div></div>
<div class="v" style="left:271px;top:349px;width:60px;height:24px;color:#00C000;transform:none;-webkit-text-stroke:0">OFF</div>
<div style="left:4px;top:462px;width:349px;height:207px;border:1px solid;border-color:#808080 #FFFFFF #FFFFFF #808080"><div style="left:0;top:0;width:347px;height:205px;background:#fff;border:1px solid;border-color:#000 #D4D0C8 #D4D0C8 #000"></div></div>
<svg class="t" style="left:10px;top:471px;" width="74" height="15" viewBox="0 -1 74 15" role="img" aria-label="灭磁时间常数"><title>灭磁时间常数</title><path d="M0 1h11v1h-11zM5 2h1v1h-1zM2 3h1v1h-1zM5 3h1v1h-1zM9 3h1v1h-1zM2 4h1v1h-1zM5 4h1v1h-1zM9 4h1v1h-1zM2 5h1v1h-1zM5 5h1v1h-1zM8 5h1v1h-1zM1 6h1v1h-1zM4 6h1v1h-1zM6 6h1v1h-1zM4 7h1v1h-1zM6 7h1v1h-1zM3 8h1v1h-1zM7 8h1v1h-1zM2 9h1v1h-1zM8 9h3v1h-3zM0 10h2v1h-2zM9 10h1v1h-1zM17 0h1v1h-1zM21 0h1v1h-1zM12 1h4v1h-4zM18 1h1v1h-1zM20 1h1v1h-1zM14 2h1v1h-1zM16 2h7v1h-7zM14 3h1v1h-1zM17 3h1v1h-1zM20 3h1v1h-1zM13 4h3v1h-3zM17 4h1v1h-1zM20 4h1v1h-1zM22 4h1v1h-1zM12 5h2v1h-2zM15 5h2v1h-2zM18 5h2v1h-2zM22 5h1v1h-1zM13 6h1v1h-1zM15 6h7v1h-7zM13 7h1v1h-1zM15 7h1v1h-1zM18 7h1v1h-1zM21 7h1v1h-1zM13 8h3v1h-3zM17 8h1v1h-1zM20 8h1v1h-1zM13 9h1v1h-1zM15 9h2v1h-2zM18 9h2v1h-2zM21 9h1v1h-1zM15 10h3v1h-3zM19 10h2v1h-2zM22 10h1v1h-1zM32 0h1v1h-1zM24 1h4v1h-4zM32 1h1v1h-1zM24 2h1v1h-1zM27 2h8v1h-8zM24 3h1v1h-1zM27 3h1v1h-1zM32 3h1v1h-1zM24 4h1v1h-1zM27 4h1v1h-1zM29 4h1v1h-1zM32 4h1v1h-1zM24 5h4v1h-4zM30 5h1v1h-1zM32 5h1v1h-1zM24 6h1v1h-1zM27 6h1v1h-1zM30 6h1v1h-1zM32 6h1v1h-1zM24 7h1v1h-1zM27 7h1v1h-1zM32 7h1v1h-1zM24 8h1v1h-1zM27 8h1v1h-1zM32 8h1v1h-1zM24 9h4v1h-4zM32 9h1v1h-1zM30 10h3v1h-3zM38 0h1v1h-1zM41 0h6v1h-6zM39 1h1v1h-1zM46 1h1v1h-1zM37 2h1v1h-1zM46 2h1v1h-1zM37 3h1v1h-1zM40 3h4v1h-4zM46 3h1v1h-1zM37 4h1v1h-1zM40 4h1v1h-1zM43 4h1v1h-1zM46 4h1v1h-1zM37 5h1v1h-1zM40 5h4v1h-4zM46 5h1v1h-1zM37 6h1v1h-1zM40 6h1v1h-1zM43 6h1v1h-1zM46 6h1v1h-1zM37 7h1v1h-1zM40 7h1v1h-1zM43 7h1v1h-1zM46 7h1v1h-1zM37 8h1v1h-1zM40 8h4v1h-4zM46 8h1v1h-1zM37 9h1v1h-1zM46 9h1v1h-1zM37 10h1v1h-1zM44 10h3v1h-3zM50 0h1v1h-1zM53 0h1v1h-1zM56 0h1v1h-1zM49 1h10v1h-10zM49 2h1v1h-1zM58 2h1v1h-1zM48 3h1v1h-1zM51 3h6v1h-6zM58 3h1v1h-1zM51 4h1v1h-1zM56 4h1v1h-1zM51 5h6v1h-6zM53 6h1v1h-1zM50 7h8v1h-8zM50 8h1v1h-1zM53 8h1v1h-1zM57 8h1v1h-1zM50 9h1v1h-1zM53 9h1v1h-1zM56 9h2v1h-2zM53 10h1v1h-1zM60 0h1v1h-1zM63 0h1v1h-1zM65 0h1v1h-1zM67 0h1v1h-1zM61 1h1v1h-1zM63 1h2v1h-2zM67 1h1v1h-1zM60 2h6v1h-6zM67 2h4v1h-4zM62 3h2v1h-2zM66 3h2v1h-2zM69 3h1v1h-1zM61 4h1v1h-1zM63 4h2v1h-2zM67 4h1v1h-1zM69 4h1v1h-1zM60 5h1v1h-1zM63 5h1v1h-1zM65 5h1v1h-1zM67 5h1v1h-1zM69 5h1v1h-1zM60 6h6v1h-6zM67 6h1v1h-1zM69 6h1v1h-1zM62 7h1v1h-1zM64 7h1v1h-1zM67 7h1v1h-1zM69 7h1v1h-1zM61 8h2v1h-2zM64 8h1v1h-1zM68 8h1v1h-1zM63 9h1v1h-1zM67 9h1v1h-1zM69 9h1v1h-1zM60 10h3v1h-3zM64 10h3v1h-3zM70 10h1v1h-1z" fill="#000"/></svg>
<svg class="t" style="left:22px;top:491px;" width="140" height="15" viewBox="0 -1 140 15" role="img" aria-label="定子电压(Uab): 1.20 sec"><title>定子电压(Uab): 1.20 sec</title><path d="M5 0h1v1h-1zM1 1h10v1h-10zM1 2h1v1h-1zM10 2h1v1h-1zM0 3h1v1h-1zM9 3h1v1h-1zM2 4h8v1h-8zM5 5h1v1h-1zM2 6h1v1h-1zM5 6h1v1h-1zM2 7h1v1h-1zM5 7h4v1h-4zM2 8h1v1h-1zM5 8h1v1h-1zM1 9h1v1h-1zM3 9h1v1h-1zM5 9h1v1h-1zM0 10h1v1h-1zM4 10h7v1h-7zM14 0h7v1h-7zM19 1h1v1h-1zM18 2h1v1h-1zM17 3h1v1h-1zM17 4h1v1h-1zM12 5h11v1h-11zM17 6h1v1h-1zM17 7h1v1h-1zM17 8h1v1h-1zM15 9h1v1h-1zM17 9h1v1h-1zM16 10h1v1h-1zM29 0h1v1h-1zM29 1h1v1h-1zM25 2h9v1h-9zM25 3h1v1h-1zM29 3h1v1h-1zM33 3h1v1h-1zM25 4h9v1h-9zM25 5h1v1h-1zM29 5h1v1h-1zM33 5h1v1h-1zM25 6h1v1h-1zM29 6h1v1h-1zM33 6h1v1h-1zM25 7h9v1h-9zM29 8h1v1h-1zM34 8h1v1h-1zM29 9h1v1h-1zM34 9h1v1h-1zM30 10h5v1h-5zM38 0h9v1h-9zM38 1h1v1h-1zM38 2h1v1h-1zM42 2h1v1h-1zM38 3h1v1h-1zM42 3h1v1h-1zM38 4h1v1h-1zM42 4h1v1h-1zM38 5h8v1h-8zM38 6h1v1h-1zM42 6h1v1h-1zM38 7h1v1h-1zM42 7h1v1h-1zM44 7h1v1h-1zM37 8h1v1h-1zM42 8h1v1h-1zM45 8h1v1h-1zM37 9h1v1h-1zM42 9h1v1h-1zM36 10h1v1h-1zM38 10h9v1h-9zM53 0h1v1h-1zM52 1h1v1h-1zM52 2h1v1h-1zM51 3h1v1h-1zM51 4h1v1h-1zM51 5h1v1h-1zM51 6h1v1h-1zM51 7h1v1h-1zM52 8h1v1h-1zM52 9h1v1h-1zM53 10h1v1h-1zM54 2h1v1h-1zM58 2h1v1h-1zM54 3h1v1h-1zM58 3h1v1h-1zM54 4h1v1h-1zM58 4h1v1h-1zM54 5h1v1h-1zM58 5h1v1h-1zM54 6h1v1h-1zM58 6h1v1h-1zM54 7h1v1h-1zM58 7h1v1h-1zM54 8h1v1h-1zM58 8h1v1h-1zM55 9h3v1h-3zM61 4h3v1h-3zM60 5h1v1h-1zM64 5h1v1h-1zM61 6h4v1h-4zM60 7h1v1h-1zM64 7h1v1h-1zM60 8h1v1h-1zM64 8h1v1h-1zM61 9h4v1h-4zM66 2h1v1h-1zM66 3h1v1h-1zM66 4h4v1h-4zM66 5h1v1h-1zM70 5h1v1h-1zM66 6h1v1h-1zM70 6h1v1h-1zM66 7h1v1h-1zM70 7h1v1h-1zM66 8h1v1h-1zM70 8h1v1h-1zM66 9h4v1h-4zM72 0h1v1h-1zM73 1h1v1h-1zM73 2h1v1h-1zM74 3h1v1h-1zM74 4h1v1h-1zM74 5h1v1h-1zM74 6h1v1h-1zM74 7h1v1h-1zM73 8h1v1h-1zM73 9h1v1h-1zM72 10h1v1h-1zM80 4h1v1h-1zM80 5h1v1h-1zM80 8h1v1h-1zM80 9h1v1h-1zM90 2h3v1h-3zM92 3h1v1h-1zM92 4h1v1h-1zM92 5h1v1h-1zM92 6h1v1h-1zM92 7h1v1h-1zM92 8h1v1h-1zM90 9h5v1h-5zM97 8h1v1h-1zM97 9h1v1h-1zM103 2h3v1h-3zM102 3h1v1h-1zM106 3h1v1h-1zM106 4h1v1h-1zM106 5h1v1h-1zM105 6h1v1h-1zM104 7h1v1h-1zM103 8h1v1h-1zM102 9h5v1h-5zM109 2h3v1h-3zM108 3h1v1h-1zM112 3h1v1h-1zM108 4h1v1h-1zM112 4h1v1h-1zM108 5h1v1h-1zM112 5h1v1h-1zM108 6h1v1h-1zM112 6h1v1h-1zM108 7h1v1h-1zM112 7h1v1h-1zM108 8h1v1h-1zM112 8h1v1h-1zM109 9h3v1h-3zM121 4h3v1h-3zM120 5h1v1h-1zM124 5h1v1h-1zM121 6h2v1h-2zM123 7h1v1h-1zM120 8h1v1h-1zM124 8h1v1h-1zM121 9h3v1h-3zM127 4h3v1h-3zM126 5h1v1h-1zM130 5h1v1h-1zM126 6h5v1h-5zM126 7h1v1h-1zM126 8h1v1h-1zM127 9h4v1h-4zM134 4h3v1h-3zM133 5h1v1h-1zM133 6h1v1h-1zM133 7h1v1h-1zM133 8h1v1h-1zM134 9h3v1h-3z" fill="#000"/></svg>
<div style="left:15px;top:683px;width:59px;height:21px;background:#000;"></div>
<div style="left:16px;top:684px;width:55px;height:17px;border:1px solid;border-color:#FFFFFF #404040 #404040 #FFFFFF"><div style="left:0;top:0;width:53px;height:15px;background:#D4D0C8;border:1px solid;border-color:#D4D0C8 #808080 #808080 #D4D0C8"></div></div>
<svg class="t" style="left:20px;top:686px;" width="50" height="15" viewBox="0 -1 50 15" role="img" aria-label="数据输出"><title>数据输出</title><path d="M0 0h1v1h-1zM3 0h1v1h-1zM5 0h1v1h-1zM7 0h1v1h-1zM1 1h1v1h-1zM3 1h2v1h-2zM7 1h1v1h-1zM0 2h6v1h-6zM7 2h4v1h-4zM2 3h2v1h-2zM6 3h2v1h-2zM9 3h1v1h-1zM1 4h1v1h-1zM3 4h2v1h-2zM7 4h1v1h-1zM9 4h1v1h-1zM0 5h1v1h-1zM3 5h1v1h-1zM5 5h1v1h-1zM7 5h1v1h-1zM9 5h1v1h-1zM0 6h6v1h-6zM7 6h1v1h-1zM9 6h1v1h-1zM2 7h1v1h-1zM4 7h1v1h-1zM7 7h1v1h-1zM9 7h1v1h-1zM1 8h2v1h-2zM4 8h1v1h-1zM8 8h1v1h-1zM3 9h1v1h-1zM7 9h1v1h-1zM9 9h1v1h-1zM0 10h3v1h-3zM4 10h3v1h-3zM10 10h1v1h-1zM14 0h1v1h-1zM17 0h6v1h-6zM14 1h1v1h-1zM17 1h1v1h-1zM22 1h1v1h-1zM12 2h6v1h-6zM22 2h1v1h-1zM14 3h1v1h-1zM17 3h6v1h-6zM14 4h1v1h-1zM16 4h2v1h-2zM20 4h1v1h-1zM14 5h2v1h-2zM17 5h6v1h-6zM13 6h2v1h-2zM17 6h1v1h-1zM20 6h1v1h-1zM12 7h1v1h-1zM14 7h1v1h-1zM17 7h6v1h-6zM14 8h1v1h-1zM16 8h3v1h-3zM22 8h1v1h-1zM12 9h1v1h-1zM14 9h1v1h-1zM16 9h1v1h-1zM18 9h1v1h-1zM22 9h1v1h-1zM13 10h1v1h-1zM15 10h1v1h-1zM18 10h5v1h-5zM25 0h1v1h-1zM31 0h1v1h-1zM25 1h1v1h-1zM30 1h1v1h-1zM32 1h1v1h-1zM24 2h4v1h-4zM29 2h1v1h-1zM33 2h1v1h-1zM25 3h1v1h-1zM28 3h1v1h-1zM30 3h3v1h-3zM34 3h1v1h-1zM24 4h1v1h-1zM26 4h1v1h-1zM24 5h7v1h-7zM34 5h1v1h-1zM26 6h1v1h-1zM28 6h1v1h-1zM30 6h1v1h-1zM32 6h1v1h-1zM34 6h1v1h-1zM26 7h5v1h-5zM32 7h1v1h-1zM34 7h1v1h-1zM24 8h3v1h-3zM28 8h1v1h-1zM30 8h1v1h-1zM32 8h1v1h-1zM34 8h1v1h-1zM26 9h1v1h-1zM28 9h3v1h-3zM32 9h1v1h-1zM34 9h1v1h-1zM26 10h1v1h-1zM28 10h1v1h-1zM30 10h1v1h-1zM33 10h2v1h-2zM41 0h1v1h-1zM37 1h1v1h-1zM41 1h1v1h-1zM45 1h1v1h-1zM37 2h1v1h-1zM41 2h1v1h-1zM45 2h1v1h-1zM37 3h1v1h-1zM41 3h1v1h-1zM45 3h1v1h-1zM37 4h9v1h-9zM41 5h1v1h-1zM36 6h1v1h-1zM41 6h1v1h-1zM46 6h1v1h-1zM36 7h1v1h-1zM41 7h1v1h-1zM46 7h1v1h-1zM36 8h1v1h-1zM41 8h1v1h-1zM46 8h1v1h-1zM36 9h1v1h-1zM41 9h1v1h-1zM46 9h1v1h-1zM36 10h11v1h-11z" fill="#000"/></svg>
<div style="left:97px;top:683px;width:57px;height:19px;border:1px solid;border-color:#FFFFFF #404040 #404040 #FFFFFF"><div style="left:0;top:0;width:55px;height:17px;background:#D4D0C8;border:1px solid;border-color:#D4D0C8 #808080 #808080 #D4D0C8"></div></div>
<svg class="t" style="left:102px;top:686px;" width="50" height="15" viewBox="0 -1 50 15" role="img" aria-label="保存模板"><title>保存模板</title><path d="M3 0h1v1h-1zM5 0h5v1h-5zM3 1h1v1h-1zM5 1h1v1h-1zM9 1h1v1h-1zM2 2h1v1h-1zM5 2h1v1h-1zM9 2h1v1h-1zM2 3h1v1h-1zM5 3h5v1h-5zM1 4h2v1h-2zM7 4h1v1h-1zM0 5h1v1h-1zM2 5h1v1h-1zM4 5h7v1h-7zM2 6h1v1h-1zM7 6h1v1h-1zM2 7h1v1h-1zM6 7h3v1h-3zM2 8h1v1h-1zM5 8h1v1h-1zM7 8h1v1h-1zM9 8h1v1h-1zM2 9h1v1h-1zM4 9h1v1h-1zM7 9h1v1h-1zM10 9h1v1h-1zM2 10h1v1h-1zM7 10h1v1h-1zM16 0h1v1h-1zM12 1h11v1h-11zM15 2h1v1h-1zM14 3h1v1h-1zM16 3h6v1h-6zM14 4h1v1h-1zM20 4h1v1h-1zM13 5h2v1h-2zM19 5h1v1h-1zM12 6h1v1h-1zM14 6h9v1h-9zM14 7h1v1h-1zM19 7h1v1h-1zM14 8h1v1h-1zM19 8h1v1h-1zM14 9h1v1h-1zM19 9h1v1h-1zM14 10h1v1h-1zM17 10h3v1h-3zM26 0h1v1h-1zM30 0h1v1h-1zM32 0h1v1h-1zM26 1h1v1h-1zM28 1h7v1h-7zM24 2h4v1h-4zM30 2h1v1h-1zM32 2h1v1h-1zM26 3h1v1h-1zM29 3h5v1h-5zM26 4h2v1h-2zM29 4h1v1h-1zM33 4h1v1h-1zM25 5h2v1h-2zM28 5h6v1h-6zM25 6h2v1h-2zM29 6h1v1h-1zM33 6h1v1h-1zM24 7h1v1h-1zM26 7h1v1h-1zM28 7h7v1h-7zM26 8h1v1h-1zM31 8h1v1h-1zM26 9h1v1h-1zM30 9h1v1h-1zM32 9h1v1h-1zM26 10h1v1h-1zM28 10h2v1h-2zM33 10h2v1h-2zM38 0h1v1h-1zM44 0h2v1h-2zM38 1h1v1h-1zM41 1h3v1h-3zM36 2h6v1h-6zM38 3h1v1h-1zM41 3h1v1h-1zM38 4h1v1h-1zM41 4h5v1h-5zM37 5h3v1h-3zM41 5h1v1h-1zM45 5h1v1h-1zM37 6h2v1h-2zM40 6h3v1h-3zM45 6h1v1h-1zM36 7h1v1h-1zM38 7h1v1h-1zM41 7h1v1h-1zM43 7h2v1h-2zM38 8h1v1h-1zM40 8h1v1h-1zM44 8h1v1h-1zM38 9h1v1h-1zM40 9h1v1h-1zM43 9h1v1h-1zM45 9h1v1h-1zM38 10h2v1h-2zM41 10h2v1h-2zM46 10h1v1h-1z" fill="#000"/></svg>
<div style="left:4px;top:712px;width:1220px;height:1px;background:#808080;"></div>
<div style="left:4px;top:713px;width:1220px;height:1px;background:#FFFFFF;"></div>
<svg class="t" style="left:6px;top:717px;" width="26" height="15" viewBox="0 -1 26 15" role="img" aria-label="就绪"><title>就绪</title><path d="M3 0h1v1h-1zM7 0h1v1h-1zM0 1h6v1h-6zM7 1h1v1h-1zM9 1h1v1h-1zM7 2h1v1h-1zM10 2h1v1h-1zM1 3h10v1h-10zM1 4h1v1h-1zM4 4h1v1h-1zM6 4h1v1h-1zM8 4h1v1h-1zM1 5h4v1h-4zM6 5h1v1h-1zM8 5h1v1h-1zM3 6h1v1h-1zM6 6h1v1h-1zM8 6h1v1h-1zM1 7h1v1h-1zM3 7h2v1h-2zM6 7h1v1h-1zM8 7h1v1h-1zM10 7h1v1h-1zM1 8h1v1h-1zM3 8h1v1h-1zM5 8h2v1h-2zM8 8h1v1h-1zM10 8h1v1h-1zM0 9h1v1h-1zM3 9h1v1h-1zM6 9h1v1h-1zM8 9h1v1h-1zM10 9h1v1h-1zM2 10h2v1h-2zM5 10h1v1h-1zM9 10h2v1h-2zM14 0h1v1h-1zM19 0h1v1h-1zM14 1h1v1h-1zM17 1h4v1h-4zM22 1h1v1h-1zM13 2h1v1h-1zM16 2h1v1h-1zM19 2h1v1h-1zM21 2h1v1h-1zM13 3h1v1h-1zM15 3h1v1h-1zM17 3h6v1h-6zM12 4h3v1h-3zM19 4h1v1h-1zM14 5h1v1h-1zM18 5h5v1h-5zM13 6h1v1h-1zM17 6h2v1h-2zM22 6h1v1h-1zM12 7h4v1h-4zM18 7h5v1h-5zM16 8h1v1h-1zM18 8h1v1h-1zM22 8h1v1h-1zM14 9h2v1h-2zM18 9h5v1h-5zM12 10h2v1h-2zM18 10h1v1h-1zM22 10h1v1h-1z" fill="#000"/></svg>
<div style="left:908px;top:716px;width:28px;height:15px;background:#D4D0C8;border:1px solid;border-color:#808080 #FFFFFF #FFFFFF #808080"></div>
<div style="left:940px;top:716px;width:28px;height:15px;background:#D4D0C8;border:1px solid;border-color:#808080 #FFFFFF #FFFFFF #808080"></div>
<div style="left:972px;top:716px;width:28px;height:15px;background:#D4D0C8;border:1px solid;border-color:#808080 #FFFFFF #FFFFFF #808080"></div>
<div style="left:1004px;top:716px;width:138px;height:15px;background:#D4D0C8;border:1px solid;border-color:#808080 #FFFFFF #FFFFFF #808080"></div>
<div style="left:1145px;top:716px;width:59px;height:15px;background:#D4D0C8;border:1px solid;border-color:#808080 #FFFFFF #FFFFFF #808080"></div>
<div style="left:1117px;top:717px;width:111px;height:21px;background:linear-gradient(180deg,#D9E8F8 0,#F4F9FE 2px,#fff 5px,#fff 15px,#EAF2FB 21px);border-left:1px solid #C5DBF0;border-top:1px solid #C5DBF0"></div>
<svg style="left:1117px;top:717px" width="111" height="21" viewBox="0 0 111 21"><g transform="rotate(-11 11 11)"><rect x="3" y="3" width="15.500" height="15.500" rx="3" fill="#E8521C"/><path d="M15.800 6.600q-5.300-2.300-7.800-.3-1.800 2.100 2 3.400 4.500 1.300 3 3.700-2.200 2.200-7.600-.1" fill="none" stroke="#fff" stroke-width="2.500"/></g><path d="M24.500 7.500h13v7h-13zM31 4v15.500" fill="none" stroke="#3F8BD8" stroke-width="2.100"/><path d="M52.500 4.700A6.600 6.600 0 1 1 44.400 13.800 6.300 6.300 0 0 0 52.500 4.700z" fill="#4A90D9"/><circle cx="69.500" cy="7.600" r="2.100" fill="none" stroke="#4A90D9" stroke-width="1.200"/><path d="M72.700 12.300a1.700 1.700 0 1 1 3.100.9q-.4 2.600-3.400 4.300 1.700-1.900 1.500-3.500a1.700 1.700 0 0 1-1.200-1.700z" fill="#4A90D9"/><rect x="83.500" y="5.500" width="16.500" height="11.500" rx=".8" fill="#3F8BD8"/><path d="M85.500 8h2M88.800 8h2M92 8h2M95.300 8h2.200M85.500 11h2M88.800 11h2M92 11h2M95.300 11h2.200M87 14.300h9.500" stroke="#fff" stroke-width="1.500" fill="none"/><circle cx="110" cy="8" r="3.300" fill="#CFCFCF"/><path d="M104.500 18.500q0-6.500 5.500-6.500t5.500 6.500z" fill="#CFCFCF"/></svg>
<div style="left:358px;top:134px;width:864px;height:536px;border:1px solid;border-color:#808080 #FFFFFF #FFFFFF #808080"><div style="left:0;top:0;width:862px;height:534px;background:#787878;border:1px solid;border-color:#000 #FFFFFF #FFFFFF #000"></div></div>
<svg style="left:0px;top:0px" width="1228" height="738" viewBox="0 0 1228 738" shape-rendering="crispEdges"><path d="M504.5 147V624" stroke="#000" stroke-dasharray="1 1" fill="none"/><path d="M578.5 147V624" stroke="#000" stroke-dasharray="1 1" fill="none"/><path d="M652.5 147V624" stroke="#000" stroke-dasharray="1 1" fill="none"/><path d="M726.5 147V624" stroke="#000" stroke-dasharray="1 1" fill="none"/><path d="M801.5 147V624" stroke="#000" stroke-dasharray="1 1" fill="none"/><path d="M875.5 147V624" stroke="#000" stroke-dasharray="1 1" fill="none"/><path d="M949.5 147V624" stroke="#000" stroke-dasharray="1 1" fill="none"/><path d="M1023.5 147V624" stroke="#000" stroke-dasharray="1 1" fill="none"/><path d="M1097.5 147V624" stroke="#000" stroke-dasharray="1 1" fill="none"/><path d="M431 169.5H1171" stroke="#000" stroke-dasharray="1 1" fill="none"/><path d="M431 193.5H1171" stroke="#000" stroke-dasharray="1 1" fill="none"/><path d="M431 217.5H1171" stroke="#000" stroke-dasharray="1 1" fill="none"/><path d="M431 241.5H1171" stroke="#000" stroke-dasharray="1 1" fill="none"/><path d="M431 265.5H1171" stroke="#000" stroke-dasharray="1 1" fill="none"/><path d="M431 289.5H1171" stroke="#000" stroke-dasharray="1 1" fill="none"/><path d="M431 313.5H1171" stroke="#000" stroke-dasharray="1 1" fill="none"/><path d="M431 337.5H1171" stroke="#000" stroke-dasharray="1 1" fill="none"/><path d="M431 361.5H1171" stroke="#000" stroke-dasharray="1 1" fill="none"/><path d="M431 385.5H1171" stroke="#000" stroke-dasharray="1 1" fill="none"/><path d="M431 409.5H1171" stroke="#000" stroke-dasharray="1 1" fill="none"/><path d="M431 433.5H1171" stroke="#000" stroke-dasharray="1 1" fill="none"/><path d="M431 457.5H1171" stroke="#000" stroke-dasharray="1 1" fill="none"/><path d="M431 480.5H1171" stroke="#000" stroke-dasharray="1 1" fill="none"/><path d="M431 504.5H1171" stroke="#000" stroke-dasharray="1 1" fill="none"/><path d="M431 528.5H1171" stroke="#000" stroke-dasharray="1 1" fill="none"/><path d="M431 552.5H1171" stroke="#000" stroke-dasharray="1 1" fill="none"/><path d="M431 576.5H1171" stroke="#000" stroke-dasharray="1 1" fill="none"/><path d="M431 600.5H1171" stroke="#000" stroke-dasharray="1 1" fill="none"/><path d="M427 146.5H1173M430.5 146V633M1172.5 146V633" stroke="#000" fill="none"/><path d="M427 146.5h3M427 169.5h3M427 193.5h3M427 217.5h3M427 241.5h3M427 265.5h3M427 289.5h3M427 313.5h3M427 337.5h3M427 361.5h3M427 385.5h3M427 409.5h3M427 433.5h3M427 457.5h3M427 480.5h3M427 504.5h3M427 528.5h3M427 552.5h3M427 576.5h3M427 600.5h3M427 624.5h3" stroke="#000" fill="none"/><path d="M430.5 625V633M444.5 625V628M459.5 625V628M474.5 625V628M488.5 625V628M504.5 625V633M518.5 625V628M533.5 625V628M548.5 625V628M563.5 625V628M578.5 625V633M592.5 625V628M607.5 625V628M622.5 625V628M637.5 625V628M652.5 625V633M666.5 625V628M681.5 625V628M696.5 625V628M711.5 625V628M726.5 625V633M741.5 625V628M756.5 625V628M770.5 625V628M785.5 625V628M801.5 625V633M815.5 625V628M830.5 625V628M845.5 625V628M859.5 625V628M875.5 625V633M889.5 625V628M904.5 625V628M919.5 625V628M934.5 625V628M949.5 625V633M963.5 625V628M978.5 625V628M993.5 625V628M1008.5 625V628M1023.5 625V633M1037.5 625V628M1052.5 625V628M1067.5 625V628M1082.5 625V628M1097.5 625V633M1112.5 625V628M1127.5 625V628M1141.5 625V628M1156.5 625V628M1172.5 625V633" stroke="#000" fill="none"/><path d="M430 184.5H1172" stroke="#FF0000" stroke-dasharray="9 6 3 6" fill="none"/><path d="M430 279.5H1172" stroke="#0000FF" stroke-dasharray="9 6 3 6" fill="none"/><path d="M430 576.5H1172" stroke="#800000" stroke-dasharray="9 6 3 6" fill="none"/><path d="M430 188.5 L610 188.5 L624.0 197.5 L629.0 205.5 L634.0 213.4 L639.0 221.0 L644.0 228.4 L649.0 235.4 L654.0 241.9 L659.0 247.9 L664.0 253.5 L669.0 258.9 L674.0 264.3 L679.0 269.7 L684.0 275.2 L689.0 280.6 L694.0 285.9 L699.0 291.0 L704.0 296.1 L709.0 301.1 L714.0 306.1 L719.0 310.9 L721 312.8 L730 321.2 L739 329.4 L748 337.2 L757 344.8 L766 352.2 L775 359.4 L784 366.3 L793 373.1 L802 379.7 L811 386.1 L820 392.3 L829 398.4 L838 404.3 L847 410.1 L856 415.8 L865 421.4 L874 426.8 L883 432.1 L892 437.3 L901 442.4 L910 447.4 L919 452.4 L928 457.2 L937 462.0 L946 466.6 L955 471.3 L964 475.8 L973 480.3 L982 484.7 L991 489.1 L1000 493.4 L1009 497.7 L1018 501.9 L1027 506.0 L1036 510.1 L1045 514.2 L1054 518.2 L1063 522.1 L1072 526.0 L1081 529.9 L1090 533.7 L1099 537.4 L1108 541.1 L1117 544.7 L1126 548.3 L1135 551.8 L1144 555.2 L1153 558.6 L1162 561.8 L1171 565.1 L1172 565.4" stroke="#FFFF00" fill="none" stroke-width="1"/><path d="M430 185.5 L616 185.5 L624 186.2 L637.5 200.5 L642.5 206.8 L647.5 213.3 L652.5 220.0 L657.5 227.1 L662.5 234.3 L667.5 241.6 L672.5 248.6 L677.5 255.1 L682.5 261.1 L687.5 266.8 L692.5 272.5 L697.5 277.9 L702.5 283.2 L707.5 288.4 L712.5 293.4 L717.5 298.3 L721 301.6 L730 310.0 L739 318.0 L748 325.9 L757 333.6 L766 340.9 L775 348.1 L784 355.1 L793 361.8 L802 368.4 L811 374.9 L820 381.2 L829 387.4 L838 393.5 L847 399.5 L856 405.4 L865 411.2 L874 416.9 L883 422.5 L892 428.0 L901 433.4 L910 438.8 L919 444.0 L928 449.2 L937 454.3 L946 459.3 L955 464.1 L964 468.9 L973 473.6 L982 478.2 L991 482.7 L1000 487.1 L1009 491.4 L1018 495.5 L1027 499.6 L1036 503.6 L1045 507.4 L1054 511.2 L1063 514.9 L1072 518.6 L1081 522.1 L1090 525.6 L1099 529.1 L1108 532.5 L1117 535.9 L1126 539.4 L1135 542.8 L1144 546.4 L1153 550.0 L1162 553.7 L1171 557.6 L1172 558.1" stroke="#00FF00" fill="none" stroke-width="1"/><path d="M430 186.5 L611 186.5 L624.0 190.5 L629.0 198.6 L634.0 206.7 L639.0 214.5 L644.0 222.0 L649.0 229.1 L654.0 235.6 L659.0 241.6 L664.0 247.2 L669.0 252.6 L674.0 258.0 L679.0 263.4 L684.0 268.9 L689.0 274.4 L694.0 279.7 L699.0 284.9 L704.0 290.0 L709.0 295.0 L714.0 300.0 L719.0 304.9 L721 306.8 L730 315.3 L739 323.5 L748 331.5 L757 339.2 L766 346.6 L775 353.9 L784 361.0 L793 367.8 L802 374.5 L811 381.0 L820 387.4 L829 393.6 L838 399.6 L847 405.6 L856 411.3 L865 417.0 L874 422.5 L883 427.9 L892 433.2 L901 438.4 L910 443.5 L919 448.5 L928 453.4 L937 458.2 L946 463.0 L955 467.6 L964 472.2 L973 476.7 L982 481.2 L991 485.6 L1000 489.9 L1009 494.1 L1018 498.3 L1027 502.5 L1036 506.6 L1045 510.6 L1054 514.6 L1063 518.5 L1072 522.3 L1081 526.1 L1090 529.9 L1099 533.6 L1108 537.2 L1117 540.7 L1126 544.3 L1135 547.7 L1144 551.1 L1153 554.4 L1162 557.6 L1171 560.8 L1172 561.1" stroke="#FF0000" fill="none" stroke-width="1"/><path d="M430 253.5 L595 253.5 L609.5 271.2 L611 300 L612.5 319 L616 390 L622.5 484 L623.5 491 L638.5 530.5 L652.5 478.7 L656 472.5 L660 465.4 L664 458.1 L668 451.0 L672 446.8 L677 442.5 L683 436.9 L690 430.4 L697 424.8 L705 419.7 L715 414.1 L727 408.2 L740 402.3 L752 397.4 L764 392.9 L776 388.8 L788 385.1 L800 381.7 L812 378.5 L824 375.6 L836 372.9 L848 370.4 L860 368.1 L872 365.9 L884 363.8 L896 361.7 L908 359.4 L920 357.2 L932 355.3 L944 353.5 L956 351.8 L968 350.2 L980 348.7 L992 347.3 L1004 345.9 L1016 344.5 L1028 343.2 L1040 342.0 L1052 340.9 L1064 339.7 L1076 338.7 L1088 337.6 L1100 336.5 L1112 335.4 L1124 334.3 L1136 333.2 L1148 332.1 L1160 331.1 L1172 330.0" stroke="#0000FF" fill="none" stroke-width="1"/><path d="M430 506.5 L597.5 506.5 L608.7 508 L638.5 573.7 L650 575.7 L660 576.5 L1172 576.5" stroke="#800000" fill="none" stroke-width="1"/><path d="M431 624.5H1172" stroke="#FF0000" fill="none"/><path d="M1184.500 614.500L1174.500 624.500H1185M1183.500 614.500L1174.500 623.500" stroke="#FF0000" fill="none"/><path d="M677.5 146V624M924.5 146V624" stroke="#fff" fill="none"/><path d="M920 146.5H929" stroke="#fff" fill="none"/><path d="M420.5 176.5V192.5L429.5 184.5Z" stroke="#FF0000" fill="none"/><path d="M420.5 271.5V287.5L429.5 279.5Z" stroke="#0000FF" fill="none"/><path d="M420.5 568.5V584.5L429.5 576.5Z" stroke="#800000" fill="none"/></svg>
<div style="left:672px;top:136px;width:8px;height:9px;background:#C0C0C0;border:1px solid;border-color:#FFFFFF #FFFFFF #FFFFFF #FFFFFF"></div>
<svg style="left:676px;top:139px" width="4" height="7" viewBox="0 0 4 7" shape-rendering="crispEdges"><path d="M1 0h1v1h-1zM0 1h2v1h-2zM1 2h1v1h-1zM1 3h1v1h-1zM1 4h1v1h-1zM0 5h3v1h-3z" fill="#404040"/></svg>
<svg style="left:922px;top:139px" width="5" height="7" viewBox="0 0 5 7" shape-rendering="crispEdges"><path d="M1 0h2v1h-2zM0 1h1v1h-1zM3 1h1v1h-1zM2 2h1v1h-1zM1 3h1v1h-1zM0 4h1v1h-1zM0 5h4v1h-4z" fill="#909090"/></svg>
<div style="left:362px;top:172px;width:54px;height:22px;border:1px solid;border-color:#FFFFFF #404040 #404040 #FFFFFF"><div style="left:0;top:0;width:52px;height:20px;background:#C0C0C0;border:1px solid;border-color:#C0C0C0 #808080 #808080 #C0C0C0"></div></div>
<div class="cl" style="left:362px;top:177px;width:53px;text-align:right;color:#FF0000;font-size:13px;line-height:14px">Uca</div>
<div style="left:362px;top:267px;width:54px;height:22px;border:1px solid;border-color:#FFFFFF #404040 #404040 #FFFFFF"><div style="left:0;top:0;width:52px;height:20px;background:#C0C0C0;border:1px solid;border-color:#C0C0C0 #808080 #808080 #C0C0C0"></div></div>
<div class="cl" style="left:362px;top:272px;width:53px;text-align:right;color:#0000FF;font-size:13px;line-height:14px">Uf</div>
<div style="left:362px;top:564px;width:54px;height:22px;border:1px solid;border-color:#FFFFFF #404040 #404040 #FFFFFF"><div style="left:0;top:0;width:52px;height:20px;background:#C0C0C0;border:1px solid;border-color:#C0C0C0 #808080 #808080 #C0C0C0"></div></div>
<div class="cl" style="left:362px;top:569px;width:53px;text-align:right;color:#800000;font-size:13px;line-height:14px">If</div>
<div class="cl" style="left:1175px;top:169px;color:#FF0000;">0.50</div>
<div class="cl" style="left:1176px;top:185px;color:#FFFF00;">15.80</div>
<div class="cl" style="left:1175.5px;top:185px;color:#00FF00;">15.80</div>
<div class="cl" style="left:1175px;top:185px;color:#FF0000;">15.80</div>
<div class="cl" style="left:1175px;top:264px;color:#0000FF;">114</div>
<div class="cl" style="left:1175px;top:280px;color:#0000FF;">0</div>
<div class="cl" style="left:1175px;top:561px;color:#800000;">220.6</div>
<div class="cl" style="left:1175px;top:578px;color:#800000;">0.0</div>
<div style="left:1187px;top:612px;font-size:14px;-webkit-text-stroke:.3px #f00;line-height:15px;color:#FF0000;white-space:nowrap">MK</div>
<div class="cl" style="left:416px;top:637px;color:#000;">6.02</div>
<div class="cl" style="left:1159px;top:637px;color:#000;">7.02</div>
<div class="cl" style="left:766px;top:637px;color:#000;">100ms /</div>
<svg class="t" style="left:822px;top:637px;" width="17" height="17" viewBox="0 -1 17 17" role="img" aria-label="格"><title>格</title><path d="M2 0h2v1h-2zM7 0h2v1h-2zM2 1h2v1h-2zM7 1h5v1h-5zM2 2h2v1h-2zM6 2h2v1h-2zM10 2h2v1h-2zM0 3h11v1h-11zM2 4h2v1h-2zM8 4h2v1h-2zM1 5h4v1h-4zM7 5h4v1h-4zM1 6h7v1h-7zM10 6h2v1h-2zM0 7h4v1h-4zM5 7h2v1h-2zM11 7h3v1h-3zM0 8h4v1h-4zM6 8h6v1h-6zM2 9h2v1h-2zM6 9h2v1h-2zM10 9h2v1h-2zM2 10h2v1h-2zM6 10h2v1h-2zM10 10h2v1h-2zM2 11h2v1h-2zM6 11h2v1h-2zM10 11h2v1h-2zM2 12h2v1h-2zM6 12h6v1h-6z" fill="#000"/></svg>
<svg class="t" style="left:1204px;top:637px;transform:skewX(-12deg);" width="17" height="17" viewBox="0 -1 17 17" role="img" aria-label="秒"><title>秒</title><path d="M3 0h3v1h-3zM8 0h2v1h-2zM0 1h4v1h-4zM8 1h2v1h-2zM2 2h2v1h-2zM8 2h2v1h-2zM2 3h2v1h-2zM6 3h6v1h-6zM0 4h10v1h-10zM11 4h2v1h-2zM2 5h2v1h-2zM5 5h2v1h-2zM8 5h2v1h-2zM12 5h2v1h-2zM1 6h4v1h-4zM8 6h2v1h-2zM1 7h5v1h-5zM8 7h2v1h-2zM11 7h2v1h-2zM0 8h4v1h-4zM8 8h2v1h-2zM11 8h2v1h-2zM0 9h4v1h-4zM10 9h2v1h-2zM2 10h2v1h-2zM9 10h2v1h-2zM2 11h2v1h-2zM8 11h2v1h-2zM2 12h2v1h-2zM5 12h4v1h-4z" fill="#000"/></svg>
<div style="left:360px;top:654px;width:862px;height:16px;background:repeating-conic-gradient(#fff 0 25%,#D4D0C8 0 50%) 0 0/2px 2px"></div>
<div style="left:360px;top:654px;width:14px;height:14px;border:1px solid;border-color:#FFFFFF #404040 #404040 #FFFFFF"><div style="left:0;top:0;width:12px;height:12px;background:#D4D0C8;border:1px solid;border-color:#D4D0C8 #808080 #808080 #D4D0C8"></div></div>
<div style="left:1206px;top:654px;width:14px;height:14px;border:1px solid;border-color:#FFFFFF #404040 #404040 #FFFFFF"><div style="left:0;top:0;width:12px;height:12px;background:#D4D0C8;border:1px solid;border-color:#D4D0C8 #808080 #808080 #D4D0C8"></div></div>
<div style="left:542px;top:654px;width:26px;height:14px;border:1px solid;border-color:#FFFFFF #404040 #404040 #FFFFFF"><div style="left:0;top:0;width:24px;height:12px;background:#D4D0C8;border:1px solid;border-color:#D4D0C8 #808080 #808080 #D4D0C8"></div></div>
<svg style="left:360px;top:654px" width="16" height="16" viewBox="0 0 16 16" shape-rendering="crispEdges"><path d="M8 4v7h-1v-1h-1v-1h-1v-1h-1v-1h1v-1h1v-1h1v-1z" fill="#000"/></svg>
<svg style="left:1206px;top:654px" width="16" height="16" viewBox="0 0 16 16" shape-rendering="crispEdges"><path d="M6 4v7h1v-1h1v-1h1v-1h1v-1h-1v-1h-1v-1h-1v-1z" fill="#000"/></svg>
<svg style="left:19px;top:50px" width="17" height="14" viewBox="0 0 17 14" shape-rendering="crispEdges"><path d="M9 0h3v1h-3zM8 1h1v1h-1zM12 1h1v1h-1zM14 1h1v1h-1zM13 2h2v1h-2zM1 3h3v1h-3zM12 3h3v1h-3zM0 4h1v1h-1zM4 4h7v1h-7zM0 5h1v1h-1zM10 5h1v1h-1zM0 6h1v1h-1zM10 6h1v1h-1zM0 7h1v1h-1zM4 7h12v1h-12zM0 8h1v1h-1zM3 8h1v1h-1zM14 8h1v1h-1zM0 9h1v1h-1zM2 9h1v1h-1zM13 9h1v1h-1zM0 10h2v1h-2zM12 10h1v1h-1zM0 11h2v1h-2zM11 11h1v1h-1zM0 12h11v1h-11z" fill="#000"/><path d="M1 4h1v1h-1zM3 4h1v1h-1zM2 5h1v1h-1zM4 5h1v1h-1zM6 5h1v1h-1zM8 5h1v1h-1zM1 6h1v1h-1zM3 6h1v1h-1zM5 6h1v1h-1zM7 6h1v1h-1zM9 6h1v1h-1zM2 7h1v1h-1zM1 8h1v1h-1z" fill="#FFFF00"/><path d="M2 4h1v1h-1zM1 5h1v1h-1zM3 5h1v1h-1zM5 5h1v1h-1zM7 5h1v1h-1zM9 5h1v1h-1zM2 6h1v1h-1zM4 6h1v1h-1zM6 6h1v1h-1zM8 6h1v1h-1zM1 7h1v1h-1zM3 7h1v1h-1zM2 8h1v1h-1zM1 9h1v1h-1z" fill="#FFFFFF"/><path d="M4 8h10v1h-10zM3 9h10v1h-10zM2 10h10v1h-10zM2 11h9v1h-9z" fill="#808000"/></svg>
<svg style="left:50px;top:50px" width="16" height="15" viewBox="0 0 16 15" shape-rendering="crispEdges"><path d="M0 0h14v1h-14zM0 1h1v1h-1zM2 1h1v1h-1zM11 1h1v1h-1zM13 1h1v1h-1zM0 2h1v1h-1zM2 2h1v1h-1zM11 2h1v1h-1zM13 2h1v1h-1zM0 3h1v1h-1zM2 3h1v1h-1zM11 3h1v1h-1zM13 3h1v1h-1zM0 4h1v1h-1zM2 4h1v1h-1zM11 4h1v1h-1zM13 4h1v1h-1zM0 5h1v1h-1zM2 5h1v1h-1zM11 5h1v1h-1zM13 5h1v1h-1zM0 6h1v1h-1zM2 6h1v1h-1zM11 6h1v1h-1zM13 6h1v1h-1zM0 7h1v1h-1zM3 7h8v1h-8zM13 7h1v1h-1zM0 8h1v1h-1zM13 8h1v1h-1zM0 9h1v1h-1zM3 9h9v1h-9zM13 9h1v1h-1zM0 10h1v1h-1zM3 10h6v1h-6zM11 10h1v1h-1zM13 10h1v1h-1zM0 11h1v1h-1zM3 11h6v1h-6zM11 11h1v1h-1zM13 11h1v1h-1zM0 12h1v1h-1zM3 12h6v1h-6zM11 12h1v1h-1zM13 12h1v1h-1zM1 13h13v1h-13z" fill="#000"/><path d="M1 1h1v1h-1zM1 2h1v1h-1zM12 2h1v1h-1zM1 3h1v1h-1zM12 3h1v1h-1zM1 4h1v1h-1zM12 4h1v1h-1zM1 5h1v1h-1zM12 5h1v1h-1zM1 6h1v1h-1zM12 6h1v1h-1zM1 7h2v1h-2zM11 7h2v1h-2zM1 8h12v1h-12zM1 9h2v1h-2zM12 9h1v1h-1zM1 10h2v1h-2zM12 10h1v1h-1zM1 11h2v1h-2zM12 11h1v1h-1zM1 12h2v1h-2zM12 12h1v1h-1z" fill="#808000"/><path d="M3 1h8v1h-8zM12 1h1v1h-1zM10 2h1v1h-1zM10 3h1v1h-1zM10 4h1v1h-1zM10 5h1v1h-1zM3 6h8v1h-8zM9 10h2v1h-2zM9 11h2v1h-2zM9 12h2v1h-2z" fill="#FFFFFF"/><path d="M3 2h7v1h-7zM3 3h7v1h-7zM3 4h7v1h-7zM3 5h7v1h-7z" fill="#D4D0C8"/></svg>
<svg style="left:90px;top:50px" width="12" height="14" viewBox="0 0 12 14" shape-rendering="crispEdges"><path d="M3 0h1v1h-1zM7 0h1v1h-1zM3 1h1v1h-1zM7 1h1v1h-1zM3 2h2v1h-2zM6 2h2v1h-2zM4 3h1v1h-1zM6 3h1v1h-1zM4 4h3v1h-3zM5 5h1v1h-1zM4 6h3v1h-3zM3 7h1v1h-1zM5 7h1v1h-1zM7 7h1v1h-1zM1 8h3v1h-3zM5 8h1v1h-1zM7 8h3v1h-3zM0 9h1v1h-1zM3 9h1v1h-1zM5 9h1v1h-1zM7 9h1v1h-1zM10 9h1v1h-1zM0 10h1v1h-1zM3 10h1v1h-1zM7 10h1v1h-1zM10 10h1v1h-1zM0 11h1v1h-1zM3 11h1v1h-1zM7 11h1v1h-1zM10 11h1v1h-1zM1 12h2v1h-2zM8 12h2v1h-2z" fill="#fff" transform="translate(1,1)"/><path d="M3 0h1v1h-1zM7 0h1v1h-1zM3 1h1v1h-1zM7 1h1v1h-1zM3 2h2v1h-2zM6 2h2v1h-2zM4 3h1v1h-1zM6 3h1v1h-1zM4 4h3v1h-3zM5 5h1v1h-1zM4 6h3v1h-3zM3 7h1v1h-1zM5 7h1v1h-1zM7 7h1v1h-1zM1 8h3v1h-3zM5 8h1v1h-1zM7 8h3v1h-3zM0 9h1v1h-1zM3 9h1v1h-1zM5 9h1v1h-1zM7 9h1v1h-1zM10 9h1v1h-1zM0 10h1v1h-1zM3 10h1v1h-1zM7 10h1v1h-1zM10 10h1v1h-1zM0 11h1v1h-1zM3 11h1v1h-1zM7 11h1v1h-1zM10 11h1v1h-1zM1 12h2v1h-2zM8 12h2v1h-2z" fill="#808080"/></svg>
<svg style="left:118px;top:50px" width="17" height="15" viewBox="0 0 17 15" shape-rendering="crispEdges"><path d="M0 0h7v1h-7zM0 1h1v1h-1zM6 1h2v1h-2zM0 2h1v1h-1zM2 2h3v1h-3zM6 2h1v1h-1zM8 2h1v1h-1zM0 3h1v1h-1zM6 3h7v1h-7zM0 4h1v1h-1zM2 4h3v1h-3zM6 4h1v1h-1zM12 4h2v1h-2zM0 5h1v1h-1zM6 5h1v1h-1zM8 5h3v1h-3zM12 5h1v1h-1zM14 5h1v1h-1zM0 6h1v1h-1zM2 6h3v1h-3zM6 6h1v1h-1zM12 6h4v1h-4zM0 7h1v1h-1zM6 7h1v1h-1zM8 7h5v1h-5zM15 7h1v1h-1zM0 8h1v1h-1zM6 8h1v1h-1zM15 8h1v1h-1zM0 9h7v1h-7zM8 9h6v1h-6zM15 9h1v1h-1zM6 10h1v1h-1zM15 10h1v1h-1zM6 11h1v1h-1zM8 11h6v1h-6zM15 11h1v1h-1zM6 12h1v1h-1zM15 12h1v1h-1zM6 13h10v1h-10z" fill="#fff" transform="translate(1,1)"/><path d="M0 0h7v1h-7zM0 1h1v1h-1zM6 1h2v1h-2zM0 2h1v1h-1zM2 2h3v1h-3zM6 2h1v1h-1zM8 2h1v1h-1zM0 3h1v1h-1zM6 3h7v1h-7zM0 4h1v1h-1zM2 4h3v1h-3zM6 4h1v1h-1zM12 4h2v1h-2zM0 5h1v1h-1zM6 5h1v1h-1zM8 5h3v1h-3zM12 5h1v1h-1zM14 5h1v1h-1zM0 6h1v1h-1zM2 6h3v1h-3zM6 6h1v1h-1zM12 6h4v1h-4zM0 7h1v1h-1zM6 7h1v1h-1zM8 7h5v1h-5zM15 7h1v1h-1zM0 8h1v1h-1zM6 8h1v1h-1zM15 8h1v1h-1zM0 9h7v1h-7zM8 9h6v1h-6zM15 9h1v1h-1zM6 10h1v1h-1zM15 10h1v1h-1zM6 11h1v1h-1zM8 11h6v1h-6zM15 11h1v1h-1zM6 12h1v1h-1zM15 12h1v1h-1zM6 13h10v1h-10z" fill="#808080"/></svg>
<svg style="left:149px;top:50px" width="17" height="15" viewBox="0 0 17 15" shape-rendering="crispEdges"><path d="M5 0h4v1h-4zM1 1h12v1h-12zM0 2h14v1h-14zM0 3h4v1h-4zM10 3h4v1h-4zM0 4h14v1h-14zM0 5h14v1h-14zM0 6h14v1h-14zM0 7h15v1h-15zM0 8h7v1h-7zM12 8h1v1h-1zM14 8h1v1h-1zM0 9h7v1h-7zM8 9h3v1h-3zM12 9h4v1h-4zM0 10h7v1h-7zM15 10h1v1h-1zM0 11h7v1h-7zM8 11h6v1h-6zM15 11h1v1h-1zM1 12h6v1h-6zM15 12h1v1h-1zM7 13h9v1h-9zM7 8h5v1h-5zM13 8h1v1h-1zM7 9h1v1h-1zM11 9h1v1h-1zM7 10h8v1h-8zM7 11h1v1h-1zM14 11h1v1h-1zM7 12h8v1h-8z" fill="#fff" transform="translate(1,1)"/><path d="M5 0h4v1h-4zM1 1h12v1h-12zM0 2h14v1h-14zM0 3h4v1h-4zM10 3h4v1h-4zM0 4h14v1h-14zM0 5h14v1h-14zM0 6h14v1h-14zM0 7h15v1h-15zM0 8h7v1h-7zM12 8h1v1h-1zM14 8h1v1h-1zM0 9h7v1h-7zM8 9h3v1h-3zM12 9h4v1h-4zM0 10h7v1h-7zM15 10h1v1h-1zM0 11h7v1h-7zM8 11h6v1h-6zM15 11h1v1h-1zM1 12h6v1h-6zM15 12h1v1h-1zM7 13h9v1h-9z" fill="#808080"/><path d="M7 8h5v1h-5zM13 8h1v1h-1zM7 9h1v1h-1zM11 9h1v1h-1zM7 10h8v1h-8zM7 11h1v1h-1zM14 11h1v1h-1zM7 12h8v1h-8z" fill="#D4D0C8"/></svg>
<svg style="left:185px;top:50px" width="18" height="15" viewBox="0 0 18 15" shape-rendering="crispEdges"><path d="M5 0h9v1h-9zM4 1h1v1h-1zM12 1h1v1h-1zM4 2h1v1h-1zM6 2h4v1h-4zM12 2h1v1h-1zM3 3h1v1h-1zM11 3h1v1h-1zM13 3h2v1h-2zM3 4h1v1h-1zM5 4h5v1h-5zM11 4h1v1h-1zM13 4h3v1h-3zM2 5h1v1h-1zM10 5h1v1h-1zM12 5h1v1h-1zM14 5h2v1h-2zM1 6h10v1h-10zM12 6h1v1h-1zM15 6h2v1h-2zM0 7h1v1h-1zM11 7h1v1h-1zM15 7h2v1h-2zM0 8h13v1h-13zM15 8h2v1h-2zM0 9h1v1h-1zM12 9h1v1h-1zM14 9h2v1h-2zM0 10h1v1h-1zM12 10h3v1h-3zM0 11h14v1h-14zM1 12h1v1h-1zM12 12h1v1h-1zM2 13h11v1h-11z" fill="#000"/><path d="M5 1h7v1h-7zM5 2h1v1h-1zM10 2h2v1h-2zM4 3h7v1h-7zM4 4h1v1h-1zM10 4h1v1h-1zM3 5h7v1h-7zM1 9h11v1h-11z" fill="#FFFFFF"/><path d="M12 4h1v1h-1zM11 5h1v1h-1zM13 5h1v1h-1zM11 6h1v1h-1zM13 6h2v1h-2zM1 7h10v1h-10zM12 7h3v1h-3zM13 8h2v1h-2zM13 9h1v1h-1zM1 10h5v1h-5zM9 10h3v1h-3zM2 12h10v1h-10z" fill="#C0C0C0"/><path d="M6 10h3v1h-3z" fill="#FFFF00"/></svg>
<svg style="left:222px;top:50px" width="18" height="15" viewBox="0 0 18 15" shape-rendering="crispEdges"><path d="M10 0h3v1h-3zM7 1h3v1h-3zM6 2h1v1h-1zM12 2h1v1h-1zM5 3h1v1h-1zM7 3h1v1h-1zM12 3h1v1h-1zM0 4h5v1h-5zM6 4h1v1h-1zM8 4h1v1h-1zM10 4h3v1h-3zM0 5h1v1h-1zM3 5h1v1h-1zM5 5h1v1h-1zM7 5h1v1h-1zM9 5h1v1h-1zM11 5h1v1h-1zM0 6h1v1h-1zM2 6h1v1h-1zM4 6h1v1h-1zM6 6h1v1h-1zM8 6h1v1h-1zM10 6h2v1h-2zM0 7h1v1h-1zM3 7h1v1h-1zM5 7h1v1h-1zM7 7h1v1h-1zM9 7h1v1h-1zM11 7h1v1h-1zM0 8h1v1h-1zM11 8h1v1h-1zM0 9h1v1h-1zM2 9h2v1h-2zM5 9h5v1h-5zM11 9h1v1h-1zM0 10h1v1h-1zM11 10h1v1h-1zM0 11h1v1h-1zM2 11h2v1h-2zM5 11h5v1h-5zM11 11h1v1h-1zM0 12h1v1h-1zM11 12h1v1h-1zM0 13h12v1h-12z" fill="#000"/><path d="M13 0h2v1h-2zM13 1h2v1h-2zM13 2h2v1h-2zM13 3h2v1h-2zM13 4h2v1h-2zM13 5h2v1h-2z" fill="#000080"/><path d="M10 1h3v1h-3zM7 2h5v1h-5zM8 3h4v1h-4zM9 4h1v1h-1z" fill="#FFFFFF"/><path d="M1 5h2v1h-2zM10 5h1v1h-1zM1 6h1v1h-1zM1 7h2v1h-2zM10 7h1v1h-1zM1 8h10v1h-10zM1 9h1v1h-1zM4 9h1v1h-1zM10 9h1v1h-1zM1 10h10v1h-10zM1 11h1v1h-1zM4 11h1v1h-1zM10 11h1v1h-1zM1 12h10v1h-10z" fill="#D4D0C8"/></svg>
<svg style="left:253px;top:49px" width="18" height="18" viewBox="0 0 18 18"><circle cx="7.5" cy="6.5" r="5.5" fill="none" stroke="#000" stroke-width="1.3"/></svg>
<svg style="left:253px;top:58px" width="16" height="7" viewBox="0 0 16 7" shape-rendering="crispEdges"><path d="M3 0h1v1h-1zM1 1h3v1h-3zM0 2h4v1h-4zM1 3h2v1h-2z" fill="#000080"/><path d="M7 0h1v1h-1zM11 0h1v1h-1zM7 1h1v1h-1zM11 1h1v1h-1z" fill="#FF0000"/><path d="M14 0h1v1h-1zM14 1h1v1h-1zM14 2h1v1h-1zM14 3h1v1h-1zM14 4h1v1h-1zM4 5h11v1h-11z" fill="#808080"/><path d="M4 1h3v1h-3zM8 1h3v1h-3z" fill="#000"/><path d="M4 3h2v1h-2zM7 3h1v1h-1zM9 3h1v1h-1zM11 3h1v1h-1zM13 3h1v1h-1zM4 4h1v1h-1zM9 4h1v1h-1zM11 4h1v1h-1zM13 4h1v1h-1z" fill="#0000FF"/><path d="M5 4h4v1h-4z" fill="#00C000"/></svg>
<svg style="left:292px;top:50px" width="13" height="15" viewBox="0 0 13 15" shape-rendering="crispEdges"><path d="M3 0h6v1h-6zM2 1h1v1h-1zM9 1h1v1h-1zM1 2h1v1h-1zM4 2h4v1h-4zM10 2h1v1h-1zM1 3h1v1h-1zM4 3h1v1h-1zM7 3h1v1h-1zM10 3h1v1h-1zM2 4h2v1h-2zM7 4h1v1h-1zM10 4h1v1h-1zM6 5h1v1h-1zM9 5h1v1h-1zM5 6h1v1h-1zM8 6h1v1h-1zM4 7h1v1h-1zM7 7h1v1h-1zM4 8h1v1h-1zM7 8h1v1h-1zM4 9h4v1h-4zM4 10h4v1h-4zM4 11h1v1h-1zM7 11h1v1h-1zM4 12h1v1h-1zM7 12h1v1h-1zM4 13h4v1h-4z" fill="#000"/><path d="M3 1h6v1h-6zM2 2h2v1h-2zM8 2h2v1h-2zM2 3h2v1h-2zM8 3h2v1h-2zM8 4h2v1h-2zM7 5h2v1h-2zM6 6h2v1h-2zM5 7h2v1h-2zM5 8h2v1h-2zM5 11h2v1h-2zM5 12h2v1h-2z" fill="#FFFF00"/></svg>
<svg style="left:329px;top:49px" width="14" height="14" viewBox="0 0 14 14"><circle cx="7" cy="7" r="5.5" fill="#ECEAE6" stroke="#000" stroke-width="1.15"/></svg>
<svg style="left:329px;top:49px" width="14" height="14" viewBox="0 0 14 14" shape-rendering="crispEdges"><path d="M4 7h6v1h-6z" fill="#000"/></svg>
<svg style="left:329px;top:60px" width="6" height="5" viewBox="0 0 6 5" shape-rendering="crispEdges"><path d="M1 0h3v1h-3zM0 1h2v1h-2zM3 1h2v1h-2zM0 2h4v1h-4zM1 3h2v1h-2z" fill="#000080"/><path d="M2 1h1v1h-1z" fill="#C0C0C0"/></svg>
<svg style="left:343px;top:59px" width="6" height="8" viewBox="0 0 6 8" shape-rendering="crispEdges"><path d="M0 0h1v1h-1zM4 0h1v1h-1zM0 1h2v1h-2zM3 1h2v1h-2zM1 2h3v1h-3zM2 3h1v1h-1zM1 4h3v1h-3zM0 5h2v1h-2zM3 5h2v1h-2zM0 6h1v1h-1zM4 6h1v1h-1z" fill="#0000FF"/></svg>
<svg style="left:360px;top:49px" width="14" height="14" viewBox="0 0 14 14"><circle cx="7" cy="7" r="5.5" fill="#ECEAE6" stroke="#000" stroke-width="1.15"/></svg>
<svg style="left:360px;top:49px" width="14" height="14" viewBox="0 0 14 14" shape-rendering="crispEdges"><path d="M4 7h5v1h-5zM6 5h1v5h-1z" fill="#000"/></svg>
<svg style="left:360px;top:60px" width="6" height="5" viewBox="0 0 6 5" shape-rendering="crispEdges"><path d="M1 0h3v1h-3zM0 1h2v1h-2zM3 1h2v1h-2zM0 2h4v1h-4zM1 3h2v1h-2z" fill="#000080"/><path d="M2 1h1v1h-1z" fill="#C0C0C0"/></svg>
<svg style="left:374px;top:59px" width="6" height="8" viewBox="0 0 6 8" shape-rendering="crispEdges"><path d="M0 0h1v1h-1zM4 0h1v1h-1zM0 1h2v1h-2zM3 1h2v1h-2zM1 2h3v1h-3zM2 3h1v1h-1zM1 4h3v1h-3zM0 5h2v1h-2zM3 5h2v1h-2zM0 6h1v1h-1zM4 6h1v1h-1z" fill="#0000FF"/></svg>
<svg style="left:391px;top:49px" width="14" height="14" viewBox="0 0 14 14"><circle cx="7" cy="7" r="5.5" fill="#ECEAE6" stroke="#000" stroke-width="1.15"/></svg>
<svg style="left:391px;top:49px" width="14" height="14" viewBox="0 0 14 14" shape-rendering="crispEdges"><path d="M4 7h6v1h-6z" fill="#000"/></svg>
<svg style="left:391px;top:60px" width="6" height="5" viewBox="0 0 6 5" shape-rendering="crispEdges"><path d="M1 0h3v1h-3zM0 1h2v1h-2zM3 1h2v1h-2zM0 2h4v1h-4zM1 3h2v1h-2z" fill="#000080"/><path d="M2 1h1v1h-1z" fill="#C0C0C0"/></svg>
<svg style="left:404px;top:58px" width="6" height="9" viewBox="0 0 6 9" shape-rendering="crispEdges"><path d="M0 0h1v1h-1zM4 0h1v1h-1zM0 1h1v1h-1zM4 1h1v1h-1zM1 2h1v1h-1zM3 2h1v1h-1zM1 3h1v1h-1zM3 3h1v1h-1zM2 4h1v1h-1zM2 5h1v1h-1zM2 6h1v1h-1zM2 7h1v1h-1z" fill="#0000FF"/></svg>
<svg style="left:422px;top:49px" width="14" height="14" viewBox="0 0 14 14"><circle cx="7" cy="7" r="5.5" fill="#ECEAE6" stroke="#000" stroke-width="1.15"/></svg>
<svg style="left:422px;top:49px" width="14" height="14" viewBox="0 0 14 14" shape-rendering="crispEdges"><path d="M4 7h5v1h-5zM6 5h1v5h-1z" fill="#000"/></svg>
<svg style="left:422px;top:60px" width="6" height="5" viewBox="0 0 6 5" shape-rendering="crispEdges"><path d="M1 0h3v1h-3zM0 1h2v1h-2zM3 1h2v1h-2zM0 2h4v1h-4zM1 3h2v1h-2z" fill="#000080"/><path d="M2 1h1v1h-1z" fill="#C0C0C0"/></svg>
<svg style="left:435px;top:58px" width="6" height="9" viewBox="0 0 6 9" shape-rendering="crispEdges"><path d="M0 0h1v1h-1zM4 0h1v1h-1zM0 1h1v1h-1zM4 1h1v1h-1zM1 2h1v1h-1zM3 2h1v1h-1zM1 3h1v1h-1zM3 3h1v1h-1zM2 4h1v1h-1zM2 5h1v1h-1zM2 6h1v1h-1zM2 7h1v1h-1z" fill="#0000FF"/></svg>
<svg style="left:454px;top:45px" width="18" height="26" viewBox="0 0 18 26" shape-rendering="crispEdges"><path d="M2.5 4V24M12.5 4V24" stroke="#808080" fill="none"/><rect x="1.5" y="1.5" width="2" height="2" fill="#fff" stroke="#808080"/><rect x="11.500" y="1.500" width="2" height="2" fill="#fff" stroke="#808080"/></svg>
<svg style="left:454px;top:45px" width="18" height="26" viewBox="0 0 18 26"><circle cx="8" cy="12" r="5.5" fill="none" stroke="#000" stroke-width="1.15"/></svg>
<svg style="left:455px;top:61px" width="6" height="5" viewBox="0 0 6 5" shape-rendering="crispEdges"><path d="M1 0h3v1h-3zM0 1h2v1h-2zM3 1h2v1h-2zM0 2h4v1h-4zM1 3h2v1h-2z" fill="#000080"/><path d="M2 1h1v1h-1z" fill="#C0C0C0"/></svg>
<svg style="left:489px;top:53px" width="6" height="9" viewBox="0 0 6 9" shape-rendering="crispEdges"><path d="M1 0h3v1h-3zM0 1h1v1h-1zM4 1h1v1h-1zM0 2h1v1h-1zM4 2h1v1h-1zM0 3h1v1h-1zM4 3h1v1h-1zM0 4h1v1h-1zM4 4h1v1h-1zM0 5h1v1h-1zM4 5h1v1h-1zM0 6h1v1h-1zM4 6h1v1h-1zM1 7h3v1h-3z" fill="#000"/></svg>
<div style="left:497px;top:57px;width:13px;height:1px;background:#000;"></div>
<svg style="left:498px;top:47px" width="12" height="10" viewBox="0 0 12 10" shape-rendering="crispEdges"><path d="M5 0h1v1h-1zM4 1h3v1h-3zM3 2h5v1h-5zM2 3h7v1h-7zM1 4h9v1h-9zM0 5h11v1h-11zM2 6h7v1h-7zM2 7h7v1h-7zM2 8h7v1h-7z" fill="#0000FF"/></svg>
<svg style="left:520px;top:54px" width="6" height="9" viewBox="0 0 6 9" shape-rendering="crispEdges"><path d="M1 0h3v1h-3zM0 1h1v1h-1zM4 1h1v1h-1zM0 2h1v1h-1zM4 2h1v1h-1zM0 3h1v1h-1zM4 3h1v1h-1zM0 4h1v1h-1zM4 4h1v1h-1zM0 5h1v1h-1zM4 5h1v1h-1zM0 6h1v1h-1zM4 6h1v1h-1zM1 7h3v1h-3z" fill="#000"/></svg>
<div style="left:528px;top:58px;width:13px;height:1px;background:#000;"></div>
<svg style="left:529px;top:60px" width="12" height="11" viewBox="0 0 12 11" shape-rendering="crispEdges"><path d="M2 0h7v1h-7zM2 1h7v1h-7zM2 2h7v1h-7zM2 3h7v1h-7zM0 4h11v1h-11zM1 5h9v1h-9zM2 6h7v1h-7zM3 7h5v1h-5zM4 8h3v1h-3zM5 9h1v1h-1z" fill="#0000FF"/></svg>
<svg style="left:559px;top:55px" width="6" height="7" viewBox="0 0 6 7" shape-rendering="crispEdges"><path d="M1 0h3v1h-3zM0 1h2v1h-2zM3 1h2v1h-2zM0 2h2v1h-2zM3 2h2v1h-2zM0 3h2v1h-2zM3 3h2v1h-2zM0 4h2v1h-2zM3 4h2v1h-2zM1 5h3v1h-3z" fill="#000080"/></svg>
<svg style="left:565px;top:50px" width="11" height="15" viewBox="0 0 11 15" shape-rendering="crispEdges"><path d="M1 0h1v1h-1zM0 1h2v1h-2zM1 2h1v1h-1zM0 3h2v1h-2zM1 4h1v1h-1zM0 5h2v1h-2zM1 6h1v1h-1zM0 7h10v1h-10zM1 8h1v1h-1zM0 9h2v1h-2zM1 10h1v1h-1zM0 11h2v1h-2zM1 12h1v1h-1zM0 13h2v1h-2z" fill="#808080"/></svg>
<svg style="left:570px;top:51px" width="6" height="14" viewBox="0 0 6 14" shape-rendering="crispEdges"><path d="M2 0h1v1h-1zM2 1h1v1h-1zM0 2h5v1h-5zM1 3h3v1h-3zM2 4h1v1h-1zM2 5h1v1h-1zM2 7h1v1h-1zM2 8h1v1h-1zM1 9h3v1h-3zM0 10h5v1h-5zM2 11h1v1h-1zM2 12h1v1h-1z" fill="#FF0000"/></svg>
<svg style="left:590px;top:47px" width="6" height="8" viewBox="0 0 6 8" shape-rendering="crispEdges"><path d="M2 0h2v1h-2zM1 1h3v1h-3zM2 2h2v1h-2zM2 3h2v1h-2zM2 4h2v1h-2zM2 5h2v1h-2zM1 6h4v1h-4z" fill="#0000FF"/></svg>
<svg style="left:590px;top:62px" width="6" height="8" viewBox="0 0 6 8" shape-rendering="crispEdges"><path d="M2 0h2v1h-2zM1 1h3v1h-3zM2 2h2v1h-2zM2 3h2v1h-2zM2 4h2v1h-2zM2 5h2v1h-2zM1 6h4v1h-4z" fill="#0000FF"/></svg>
<div style="left:587px;top:65px;width:3px;height:2px;background:#0000FF;"></div>
<svg style="left:596px;top:50px" width="15" height="17" viewBox="0 0 15 17" shape-rendering="crispEdges"><path d="M1 0h1v1h-1zM0 1h2v1h-2zM1 2h1v1h-1zM0 3h2v1h-2zM1 4h1v1h-1zM0 5h2v1h-2zM1 6h1v1h-1zM3 6h1v1h-1zM5 6h1v1h-1zM7 6h1v1h-1zM9 6h1v1h-1zM11 6h1v1h-1zM13 6h1v1h-1zM1 7h13v1h-13zM1 8h1v1h-1zM0 9h2v1h-2zM1 10h1v1h-1zM0 11h2v1h-2zM1 12h1v1h-1zM0 13h2v1h-2zM1 14h1v1h-1zM0 15h2v1h-2z" fill="#808080"/></svg>
<svg style="left:601px;top:46px" width="7" height="5" viewBox="0 0 7 5" shape-rendering="crispEdges"><path d="M2 0h2v1h-2zM0 1h6v1h-6zM1 2h4v1h-4zM2 3h2v1h-2z" fill="#FF0000"/></svg>
<svg style="left:601px;top:66px" width="7" height="5" viewBox="0 0 7 5" shape-rendering="crispEdges"><path d="M2 0h2v1h-2zM1 1h4v1h-4zM0 2h6v1h-6zM2 3h2v1h-2z" fill="#FF0000"/></svg>
<div style="left:618px;top:58px;width:8px;height:2px;background:#0000FF;"></div>
<div style="left:621px;top:55px;width:2px;height:8px;background:#0000FF;"></div>
<svg style="left:627px;top:49px" width="16" height="16" viewBox="0 0 16 16"><path d="M1.500 6.500L5 3 8.500 6 12.500 2.500" stroke="#fff" stroke-width="1.200" fill="none" transform="translate(0,1)"/><path d="M1.500 10.500L5 7 8.500 10 12.500 6.500" stroke="#fff" stroke-width="1.200" fill="none" transform="translate(0,1)"/><path d="M1.500 14.500L5 11 8.500 14 12.500 10.500" stroke="#fff" stroke-width="1.200" fill="none" transform="translate(0,1)"/><path d="M1.500 6.500L5 3 8.500 6 12.500 2.500" stroke="#FF0000" stroke-width="1.200" fill="none"/><path d="M1.500 10.500L5 7 8.500 10 12.500 6.500" stroke="#00E000" stroke-width="1.200" fill="none"/><path d="M1.500 14.500L5 11 8.500 14 12.500 10.500" stroke="#0000FF" stroke-width="1.200" fill="none"/></svg>
<svg style="left:659px;top:49px" width="20" height="20" viewBox="0 0 20 20" shape-rendering="crispEdges"><path d="M0 0h18v1h-18zM0 1h1v1h-1zM5 1h6v1h-6zM17 1h1v1h-1zM0 2h1v1h-1zM5 2h6v1h-6zM17 2h1v1h-1zM0 3h1v1h-1zM17 3h1v1h-1zM0 4h1v1h-1zM17 4h1v1h-1zM0 5h1v1h-1zM2 5h2v1h-2zM6 5h2v1h-2zM11 5h2v1h-2zM15 5h1v1h-1zM17 5h1v1h-1zM0 6h1v1h-1zM2 6h2v1h-2zM6 6h2v1h-2zM11 6h2v1h-2zM15 6h1v1h-1zM17 6h1v1h-1zM0 7h1v1h-1zM2 7h2v1h-2zM6 7h2v1h-2zM11 7h2v1h-2zM15 7h1v1h-1zM17 7h1v1h-1zM0 8h1v1h-1zM2 8h2v1h-2zM6 8h2v1h-2zM11 8h2v1h-2zM15 8h1v1h-1zM17 8h1v1h-1zM0 9h1v1h-1zM2 9h2v1h-2zM6 9h2v1h-2zM11 9h2v1h-2zM15 9h1v1h-1zM17 9h1v1h-1zM0 10h1v1h-1zM2 10h2v1h-2zM6 10h2v1h-2zM11 10h2v1h-2zM15 10h1v1h-1zM17 10h1v1h-1zM0 11h1v1h-1zM2 11h2v1h-2zM6 11h2v1h-2zM11 11h2v1h-2zM15 11h1v1h-1zM17 11h1v1h-1zM0 12h1v1h-1zM2 12h2v1h-2zM6 12h2v1h-2zM11 12h2v1h-2zM15 12h1v1h-1zM17 12h1v1h-1zM0 13h1v1h-1zM2 13h2v1h-2zM6 13h2v1h-2zM11 13h2v1h-2zM15 13h1v1h-1zM17 13h1v1h-1zM0 14h1v1h-1zM2 14h2v1h-2zM6 14h2v1h-2zM11 14h2v1h-2zM15 14h1v1h-1zM17 14h1v1h-1zM0 15h1v1h-1zM17 15h2v1h-2zM0 16h1v1h-1zM17 16h2v1h-2zM0 17h19v1h-19zM2 18h17v1h-17z" fill="#808080"/><path d="M2 1h1v1h-1zM4 1h1v1h-1zM11 1h1v1h-1zM13 1h1v1h-1zM15 1h1v1h-1zM2 2h1v1h-1zM4 2h1v1h-1zM11 2h1v1h-1zM13 2h1v1h-1zM15 2h1v1h-1zM2 3h1v1h-1zM4 3h1v1h-1zM11 3h1v1h-1zM13 3h1v1h-1zM15 3h1v1h-1zM1 4h16v1h-16zM4 5h1v1h-1zM9 5h1v1h-1zM14 5h1v1h-1zM16 5h1v1h-1zM4 6h1v1h-1zM9 6h1v1h-1zM14 6h1v1h-1zM16 6h1v1h-1zM4 7h1v1h-1zM9 7h1v1h-1zM14 7h1v1h-1zM16 7h1v1h-1zM4 8h1v1h-1zM9 8h1v1h-1zM14 8h1v1h-1zM16 8h1v1h-1zM4 9h1v1h-1zM9 9h1v1h-1zM14 9h1v1h-1zM16 9h1v1h-1zM4 10h1v1h-1zM9 10h1v1h-1zM14 10h1v1h-1zM16 10h1v1h-1zM4 11h1v1h-1zM9 11h1v1h-1zM14 11h1v1h-1zM16 11h1v1h-1zM4 12h1v1h-1zM9 12h1v1h-1zM14 12h1v1h-1zM16 12h1v1h-1zM4 13h1v1h-1zM9 13h1v1h-1zM14 13h1v1h-1zM16 13h1v1h-1zM4 14h1v1h-1zM9 14h1v1h-1zM14 14h1v1h-1zM16 14h1v1h-1zM1 15h16v1h-16zM1 16h16v1h-16z" fill="#FFFFFF"/></svg>
<svg style="left:690px;top:49px" width="24" height="22" viewBox="0 0 24 22"><path d="M10.500 0V20M0 17.500H22" stroke="#fff" fill="none" transform="translate(1,1)"/><path d="M4.500 3.500H14.500L19.500 8.500V17" stroke="#fff" fill="none" transform="translate(1,1)"/><path d="M4.500 3.500L1.500 13 3.500 15 7 4" stroke="#fff" fill="none" transform="translate(1,1)"/><path d="M4 17Q4 15 6 14L15 7" stroke="#fff" fill="none" stroke-width="1.5" transform="translate(1,1)"/><path d="M10.500 0V20M0 17.500H22" stroke="#808080" fill="none"/><path d="M4.500 3.500H14.500L19.500 8.500V17" stroke="#808080" fill="none"/><path d="M4.500 3.500L1.500 13 3.500 15 7 4" stroke="#808080" fill="none"/><path d="M4 17Q4 15 6 14L15 7" stroke="#808080" fill="none" stroke-width="1.5"/></svg>
<svg style="left:727px;top:52px" width="22" height="16" viewBox="0 0 22 16" shape-rendering="crispEdges"><path d="M0 0h1v11h-1zM2 5h1v6h-1zM4 8h1v3h-1zM6 5h1v6h-1zM8 9h1v2h-1zM10 7h1v4h-1zM12 9h1v2h-1zM14 8h1v3h-1zM16 10h1v1h-1zM18 10h1v1h-1zM0 13h1v1h-1zM2 13h1v1h-1zM4 13h1v1h-1zM6 13h1v1h-1zM8 13h1v1h-1zM10 13h1v1h-1zM12 13h1v1h-1zM14 13h1v1h-1zM16 13h1v1h-1zM18 13h1v1h-1z" fill="#fff" transform="translate(1,1)"/><path d="M0 0h1v11h-1zM2 5h1v6h-1zM4 8h1v3h-1zM6 5h1v6h-1zM8 9h1v2h-1zM10 7h1v4h-1zM12 9h1v2h-1zM14 8h1v3h-1zM16 10h1v1h-1zM18 10h1v1h-1zM0 13h1v1h-1zM2 13h1v1h-1zM4 13h1v1h-1zM6 13h1v1h-1zM8 13h1v1h-1zM10 13h1v1h-1zM12 13h1v1h-1zM14 13h1v1h-1zM16 13h1v1h-1zM18 13h1v1h-1z" fill="#808080"/></svg>
<svg style="left:761px;top:50px" width="18" height="16" viewBox="0 0 18 16"><path d="M7.500 0V9L0 13M7.500 9L15.500 13" stroke="#fff" fill="none" transform="translate(1,1)"/><path d="M7.500 0V9L0 13M7.500 9L15.500 13" stroke="#808080" fill="none"/></svg>
<svg style="left:6px;top:4px" width="17" height="17" viewBox="0 0 17 17" shape-rendering="crispEdges"><path d="M0 0h5v1h-5zM11 0h5v1h-5zM0 1h1v1h-1zM15 1h1v1h-1zM0 2h1v1h-1zM15 2h1v1h-1zM15 3h1v1h-1zM0 4h1v1h-1zM15 4h1v1h-1zM0 5h1v1h-1zM15 5h1v1h-1zM15 6h1v1h-1zM0 7h1v1h-1zM15 7h1v1h-1zM0 8h1v1h-1zM15 8h1v1h-1zM15 9h1v1h-1zM0 10h1v1h-1zM15 10h1v1h-1zM0 11h1v1h-1zM15 11h1v1h-1zM15 12h1v1h-1zM0 13h1v1h-1zM15 13h1v1h-1zM0 14h1v1h-1zM15 14h1v1h-1zM0 15h1v1h-1zM2 15h2v1h-2zM5 15h2v1h-2zM8 15h2v1h-2zM11 15h2v1h-2zM14 15h2v1h-2z" fill="#F0F0EA"/><path d="M5 0h6v1h-6zM5 1h6v1h-6z" fill="#800000"/><path d="M1 1h4v1h-4zM11 1h4v1h-4zM1 2h1v1h-1zM14 2h1v1h-1zM1 3h1v1h-1zM14 3h1v1h-1zM1 4h1v1h-1zM14 4h1v1h-1zM1 5h1v1h-1zM14 5h1v1h-1zM1 6h1v1h-1zM14 6h1v1h-1zM1 7h1v1h-1zM14 7h1v1h-1zM1 8h1v1h-1zM14 8h1v1h-1zM1 9h1v1h-1zM14 9h1v1h-1zM1 10h1v1h-1zM14 10h1v1h-1zM1 11h1v1h-1zM14 11h1v1h-1zM1 12h1v1h-1zM14 12h1v1h-1zM14 13h1v1h-1zM2 14h13v1h-13z" fill="#A0A0A0"/><path d="M2 2h12v1h-12zM2 3h12v1h-12zM2 4h9v1h-9zM2 5h7v1h-7zM2 6h5v1h-5zM11 6h1v1h-1zM13 6h1v1h-1zM2 7h4v1h-4zM7 7h1v1h-1zM9 7h1v1h-1zM11 7h3v1h-3zM2 8h3v1h-3zM6 8h1v1h-1zM8 8h2v1h-2zM11 8h3v1h-3zM2 9h2v1h-2zM5 9h3v1h-3zM10 9h4v1h-4zM2 10h1v1h-1zM5 10h1v1h-1zM8 10h6v1h-6zM6 11h8v1h-8zM4 12h10v1h-10zM4 13h10v1h-10z" fill="#C8C8C8"/><path d="M0 3h1v1h-1zM0 6h1v1h-1zM0 9h1v1h-1zM0 12h1v1h-1zM1 15h1v1h-1zM4 15h1v1h-1zM7 15h1v1h-1zM10 15h1v1h-1zM13 15h1v1h-1z" fill="#000"/><path d="M11 4h2v1h-2zM9 5h2v1h-2zM7 6h2v1h-2zM6 7h1v1h-1zM5 8h1v1h-1zM4 9h1v1h-1zM3 10h1v1h-1zM2 11h1v1h-1zM2 12h1v1h-1zM1 13h1v1h-1zM3 13h1v1h-1z" fill="#0000FF"/><path d="M13 4h1v1h-1zM11 5h2v1h-2zM9 6h2v1h-2zM8 7h1v1h-1zM7 8h1v1h-1zM4 10h1v1h-1zM3 11h1v1h-1zM1 14h1v1h-1z" fill="#008000"/><path d="M13 5h1v1h-1zM12 6h1v1h-1zM10 7h1v1h-1zM10 8h1v1h-1zM8 9h2v1h-2zM6 10h2v1h-2zM4 11h2v1h-2zM3 12h1v1h-1zM2 13h1v1h-1z" fill="#FF0000"/></svg>
<svg style="left:8px;top:23px" width="17" height="17" viewBox="0 0 17 17" shape-rendering="crispEdges"><path d="M0 0h16v1h-16zM0 1h1v1h-1zM3 1h1v1h-1zM5 1h1v1h-1zM7 1h1v1h-1zM9 1h1v1h-1zM11 1h1v1h-1zM13 1h1v1h-1zM15 1h1v1h-1zM0 2h2v1h-2zM3 2h11v1h-11zM15 2h1v1h-1zM0 3h1v1h-1zM3 3h11v1h-11zM15 3h1v1h-1zM0 4h2v1h-2zM3 4h4v1h-4zM11 4h3v1h-3zM15 4h1v1h-1zM0 5h1v1h-1zM7 5h4v1h-4zM15 5h1v1h-1zM0 6h2v1h-2zM3 6h11v1h-11zM15 6h1v1h-1zM0 7h1v1h-1zM5 7h5v1h-5zM15 7h1v1h-1zM0 8h2v1h-2zM3 8h2v1h-2zM7 8h1v1h-1zM10 8h4v1h-4zM15 8h1v1h-1zM0 9h1v1h-1zM4 9h3v1h-3zM9 9h1v1h-1zM11 9h2v1h-2zM15 9h1v1h-1zM0 10h2v1h-2zM3 10h1v1h-1zM7 10h2v1h-2zM10 10h1v1h-1zM13 10h1v1h-1zM15 10h1v1h-1zM0 11h1v1h-1zM3 11h11v1h-11zM15 11h1v1h-1zM0 12h14v1h-14zM15 12h1v1h-1zM0 13h1v1h-1zM2 13h1v1h-1zM4 13h1v1h-1zM6 13h1v1h-1zM8 13h1v1h-1zM10 13h1v1h-1zM12 13h1v1h-1zM14 13h2v1h-2zM0 14h16v1h-16zM0 15h16v1h-16z" fill="#C0C0C0"/><path d="M1 1h1v1h-1zM1 3h1v1h-1zM1 5h1v1h-1zM1 7h1v1h-1zM1 9h1v1h-1zM1 11h1v1h-1zM1 13h1v1h-1zM3 13h1v1h-1zM5 13h1v1h-1zM7 13h1v1h-1zM9 13h1v1h-1zM11 13h1v1h-1zM13 13h1v1h-1z" fill="#000"/><path d="M2 1h1v1h-1zM2 2h1v1h-1zM2 3h1v1h-1zM2 4h1v1h-1zM2 5h1v1h-1zM2 6h1v1h-1zM2 7h1v1h-1zM2 8h1v1h-1zM2 9h1v1h-1zM2 10h1v1h-1zM2 11h1v1h-1z" fill="#606060"/><path d="M4 1h1v1h-1zM6 1h1v1h-1zM8 1h1v1h-1zM10 1h1v1h-1zM12 1h1v1h-1zM14 1h1v1h-1zM14 2h1v1h-1zM14 3h1v1h-1zM14 4h1v1h-1zM14 5h1v1h-1zM14 6h1v1h-1zM14 7h1v1h-1zM14 8h1v1h-1zM14 9h1v1h-1zM14 10h1v1h-1zM14 11h1v1h-1zM14 12h1v1h-1z" fill="#808080"/><path d="M7 4h4v1h-4zM3 5h4v1h-4zM11 5h3v1h-3z" fill="#FF00FF"/><path d="M3 7h2v1h-2zM5 8h2v1h-2zM8 9h1v1h-1zM10 9h1v1h-1zM13 9h1v1h-1zM9 10h1v1h-1zM11 10h2v1h-2z" fill="#0000FF"/><path d="M10 7h4v1h-4zM8 8h2v1h-2zM3 9h1v1h-1zM7 9h1v1h-1zM4 10h3v1h-3z" fill="#FF0000"/></svg>
</body></html>
